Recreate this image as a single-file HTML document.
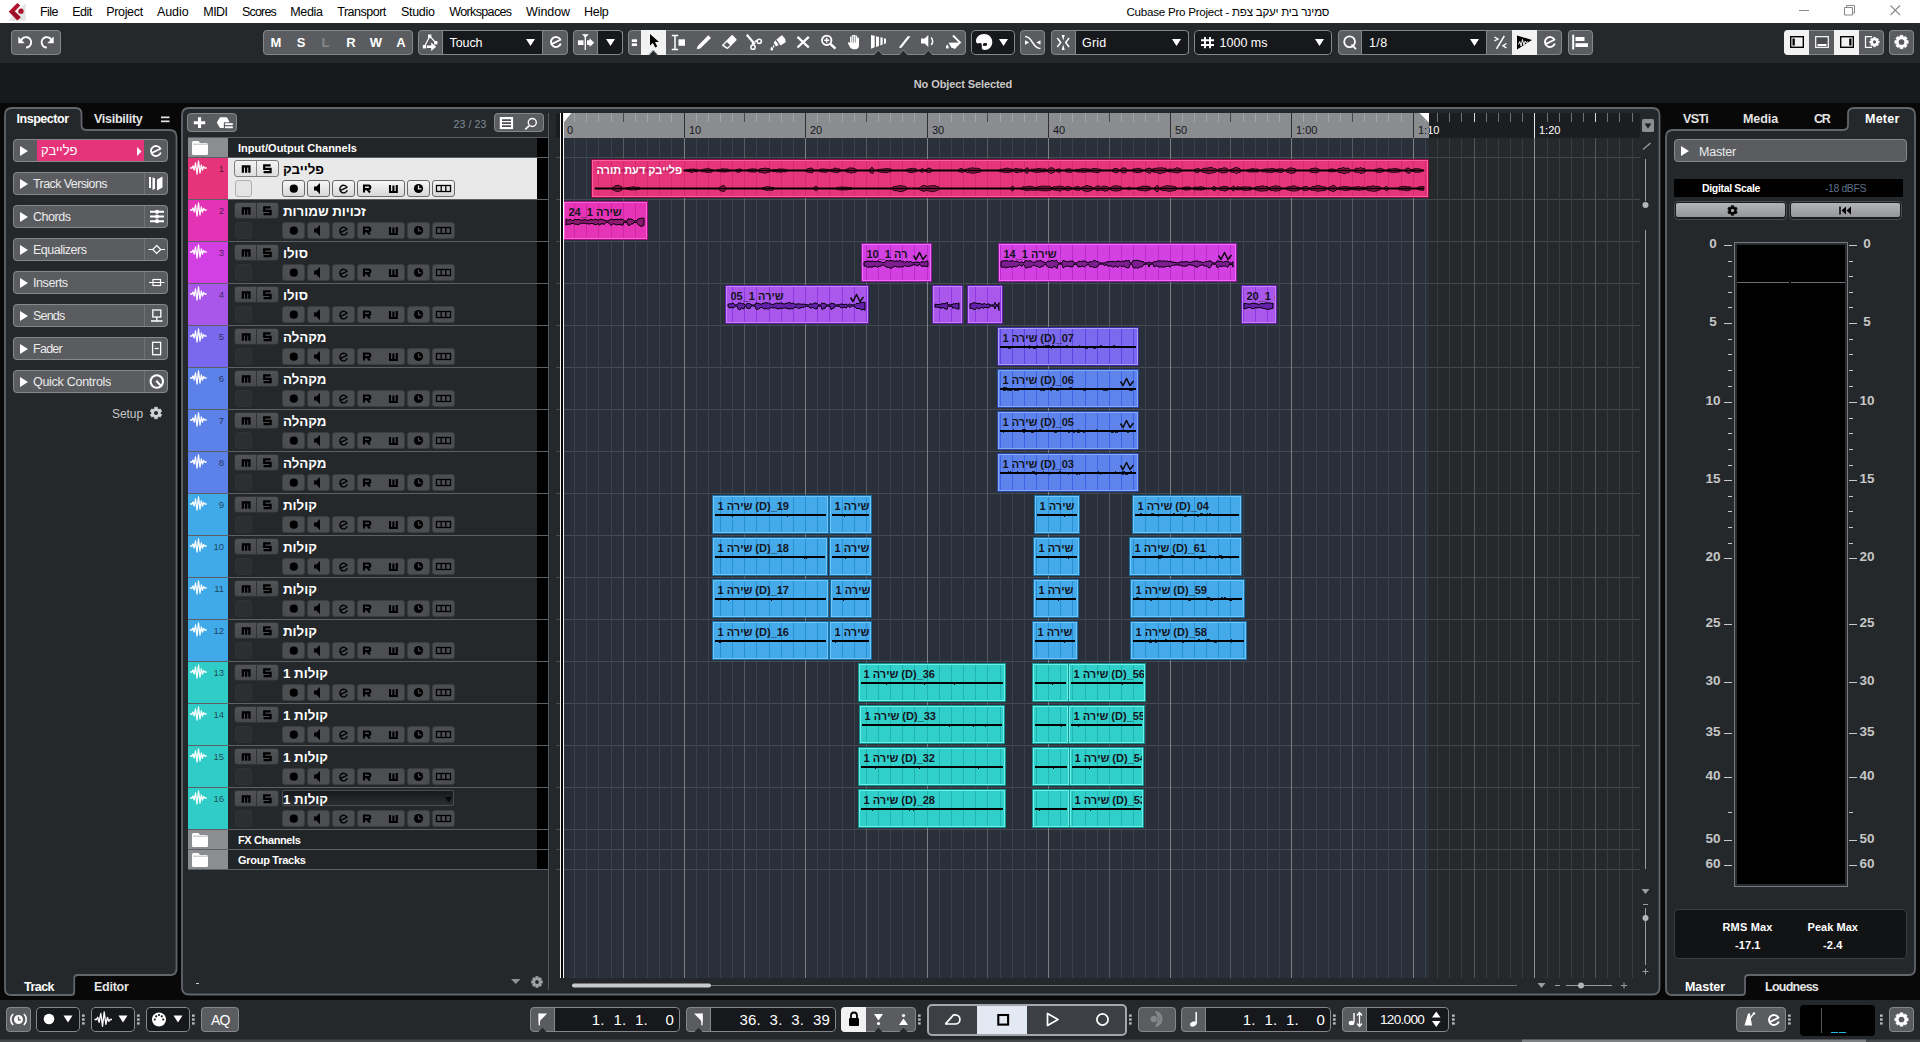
<!DOCTYPE html><html><head><meta charset="utf-8"><title>Cubase Pro Project</title><style>
*{box-sizing:border-box;margin:0;padding:0}
html,body{width:1920px;height:1042px;overflow:hidden;background:#080808}
body{position:relative;font-family:"Liberation Sans",sans-serif;font-size:12px;color:#e6e6e6;-webkit-font-smoothing:antialiased}
.a{position:absolute}
.t{position:absolute;white-space:nowrap;line-height:1}
.b{font-weight:bold}
svg{position:absolute;overflow:visible}
.btn{position:absolute;background:#5a5c60;border:1px solid #6e7074;border-radius:3px}
.dk{position:absolute;background:#17181c}
.grp{position:absolute;z-index:0;border-radius:4px;background:#5a5c60;overflow:hidden}
.grp:after{content:'';position:absolute;left:0;top:0;right:0;bottom:0;border:1px solid #85878b;border-radius:4px}
.grp .w{z-index:2}
.cell{position:absolute;top:0;bottom:0}
.panel{position:absolute;background:#24282b;border:2px solid #3d4145;border-radius:8px}
.ev{font-size:11px;font-weight:bold;overflow:hidden;height:16px;line-height:14px}</style></head><body><div class="a" style="left:0px;top:0px;width:1920px;height:23px;background:#fff"></div><svg style="left:0px;top:0px" width="30" height="23" viewBox="0 0 30 23" ><path d="M25.600 3.200V20.700H8z" fill="#e4e4e4"/><path d="M17.300 2.900l3 2.600-5.600 6 6 5.800-3.400 2.900L8.800 11.500z" fill="#b3122c"/><path d="M8.800 11.500l5.900 0 6 5.800-3.400 2.900z" fill="#9c0f26"/><circle cx="21" cy="11.200" r="2.600" fill="#a80f28"/></svg><div class="t" style="left:40px;top:5.5px;font-size:12.5px;color:#000;letter-spacing:-0.54px;">File</div><div class="t" style="left:72.25px;top:5.5px;font-size:12.5px;color:#000;letter-spacing:-0.51px;">Edit</div><div class="t" style="left:106.25px;top:5.5px;font-size:12.5px;color:#000;letter-spacing:-0.34px;">Project</div><div class="t" style="left:157px;top:5.5px;font-size:12.5px;color:#000;letter-spacing:-0.09px;">Audio</div><div class="t" style="left:203.25px;top:5.5px;font-size:12.5px;color:#000;letter-spacing:-0.53px;">MIDI</div><div class="t" style="left:242px;top:5.5px;font-size:12.5px;color:#000;letter-spacing:-0.82px;">Scores</div><div class="t" style="left:290.25px;top:5.5px;font-size:12.5px;color:#000;letter-spacing:-0.36px;">Media</div><div class="t" style="left:337.25px;top:5.5px;font-size:12.5px;color:#000;letter-spacing:-0.50px;">Transport</div><div class="t" style="left:401px;top:5.5px;font-size:12.5px;color:#000;letter-spacing:-0.32px;">Studio</div><div class="t" style="left:449.25px;top:5.5px;font-size:12.5px;color:#000;letter-spacing:-0.63px;">Workspaces</div><div class="t" style="left:526px;top:5.5px;font-size:12.5px;color:#000;letter-spacing:-0.08px;">Window</div><div class="t" style="left:584px;top:5.5px;font-size:12.5px;color:#000;letter-spacing:-0.30px;">Help</div><div class="t" style="left:1126.5px;top:6px;font-size:11.6px;color:#000;letter-spacing:-0.25px">Cubase Pro Project - סמינר בית יעקב צפת</div><svg style="left:1780px;top:0px" width="140" height="23" viewBox="0 0 140 23" ><path d="M19 10.5h10" stroke="#8a8a8a" stroke-width="1"/><path d="M64.5 7.5h8v7.5h-8z M66.5 7.5v-2h8v7.5h-2" fill="none" stroke="#8a8a8a" stroke-width="1"/><path d="M110.5 5.5l9.5 9.5M120 5.5l-9.5 9.5" stroke="#8a8a8a" stroke-width="1.1"/></svg><div class="a" style="left:0px;top:23px;width:1920px;height:40px;background:#24282b"></div><div class="grp" style="left:11px;top:30px;width:50px;height:25px;background:#5a5c60"></div><svg style="left:11px;top:30px" width="50" height="25" viewBox="0 0 50 25" ><g fill="none" stroke="#fff" stroke-width="1.9" stroke-linecap="butt"><path d="M10.2 10.300A5.200 5.200 0 1 1 15 17.500"/><path d="M40.600 10.300A5.200 5.200 0 1 0 35.800 17.500"/></g><path d="M7.300 6.500v6.800h6.400z" fill="#fff"/><path d="M42.700 6.500v6.800h-6.400z" fill="#fff"/></svg><div class="grp" style="left:263px;top:30px;width:150px;height:25px;background:#5a5c60"></div><div class="t" style="left:266px;top:36px;font-size:13px;color:#fff;font-weight:bold;width:20px;text-align:center">M</div><div class="t" style="left:291px;top:36px;font-size:13px;color:#fff;font-weight:bold;width:20px;text-align:center">S</div><div class="t" style="left:315.5px;top:36px;font-size:13px;color:#85878b;font-weight:bold;width:20px;text-align:center">L</div><div class="t" style="left:341px;top:36px;font-size:13px;color:#fff;font-weight:bold;width:20px;text-align:center">R</div><div class="t" style="left:366px;top:36px;font-size:13px;color:#fff;font-weight:bold;width:20px;text-align:center">W</div><div class="t" style="left:391px;top:36px;font-size:13px;color:#fff;font-weight:bold;width:20px;text-align:center">A</div><div class="grp" style="left:418px;top:30px;width:150px;height:25px;background:#5a5c60"><div class="cell" style="left:24px;width:101px;background:#17181c;border-left:1px solid #85878b;border-right:1px solid #85878b"></div></div><svg style="left:418px;top:30px" width="25" height="25" viewBox="0 0 25 25" ><path d="M6.500 16.500L11.800 6.200L17.600 12.500" fill="none" stroke="#fff" stroke-width="1.200"/><rect x="10" y="4.500" width="3.400" height="3.400" fill="#fff"/><rect x="16" y="11" width="3.400" height="3.400" fill="#fff"/><rect x="4.800" y="15" width="3.400" height="3.400" fill="#fff"/><path d="M9 15.400h4.200v-3l5 4.300-5 4.300v-3H9z" fill="#fff"/></svg><div class="t" style="left:449.5px;top:36.5px;font-size:12.5px;color:#fff;letter-spacing:-0.07px;">Touch</div><svg style="left:526px;top:39px" width="9" height="7" viewBox="0 0 9 7" ><path d="M0 0h9l-4.5 7z" fill="#fff"/></svg><svg style="left:548px;top:34px" width="16" height="16" viewBox="0 0 16 16" ><path d="M4.10 9.80L12.46 5.73A5.00 5.00 0 1 0 12.78 9.46" fill="none" stroke="#fff" stroke-width="1.9" stroke-linejoin="round"/></svg><div class="grp" style="left:573px;top:30px;width:50px;height:25px;background:#5a5c60"><div class="cell" style="left:24px;width:26px;background:#17181c;border-left:1px solid #85878b;border-right:1px solid #85878b"></div></div><svg style="left:573px;top:30px" width="25" height="25" viewBox="0 0 25 25" ><path d="M12.300 4.500v15.500" stroke="#fff" stroke-width="1.300"/><path d="M9 4.300h6.800l-3.400 3.400z" fill="#fff"/><rect x="5" y="10.300" width="5.500" height="4.700" fill="#fff"/><path d="M14 10.300h2.600v-2.100l4.600 4.450-4.600 4.450v-2.100H14z" fill="#fff"/></svg><svg style="left:606px;top:39px" width="9" height="7" viewBox="0 0 9 7" ><path d="M0 0h9l-4.5 7z" fill="#fff"/></svg><div class="grp" style="left:628px;top:30px;width:338px;height:25px;background:#5a5c60"><div class="cell w" style="left:13px;width:25px;background:#f2f2f2"></div></div><svg style="left:628px;top:30px" width="13" height="25" viewBox="0 0 13 25" ><rect x="3.800" y="9.300" width="5.200" height="2.700" fill="#fff"/><rect x="3.800" y="13.300" width="5.200" height="2.700" fill="#fff"/></svg><svg style="left:641px;top:30px" width="25" height="25" viewBox="0 0 25 25" ><path d="M9 4v11.500l2.900-2.600 2.300 4.700 2.100-1-2.300-4.600h4z" fill="#000"/><path d="M8.300 25l4-4.300 4 4.300z" fill="#24282b"/><path d="M8.100 24.500l4.200-4.400 4.200 4.400" fill="none" stroke="#7c7e82" stroke-width=".9"/></svg><svg style="left:666px;top:30px" width="25" height="25" viewBox="0 0 25 25" ><path d="M9 5.500v14M5.800 5.500h6.400M5.800 19.500h6.400" stroke="#fff" stroke-width="1.500" fill="none"/><rect x="12.500" y="9.300" width="6.500" height="6.500" fill="#fff"/></svg><svg style="left:691px;top:30px" width="25" height="25" viewBox="0 0 25 25" ><path d="M5.700 19.300l1-3.300 10.500-10.700 2.800 2.700-10.700 10.500z" fill="#fff"/></svg><svg style="left:716px;top:30px" width="25" height="25" viewBox="0 0 25 25" ><path d="M6.300 14.800l9.200-9.500a1 1 0 0 1 1.300 0l3.500 3.800a1 1 0 0 1 0 1.300l-8.300 8.300a1 1 0 0 1-1.300 0l-4.400-2.700a1 1 0 0 1 0-1.200z" fill="#fff"/><path d="M7.900 15l3-3.100 3.200 3.200-2.700 2.500z" fill="#5a5c60"/></svg><svg style="left:741px;top:30px" width="25" height="25" viewBox="0 0 25 25" ><path d="M5.800 4.800l8 9.500" stroke="#fff" stroke-width="2.200" fill="none"/><path d="M13.800 11.800l2.400-1.200M12.200 12.700l-.8 2.200" stroke="#fff" stroke-width="1.800" fill="none"/><circle cx="18.300" cy="11.300" r="2.100" fill="none" stroke="#fff" stroke-width="1.500"/><circle cx="12" cy="17.200" r="2.100" fill="none" stroke="#fff" stroke-width="1.500"/></svg><svg style="left:766px;top:30px" width="25" height="25" viewBox="0 0 25 25" ><path d="M10.400 9.500l5-4 .9-.1 3 3.700.3 3.100-5 3.300z" fill="#fff"/><path d="M9.300 10.300l3.400 4.800-2.700 1.400-2.300-3.600z" fill="#fff"/><path d="M6.900 14.200l1.800 2.700-1.600.9z" fill="#fff"/><path d="M5.800 16.500c.9 1.200 1.300 2 1.300 2.700a1.300 1.300 0 0 1-2.600 0c0-.7.400-1.500 1.300-2.700z" fill="#fff"/></svg><svg style="left:791px;top:30px" width="25" height="25" viewBox="0 0 25 25" ><path d="M6.500 6.800l11.300 10.700M17.800 6.800L6.500 17.500" stroke="#fff" stroke-width="2.300" fill="none"/></svg><svg style="left:816px;top:30px" width="25" height="25" viewBox="0 0 25 25" ><circle cx="10.700" cy="10.300" r="4.700" fill="none" stroke="#fff" stroke-width="1.900"/><path d="M14.200 13.800l5.300 4.800" stroke="#fff" stroke-width="2.500"/><path d="M8.200 10.300h5M10.700 7.800v5" stroke="#fff" stroke-width="1.500"/></svg><svg style="left:841px;top:30px" width="25" height="25" viewBox="0 0 25 25" ><path d="M9 13V7.300a.9.900 0 0 1 1.800 0V6a.9.900 0 0 1 1.800 0V5.700a.9.900 0 0 1 1.800 0V6.500a.9.900 0 0 1 1.800 0V8.300a.9.900 0 0 1 1.800 0v7.200c0 2.300-1.500 3.700-3.700 3.700h-1.800c-1.800 0-2.700-.8-3.600-2.200L7 13.500c-.5-.9.300-1.700 1.200-1.200z" fill="#fff"/><path d="M10.800 7v5.500M12.600 6v6.500M14.400 6.500v6" stroke="#5a5c60" stroke-width=".6"/></svg><svg style="left:866px;top:30px" width="25" height="25" viewBox="0 0 25 25" ><path d="M5 5l3.700.8v11.400L5 18.800z" fill="#fff"/><path d="M10 6.200l3 .7v9.200l-3 1z" fill="#fff"/><path d="M14.400 7.200l2.300.6v6.800l-2.300.8z" fill="#fff"/><path d="M18 8.200l2 .6v4.400l-2 .8z" fill="#fff"/><path d="M8.300 25l4-4.300 4 4.300z" fill="#24282b"/><path d="M8.100 24.500l4.200-4.400 4.200 4.400" fill="none" stroke="#7c7e82" stroke-width=".9"/></svg><svg style="left:891px;top:30px" width="25" height="25" viewBox="0 0 25 25" ><path d="M7.700 17.800h2.800L19.500 6.200h-2.800z" fill="#fff"/><path d="M8.300 25l4-4.300 4 4.300z" fill="#24282b"/><path d="M8.100 24.500l4.200-4.400 4.200 4.400" fill="none" stroke="#7c7e82" stroke-width=".9"/></svg><svg style="left:916px;top:30px" width="25" height="25" viewBox="0 0 25 25" ><path d="M5 8.500h3.600l3.700-3.500v12l-3.700-3.500H5z" fill="#fff"/><path d="M15 7.500a4.800 4.800 0 0 1 0 7.300" fill="none" stroke="#fff" stroke-width="1.500"/><path d="M8.300 25l4-4.300 4 4.300z" fill="#24282b"/><path d="M8.100 24.500l4.200-4.400 4.200 4.400" fill="none" stroke="#7c7e82" stroke-width=".9"/></svg><svg style="left:941px;top:30px" width="25" height="25" viewBox="0 0 25 25" ><path d="M12 5.500l7 7-6 6" fill="none" stroke="#fff" stroke-width="1.800"/><path d="M7.500 12.800l10.500-.3-5 5.800-2.300-.2z" fill="#fff"/><path d="M6.300 14.500c.9 1.200 1.400 2 1.400 2.800a1.400 1.400 0 0 1-2.800 0c0-.8.500-1.600 1.400-2.800z" fill="#fff"/></svg><div class="grp" style="left:971px;top:30px;width:44px;height:25px;background:#17181c"></div><svg style="left:971px;top:30px" width="44" height="25" viewBox="0 0 44 25" ><path d="M13 4c-4.600 0-8 3.300-8 7 0 1.600.7 2.400 1.800 2.400.9 0 1.300-.4 2.300-.4 1.200 0 1.700.9 1.700 2.200v2.500c0 1.400.9 2.200 2.600 2.200 4.600 0 7.900-3.500 7.900-8 0-4.600-3.500-7.900-8.300-7.900z" fill="#fff"/><ellipse cx="14" cy="14.500" rx="2.300" ry="1.500" fill="#17181c" transform="rotate(-15 14 14.500)"/></svg><svg style="left:998.5px;top:39px" width="9" height="7" viewBox="0 0 9 7" ><path d="M0 0h9l-4.5 7z" fill="#fff"/></svg><div class="grp" style="left:1020px;top:30px;width:25px;height:25px;background:#5a5c60"></div><svg style="left:1020px;top:30px" width="25" height="25" viewBox="0 0 25 25" ><path d="M5 6.500c8 0 7 12 15.500 12" fill="none" stroke="#fff" stroke-width="1.600"/><path d="M5 10.300l4.200 2.200L5 14.700z M20.500 10.300l-4.200 2.200 4.200 2.200z" fill="#fff"/></svg><div class="grp" style="left:1051px;top:30px;width:138px;height:25px;background:#5a5c60"><div class="cell" style="left:24px;width:114px;background:#17181c;border-left:1px solid #85878b;border-right:1px solid #85878b"></div></div><svg style="left:1051px;top:30px" width="25" height="25" viewBox="0 0 25 25" ><path d="M10.700 5h3l-1.500 5.500z M10.700 20h3l-1.500-5.500z" fill="#fff"/><path d="M6.300 8l3.400 4.500-3.400 4.500M18.100 8l-3.400 4.500 3.400 4.500" stroke="#fff" stroke-width="1.500" fill="none"/></svg><div class="t" style="left:1082px;top:36.5px;font-size:12.5px;color:#fff;letter-spacing:0.22px;">Grid</div><svg style="left:1172px;top:38.5px" width="9" height="7" viewBox="0 0 9 7" ><path d="M0 0h9l-4.5 7z" fill="#fff"/></svg><div class="grp" style="left:1194px;top:30px;width:138px;height:25px;background:#17181c"></div><svg style="left:1194px;top:30px" width="25" height="25" viewBox="0 0 25 25" ><path d="M11 7v11.200M16 7v11.200M7 10.300h13M7 15h13" stroke="#fff" stroke-width="1.900" fill="none"/></svg><div class="t" style="left:1219.5px;top:36.5px;font-size:12.5px;color:#fff;letter-spacing:0.01px;">1000 ms</div><svg style="left:1315px;top:38.5px" width="9" height="7" viewBox="0 0 9 7" ><path d="M0 0h9l-4.5 7z" fill="#fff"/></svg><div class="grp" style="left:1338px;top:30px;width:224px;height:25px;background:#5a5c60"><div class="cell" style="left:23px;width:126px;background:#17181c;border-left:1px solid #85878b;border-right:1px solid #85878b"></div><div class="cell w" style="left:174px;width:25px;background:#f2f2f2"></div></div><svg style="left:1338px;top:30px" width="25" height="25" viewBox="0 0 25 25" ><circle cx="11.600" cy="11.800" r="5.400" fill="none" stroke="#fff" stroke-width="1.800"/><path d="M13.500 14.500l4.500 4.700" stroke="#fff" stroke-width="1.800"/></svg><div class="t" style="left:1369px;top:36.5px;font-size:12.5px;color:#fff;letter-spacing:0.38px;">1/8</div><svg style="left:1470px;top:38.5px" width="9" height="7" viewBox="0 0 9 7" ><path d="M0 0h9l-4.5 7z" fill="#fff"/></svg><svg style="left:1487px;top:30px" width="25" height="25" viewBox="0 0 25 25" ><path d="M17.300 6L9.500 18.800" stroke="#fff" stroke-width="1.500" fill="none"/><path d="M7.400 7l3.600 2-3.600 2M19.500 13.500l-3.500 2.200 3.500 2.300" stroke="#fff" stroke-width="1.400" fill="none"/></svg><svg style="left:1512px;top:30px" width="25" height="25" viewBox="0 0 25 25" ><path d="M5 5.400l15 4.600L5 19.500z" fill="#000"/><path d="M6.500 14.500l1.300-3 1.300 4.500 1.400-6.500 1.400 5.500 1.300-4 1.300 2.300 1-1.600 1 .8" fill="none" stroke="#f2f2f2" stroke-width="1"/></svg><svg style="left:1541.7px;top:34px" width="16" height="16" viewBox="0 0 16 16" ><path d="M4.10 9.80L12.46 5.73A5.00 5.00 0 1 0 12.78 9.46" fill="none" stroke="#fff" stroke-width="1.9" stroke-linejoin="round"/></svg><div class="grp" style="left:1568px;top:30px;width:25px;height:25px;background:#5a5c60"></div><svg style="left:1568px;top:30px" width="25" height="25" viewBox="0 0 25 25" ><rect x="4.200" y="4.700" width="2" height="14.800" fill="#fff"/><rect x="7.500" y="7" width="9" height="4" fill="#fff"/><rect x="7.500" y="13.200" width="12.500" height="3.800" fill="#fff"/></svg><div class="grp" style="left:1784px;top:30px;width:100px;height:25px;background:#5a5c60"><div class="cell w" style="left:0px;width:25px;background:#f2f2f2"></div><div class="cell w" style="left:50px;width:25px;background:#f2f2f2"></div></div><svg style="left:1784px;top:30px" width="100" height="25" viewBox="0 0 100 25" ><rect x="6.700" y="6.700" width="12.600" height="10.600" fill="#f2f2f2" stroke="#000" stroke-width="1.400"/><rect x="8.500" y="8.500" width="2.300" height="7" fill="#000"/><rect x="31.700" y="6.700" width="12.600" height="10.600" fill="#4a4c50" stroke="#fff" stroke-width="1.200"/><rect x="33.500" y="14" width="9" height="2" fill="#fff"/><rect x="56.700" y="6.700" width="12.600" height="10.600" fill="#f2f2f2" stroke="#000" stroke-width="1.400"/><rect x="65.200" y="8.500" width="2.300" height="7" fill="#000"/><path d="M88 6.700h-6.500v10.600h6.500" fill="none" stroke="#fff" stroke-width="1.200"/><path d="M89.48 8.50L89.49 7.31L91.51 7.31L91.52 8.50L92.26 8.80L93.10 7.97L94.53 9.40L93.70 10.24L94.00 10.98L95.19 10.99L95.19 13.01L94.00 13.02L93.70 13.76L94.53 14.60L93.10 16.03L92.26 15.20L91.52 15.50L91.51 16.69L89.49 16.69L89.48 15.50L88.74 15.20L87.90 16.03L86.47 14.60L87.30 13.76L87.00 13.02L85.81 13.01L85.81 10.99L87.00 10.98L87.30 10.24L86.47 9.40L87.90 7.97L88.74 8.80Z" fill="#fff" stroke="#fff" stroke-width=".6" stroke-linejoin="round"/><circle cx="90.5" cy="12" r="1.63" fill="#5a5c60"/></svg><div class="grp" style="left:1889px;top:30px;width:25px;height:25px;background:#5a5c60"></div><svg style="left:1889px;top:30px" width="25" height="25" viewBox="0 0 25 25" ><path d="M10.98 6.78L11.07 5.35L13.93 5.35L14.02 6.78L15.12 7.23L16.19 6.29L18.21 8.31L17.27 9.38L17.72 10.48L19.15 10.57L19.15 13.43L17.72 13.52L17.27 14.62L18.21 15.69L16.19 17.71L15.12 16.77L14.02 17.22L13.93 18.65L11.07 18.65L10.98 17.22L9.88 16.77L8.81 17.71L6.79 15.69L7.73 14.62L7.28 13.52L5.85 13.43L5.85 10.57L7.28 10.48L7.73 9.38L6.79 8.31L8.81 6.29L9.88 7.23Z" fill="#fff" stroke="#fff" stroke-width=".6" stroke-linejoin="round"/><circle cx="12.5" cy="12" r="2.86" fill="#5a5c60"/></svg><div class="a" style="left:0px;top:63px;width:1920px;height:40px;background:#18191b"></div><div class="t" style="left:913px;top:78.5px;font-size:11px;color:#c9c9c9;font-weight:bold;width:100px;text-align:center;letter-spacing:-0.1px">No Object Selected</div><svg style="left:0px;top:0px" width="1920" height="1042" viewBox="0 0 1920 1042" ><path d="M5.0 115.0Q5.0 108.0 12.0 108.0L75.5 108.0Q81.5 108.0 81.5 114.0L81.5 125.0Q81.5 130.0 86.5 130.0L169.5 130.0Q176.5 130.0 176.5 137.0L176.5 969.0Q176.5 975.0 170.5 975.0L77.7 975.0Q74.2 975.0 74.2 978.5L74.2 992.0Q74.2 995.0 71.2 995.0L11.0 995.0Q5.0 995.0 5.0 989.0Z" fill="#24282b" stroke="#62656a" stroke-width="1.800"/><path d="M182.0 115.0Q182.0 108.0 189.0 108.0L1652.5 108.0Q1659.5 108.0 1659.5 115.0L1659.5 987.5Q1659.5 994.5 1652.5 994.5L189.0 994.5Q182.0 994.5 182.0 987.5Z" fill="#24282b" stroke="#62656a" stroke-width="1.800"/><path d="M1666.0 137.0Q1666.0 130.0 1673.0 130.0L1843.0 130.0Q1848.0 130.0 1848.0 125.0L1848.0 114.0Q1848.0 108.0 1854.0 108.0L1908.0 108.0Q1915.0 108.0 1915.0 115.0L1915.0 969.0Q1915.0 975.0 1909.0 975.0L1748.5 975.0Q1745.0 975.0 1745.0 978.5L1745.0 992.0Q1745.0 995.0 1742.0 995.0L1672.0 995.0Q1666.0 995.0 1666.0 989.0Z" fill="#24282b" stroke="#62656a" stroke-width="1.800"/></svg><div class="t" style="left:16.5px;top:113px;font-size:12.5px;color:#fff;font-weight:bold;letter-spacing:-0.47px;">Inspector</div><div class="t" style="left:94px;top:113px;font-size:12.5px;color:#e4e4e4;font-weight:bold;letter-spacing:-0.27px;">Visibility</div><svg style="left:160.8px;top:115.5px" width="9" height="8" viewBox="0 0 9 8" ><rect x="0" y="0.5" width="8.5" height="1.7" fill="#e6e6e6"/><rect x="0" y="4.500" width="8.500" height="1.700" fill="#e6e6e6"/></svg><div class="grp" style="left:13px;top:139px;width:155px;height:23px"><div class="cell" style="left:24px;width:107px;background:#e6347a"></div></div><svg style="left:20px;top:145.5px" width="8" height="10" viewBox="0 0 8 10" ><path d="M0 0l8 5-8 5z" fill="#fff"/></svg><div class="grp" style="left:13px;top:172px;width:155px;height:23px"><div class="cell" style="left:130.500px;width:1px;background:#707276"></div></div><svg style="left:20px;top:178.5px" width="8" height="10" viewBox="0 0 8 10" ><path d="M0 0l8 5-8 5z" fill="#fff"/></svg><div class="t" style="left:33px;top:177.5px;font-size:12.5px;color:#ececec;letter-spacing:-0.59px;">Track Versions</div><div class="grp" style="left:13px;top:205px;width:155px;height:23px"><div class="cell" style="left:130.500px;width:1px;background:#707276"></div></div><svg style="left:20px;top:211.5px" width="8" height="10" viewBox="0 0 8 10" ><path d="M0 0l8 5-8 5z" fill="#fff"/></svg><div class="t" style="left:33px;top:210.5px;font-size:12.5px;color:#ececec;letter-spacing:-0.47px;">Chords</div><div class="grp" style="left:13px;top:238px;width:155px;height:23px"><div class="cell" style="left:130.500px;width:1px;background:#707276"></div></div><svg style="left:20px;top:244.5px" width="8" height="10" viewBox="0 0 8 10" ><path d="M0 0l8 5-8 5z" fill="#fff"/></svg><div class="t" style="left:33px;top:243.5px;font-size:12.5px;color:#ececec;letter-spacing:-0.49px;">Equalizers</div><div class="grp" style="left:13px;top:271px;width:155px;height:23px"><div class="cell" style="left:130.500px;width:1px;background:#707276"></div></div><svg style="left:20px;top:277.5px" width="8" height="10" viewBox="0 0 8 10" ><path d="M0 0l8 5-8 5z" fill="#fff"/></svg><div class="t" style="left:33px;top:276.5px;font-size:12.5px;color:#ececec;letter-spacing:-0.43px;">Inserts</div><div class="grp" style="left:13px;top:304px;width:155px;height:23px"><div class="cell" style="left:130.500px;width:1px;background:#707276"></div></div><svg style="left:20px;top:310.5px" width="8" height="10" viewBox="0 0 8 10" ><path d="M0 0l8 5-8 5z" fill="#fff"/></svg><div class="t" style="left:33px;top:309.5px;font-size:12.5px;color:#ececec;letter-spacing:-0.79px;">Sends</div><div class="grp" style="left:13px;top:337px;width:155px;height:23px"><div class="cell" style="left:130.500px;width:1px;background:#707276"></div></div><svg style="left:20px;top:343.5px" width="8" height="10" viewBox="0 0 8 10" ><path d="M0 0l8 5-8 5z" fill="#fff"/></svg><div class="t" style="left:33px;top:342.5px;font-size:12.5px;color:#ececec;letter-spacing:-0.73px;">Fader</div><div class="grp" style="left:13px;top:370px;width:155px;height:23px"><div class="cell" style="left:130.500px;width:1px;background:#707276"></div></div><svg style="left:20px;top:376.5px" width="8" height="10" viewBox="0 0 8 10" ><path d="M0 0l8 5-8 5z" fill="#fff"/></svg><div class="t" style="left:33px;top:375.5px;font-size:12.5px;color:#ececec;letter-spacing:-0.28px;">Quick Controls</div><div class="t" style="left:41px;top:143.5px;font-size:13px;color:#fff;">פלייבק</div><svg style="left:136.5px;top:146.5px" width="5" height="9" viewBox="0 0 5 9" ><path d="M0 0l4.500 4.500L0 9z" fill="#fff"/></svg><svg style="left:148.3px;top:142.5px" width="16" height="16" viewBox="0 0 16 16" ><path d="M4.10 9.80L12.46 5.73A5.00 5.00 0 1 0 12.78 9.46" fill="none" stroke="#fff" stroke-width="1.8" stroke-linejoin="round"/></svg><svg style="left:146px;top:172px" width="22" height="23" viewBox="0 0 22 23" ><path d="M3 5h2v11h-2z" fill="#fff"/><path d="M6.500 5.500l2.500.800v10.400l-2.500 1.300z" fill="#fff"/><path d="M11 7.500l5.500-3v11l-5.500 3z" fill="#fff"/></svg><svg style="left:146px;top:205px" width="22" height="23" viewBox="0 0 22 23" ><path d="M4 6.800h14M4 11.500h14M4 16.200h14" stroke="#fff" stroke-width="1.900"/><circle cx="11" cy="6.800" r="2.100" fill="#fff"/><circle cx="11" cy="11.500" r="2.100" fill="#fff"/><circle cx="11" cy="16.200" r="2.100" fill="#fff"/></svg><svg style="left:146px;top:238px" width="22" height="23" viewBox="0 0 22 23" ><path d="M2.500 11.500h5M14 11.500h5" stroke="#fff" stroke-width="1.200"/><path d="M10.700 7.500l4 4-4 4-4-4z" fill="none" stroke="#fff" stroke-width="1.200"/></svg><svg style="left:146px;top:271px" width="22" height="23" viewBox="0 0 22 23" ><path d="M3 11.500h4M14.500 11.500h4" stroke="#fff" stroke-width="1.200"/><rect x="7" y="8.500" width="7.500" height="6" fill="none" stroke="#fff" stroke-width="1.200"/><path d="M7 11.500h7.500" stroke="#fff" stroke-width="1"/></svg><svg style="left:146px;top:304px" width="22" height="23" viewBox="0 0 22 23" ><rect x="6.800" y="6" width="8" height="7" fill="none" stroke="#fff" stroke-width="1.300"/><path d="M10.800 13v3.500M5 17h11.500" stroke="#fff" stroke-width="1.300"/></svg><svg style="left:146px;top:337px" width="22" height="23" viewBox="0 0 22 23" ><rect x="6.600" y="5.300" width="8" height="12.400" fill="none" stroke="#fff" stroke-width="1.300"/><path d="M8.600 11.500h4" stroke="#fff" stroke-width="1.300"/></svg><svg style="left:146px;top:370px" width="22" height="23" viewBox="0 0 22 23" ><circle cx="10.800" cy="11.500" r="6.200" fill="none" stroke="#fff" stroke-width="2.100"/><path d="M10.300 10.800L15 16" stroke="#fff" stroke-width="2.100"/></svg><div class="t" style="left:112px;top:407.5px;font-size:12px;color:#c4c6c8;letter-spacing:-0.07px;">Setup</div><svg style="left:148px;top:405px" width="16" height="16" viewBox="0 0 16 16" ><path d="M6.46 3.71L6.51 2.19L9.49 2.19L9.54 3.71L10.94 4.52L12.29 3.80L13.78 6.39L12.49 7.19L12.49 8.81L13.78 9.61L12.29 12.20L10.94 11.48L9.54 12.29L9.49 13.81L6.51 13.81L6.46 12.29L5.06 11.48L3.71 12.20L2.22 9.61L3.51 8.81L3.51 7.19L2.22 6.39L3.71 3.80L5.06 4.52Z" fill="#d2d4d6" stroke="#d2d4d6" stroke-width=".6" stroke-linejoin="round"/><circle cx="8" cy="8" r="2.04" fill="#24282b"/></svg><div class="t" style="left:24px;top:980.5px;font-size:12.5px;color:#fff;font-weight:bold;letter-spacing:-0.53px;">Track</div><div class="t" style="left:94px;top:980.5px;font-size:12.5px;color:#e4e4e4;font-weight:bold;letter-spacing:-0.27px;">Editor</div><div class="grp" style="left:187px;top:113px;width:50px;height:19px"></div><svg style="left:187px;top:113px" width="50" height="19" viewBox="0 0 50 19" ><path d="M12.550 4.200v10.800M6.800 9.800h11.450" stroke="#fff" stroke-width="3.100"/><path d="M29.800 9.500l3.200-5.300h6.800l2.800 4.800-3.600 6h-6z" fill="#fff"/><rect x="36.800" y="9.300" width="10" height="6.500" fill="#5a5c60"/><rect x="38" y="10.200" width="7.800" height="1.900" fill="#fff"/><rect x="38" y="13.300" width="7.800" height="1.900" fill="#fff"/></svg><div class="t" style="left:453.5px;top:118.5px;font-size:10.5px;color:#7f8a9a;letter-spacing:0.13px;">23 / 23</div><div class="grp" style="left:494px;top:113px;width:50px;height:19px"></div><svg style="left:494px;top:113px" width="50" height="19" viewBox="0 0 50 19" ><rect x="5.800" y="4" width="13.300" height="12.100" fill="#fff"/><path d="M8 7.100h9M8 10.100h9M8 13.100h9" stroke="#4a4c50" stroke-width="1.600"/><circle cx="38.300" cy="9.500" r="4" fill="none" stroke="#fff" stroke-width="1.400"/><path d="M35 12.900l-3.700 3.400" stroke="#fff" stroke-width="1.800"/></svg><div class="a" style="left:537px;top:138px;width:11px;height:731px;background:#000"></div><div class="a" style="left:548px;top:113px;width:1px;height:877px;background:#55585c"></div><div class="a" style="left:188px;top:137px;width:360px;height:1px;background:#5c5f63"></div><div class="a" style="left:188px;top:157px;width:360px;height:1px;background:#5c5f63"></div><div class="a" style="left:188px;top:199px;width:360px;height:1px;background:#5c5f63"></div><div class="a" style="left:188px;top:241px;width:360px;height:1px;background:#5c5f63"></div><div class="a" style="left:188px;top:283px;width:360px;height:1px;background:#5c5f63"></div><div class="a" style="left:188px;top:325px;width:360px;height:1px;background:#5c5f63"></div><div class="a" style="left:188px;top:367px;width:360px;height:1px;background:#5c5f63"></div><div class="a" style="left:188px;top:409px;width:360px;height:1px;background:#5c5f63"></div><div class="a" style="left:188px;top:451px;width:360px;height:1px;background:#5c5f63"></div><div class="a" style="left:188px;top:493px;width:360px;height:1px;background:#5c5f63"></div><div class="a" style="left:188px;top:535px;width:360px;height:1px;background:#5c5f63"></div><div class="a" style="left:188px;top:577px;width:360px;height:1px;background:#5c5f63"></div><div class="a" style="left:188px;top:619px;width:360px;height:1px;background:#5c5f63"></div><div class="a" style="left:188px;top:661px;width:360px;height:1px;background:#5c5f63"></div><div class="a" style="left:188px;top:703px;width:360px;height:1px;background:#5c5f63"></div><div class="a" style="left:188px;top:745px;width:360px;height:1px;background:#5c5f63"></div><div class="a" style="left:188px;top:787px;width:360px;height:1px;background:#5c5f63"></div><div class="a" style="left:188px;top:829px;width:360px;height:1px;background:#5c5f63"></div><div class="a" style="left:188px;top:849px;width:360px;height:1px;background:#5c5f63"></div><div class="a" style="left:188px;top:869px;width:360px;height:1px;background:#5c5f63"></div><div class="a" style="left:188px;top:138px;width:40px;height:19px;background:#8c8d90"></div><div class="a" style="left:228px;top:138px;width:309px;height:19px;background:#222528"></div><svg style="left:192px;top:140px" width="16" height="15" viewBox="0 0 16 15" ><path d="M0 2.500a1.500 1.500 0 0 1 1.500-1.500h5l1.500 2h6.500a1.500 1.500 0 0 1 1.500 1.500v9a1.500 1.500 0 0 1-1.500 1.500h-13a1.500 1.500 0 0 1-1.500-1.500z" fill="#fff"/><path d="M1 4.200h14.500" stroke="#8a8b8e" stroke-width=".6"/></svg><div class="t" style="left:238px;top:142.5px;font-size:11px;color:#fff;font-weight:bold;letter-spacing:0.02px;">Input/Output Channels</div><div class="a" style="left:188px;top:830px;width:40px;height:19px;background:#8c8d90"></div><div class="a" style="left:228px;top:830px;width:309px;height:19px;background:#222528"></div><svg style="left:192px;top:832px" width="16" height="15" viewBox="0 0 16 15" ><path d="M0 2.500a1.500 1.500 0 0 1 1.500-1.500h5l1.500 2h6.500a1.500 1.500 0 0 1 1.500 1.500v9a1.500 1.500 0 0 1-1.500 1.500h-13a1.500 1.500 0 0 1-1.500-1.500z" fill="#fff"/><path d="M1 4.200h14.500" stroke="#8a8b8e" stroke-width=".6"/></svg><div class="t" style="left:238px;top:834.5px;font-size:11px;color:#fff;font-weight:bold;letter-spacing:-0.37px;">FX Channels</div><div class="a" style="left:188px;top:850px;width:40px;height:19px;background:#8c8d90"></div><div class="a" style="left:228px;top:850px;width:309px;height:19px;background:#222528"></div><svg style="left:192px;top:852px" width="16" height="15" viewBox="0 0 16 15" ><path d="M0 2.500a1.500 1.500 0 0 1 1.500-1.500h5l1.500 2h6.500a1.500 1.500 0 0 1 1.500 1.500v9a1.500 1.500 0 0 1-1.500 1.500h-13a1.500 1.500 0 0 1-1.500-1.500z" fill="#fff"/><path d="M1 4.200h14.500" stroke="#8a8b8e" stroke-width=".6"/></svg><div class="t" style="left:238px;top:854.5px;font-size:11px;color:#fff;font-weight:bold;letter-spacing:-0.28px;">Group Tracks</div><div class="a" style="left:188px;top:158px;width:40px;height:41px;background:#e6347a"></div><div class="a" style="left:228px;top:158px;width:309px;height:41px;background:#e9e9e9"></div><svg style="left:189.5px;top:161px" width="17" height="14" viewBox="0 0 17 14" ><path d="M0 7h2l1-2 1.200 4 1.300-7 1.500 11 1.500-13 1.500 12 1.300-8 1.200 5 1.200-3.500 1 1.500h2" fill="none" stroke="#fff" stroke-width="1.300" stroke-linejoin="round"/></svg><div class="t" style="left:204px;top:164px;font-size:9.5px;color:rgba(20,20,40,.72);width:20px;text-align:right">1</div><div class="a" style="left:234px;top:160px;width:45px;height:17px;background:linear-gradient(#f4f4f4,#dedede);border:1px solid #7d7d7d;border-radius:3px"></div><div class="a" style="left:256px;top:161px;width:1px;height:15px;background:#8a8a8a"></div><svg style="left:234px;top:160px" width="45" height="17" viewBox="0 0 45 17" ><path d="M8.900 12.800v-6.400h6.500v6.400M12.150 6.400v6.400" fill="none" stroke="#000" stroke-width="2.300"/><path d="M36.600 5.400h-6.400v3.400h6.400v3.400h-7" fill="none" stroke="#000" stroke-width="2.200"/></svg><div class="t" style="left:283px;top:163px;font-size:13.3px;color:#000;font-weight:bold;">פלייבק</div><div class="a" style="left:235px;top:180px;width:17px;height:17px;background:#e4e4e4;border:1px solid #b0b0b0;border-radius:3px"></div><div class="a" style="left:282px;top:180px;width:23px;height:17px;background:linear-gradient(#f6f6f6,#d8d8d8);border:1px solid #6a6a6a;border-radius:3px"></div><div class="a" style="left:307px;top:180px;width:23px;height:17px;background:linear-gradient(#f6f6f6,#d8d8d8);border:1px solid #6a6a6a;border-radius:3px"></div><div class="a" style="left:332px;top:180px;width:23px;height:17px;background:linear-gradient(#f6f6f6,#d8d8d8);border:1px solid #6a6a6a;border-radius:3px"></div><div class="a" style="left:357px;top:180px;width:48px;height:17px;background:linear-gradient(#f6f6f6,#d8d8d8);border:1px solid #6a6a6a;border-radius:3px"></div><div class="a" style="left:407px;top:180px;width:23px;height:17px;background:linear-gradient(#f6f6f6,#d8d8d8);border:1px solid #6a6a6a;border-radius:3px"></div><div class="a" style="left:432px;top:180px;width:23px;height:17px;background:linear-gradient(#f6f6f6,#d8d8d8);border:1px solid #6a6a6a;border-radius:3px"></div><svg style="left:282px;top:180px" width="175" height="17" viewBox="0 0 175 17" ><circle cx="11.800" cy="8.700" r="4.100" fill="#000"/><path d="M32 6.600h2.400l3.600-3.600v11.200l-3.600-3.600H32z" fill="#000"/><path d="M58.500 10.400L65 7.300A3.800 3.800 0 1 0 65.300 10.100" fill="none" stroke="#000" stroke-width="1.400" stroke-linejoin="round"/><path d="M82 12.500v-7h4.500a1.800 1.800 0 0 1 0 3.600h-4.500m3 0l3 3.400" fill="none" stroke="#000" stroke-width="2.100"/><path d="M108 5v7h6.800v-7M111.400 5.500v6.500" fill="none" stroke="#000" stroke-width="2.100"/><circle cx="136.500" cy="8.500" r="4.600" fill="#000"/></svg><svg style="left:282px;top:180px" width="175" height="17" viewBox="0 0 175 17" ><path d="M136.500 5.500v3.300h3" fill="none" stroke="#ececec" stroke-width="1.300"/><rect x="154.500" y="5.500" width="14" height="6" fill="none" stroke="#000" stroke-width="1.300"/><path d="M159.200 5.500v6M163.800 5.500v6" stroke="#000" stroke-width="1.300"/></svg><div class="a" style="left:188px;top:200px;width:40px;height:41px;background:#e433b4"></div><svg style="left:189.5px;top:203px" width="17" height="14" viewBox="0 0 17 14" ><path d="M0 7h2l1-2 1.200 4 1.300-7 1.500 11 1.500-13 1.500 12 1.300-8 1.200 5 1.200-3.500 1 1.500h2" fill="none" stroke="#fff" stroke-width="1.300" stroke-linejoin="round"/></svg><div class="t" style="left:204px;top:206px;font-size:9.5px;color:rgba(20,20,40,.72);width:20px;text-align:right">2</div><div class="a" style="left:234px;top:202px;width:45px;height:17px;background:linear-gradient(#505256,#48494d);border:1px solid #2f3134;border-radius:3px"></div><div class="a" style="left:256px;top:203px;width:1px;height:15px;background:#2f3134"></div><svg style="left:234px;top:202px" width="45" height="17" viewBox="0 0 45 17" ><path d="M8.900 12.800v-6.400h6.500v6.400M12.150 6.400v6.400" fill="none" stroke="#000" stroke-width="2.300"/><path d="M36.600 5.400h-6.400v3.400h6.400v3.400h-7" fill="none" stroke="#000" stroke-width="2.200"/></svg><div class="t" style="left:283px;top:205px;font-size:13.3px;color:#fff;font-weight:bold;">זכויות שמורות</div><div class="a" style="left:235px;top:222px;width:17px;height:17px;background:#2c2f32;border:1px solid #303336;border-radius:3px"></div><div class="a" style="left:282px;top:222px;width:23px;height:17px;background:#4c4e52;border:1px solid #3a3c40;border-radius:3px"></div><div class="a" style="left:307px;top:222px;width:23px;height:17px;background:#4c4e52;border:1px solid #3a3c40;border-radius:3px"></div><div class="a" style="left:332px;top:222px;width:23px;height:17px;background:#4c4e52;border:1px solid #3a3c40;border-radius:3px"></div><div class="a" style="left:357px;top:222px;width:48px;height:17px;background:#4c4e52;border:1px solid #3a3c40;border-radius:3px"></div><div class="a" style="left:407px;top:222px;width:23px;height:17px;background:#4c4e52;border:1px solid #3a3c40;border-radius:3px"></div><div class="a" style="left:432px;top:222px;width:23px;height:17px;background:#4c4e52;border:1px solid #3a3c40;border-radius:3px"></div><svg style="left:282px;top:222px" width="175" height="17" viewBox="0 0 175 17" ><circle cx="11.800" cy="8.700" r="4.100" fill="#000"/><path d="M32 6.600h2.400l3.600-3.600v11.200l-3.600-3.600H32z" fill="#000"/><path d="M58.500 10.400L65 7.300A3.800 3.800 0 1 0 65.300 10.100" fill="none" stroke="#000" stroke-width="1.400" stroke-linejoin="round"/><path d="M82 12.500v-7h4.500a1.800 1.800 0 0 1 0 3.600h-4.500m3 0l3 3.400" fill="none" stroke="#000" stroke-width="2.100"/><path d="M108 5v7h6.800v-7M111.400 5.500v6.500" fill="none" stroke="#000" stroke-width="2.100"/><circle cx="136.500" cy="8.500" r="4.600" fill="#000"/></svg><svg style="left:282px;top:222px" width="175" height="17" viewBox="0 0 175 17" ><path d="M136.500 5.500v3.300h3" fill="none" stroke="#4c4e52" stroke-width="1.300"/><rect x="154.500" y="5.500" width="14" height="6" fill="none" stroke="#000" stroke-width="1.300"/><path d="M159.200 5.500v6M163.800 5.500v6" stroke="#000" stroke-width="1.300"/></svg><div class="a" style="left:188px;top:242px;width:40px;height:41px;background:#d23fe2"></div><svg style="left:189.5px;top:245px" width="17" height="14" viewBox="0 0 17 14" ><path d="M0 7h2l1-2 1.200 4 1.300-7 1.500 11 1.500-13 1.500 12 1.300-8 1.200 5 1.200-3.500 1 1.500h2" fill="none" stroke="#fff" stroke-width="1.300" stroke-linejoin="round"/></svg><div class="t" style="left:204px;top:248px;font-size:9.5px;color:rgba(20,20,40,.72);width:20px;text-align:right">3</div><div class="a" style="left:234px;top:244px;width:45px;height:17px;background:linear-gradient(#505256,#48494d);border:1px solid #2f3134;border-radius:3px"></div><div class="a" style="left:256px;top:245px;width:1px;height:15px;background:#2f3134"></div><svg style="left:234px;top:244px" width="45" height="17" viewBox="0 0 45 17" ><path d="M8.900 12.800v-6.400h6.500v6.400M12.150 6.400v6.400" fill="none" stroke="#000" stroke-width="2.300"/><path d="M36.600 5.400h-6.400v3.400h6.400v3.400h-7" fill="none" stroke="#000" stroke-width="2.200"/></svg><div class="t" style="left:283px;top:247px;font-size:13.3px;color:#fff;font-weight:bold;">סולו</div><div class="a" style="left:235px;top:264px;width:17px;height:17px;background:#2c2f32;border:1px solid #303336;border-radius:3px"></div><div class="a" style="left:282px;top:264px;width:23px;height:17px;background:#4c4e52;border:1px solid #3a3c40;border-radius:3px"></div><div class="a" style="left:307px;top:264px;width:23px;height:17px;background:#4c4e52;border:1px solid #3a3c40;border-radius:3px"></div><div class="a" style="left:332px;top:264px;width:23px;height:17px;background:#4c4e52;border:1px solid #3a3c40;border-radius:3px"></div><div class="a" style="left:357px;top:264px;width:48px;height:17px;background:#4c4e52;border:1px solid #3a3c40;border-radius:3px"></div><div class="a" style="left:407px;top:264px;width:23px;height:17px;background:#4c4e52;border:1px solid #3a3c40;border-radius:3px"></div><div class="a" style="left:432px;top:264px;width:23px;height:17px;background:#4c4e52;border:1px solid #3a3c40;border-radius:3px"></div><svg style="left:282px;top:264px" width="175" height="17" viewBox="0 0 175 17" ><circle cx="11.800" cy="8.700" r="4.100" fill="#000"/><path d="M32 6.600h2.400l3.600-3.600v11.200l-3.600-3.600H32z" fill="#000"/><path d="M58.500 10.400L65 7.300A3.800 3.800 0 1 0 65.300 10.100" fill="none" stroke="#000" stroke-width="1.400" stroke-linejoin="round"/><path d="M82 12.500v-7h4.500a1.800 1.800 0 0 1 0 3.600h-4.500m3 0l3 3.400" fill="none" stroke="#000" stroke-width="2.100"/><path d="M108 5v7h6.800v-7M111.400 5.500v6.500" fill="none" stroke="#000" stroke-width="2.100"/><circle cx="136.500" cy="8.500" r="4.600" fill="#000"/></svg><svg style="left:282px;top:264px" width="175" height="17" viewBox="0 0 175 17" ><path d="M136.500 5.500v3.300h3" fill="none" stroke="#4c4e52" stroke-width="1.300"/><rect x="154.500" y="5.500" width="14" height="6" fill="none" stroke="#000" stroke-width="1.300"/><path d="M159.200 5.500v6M163.800 5.500v6" stroke="#000" stroke-width="1.300"/></svg><div class="a" style="left:188px;top:284px;width:40px;height:41px;background:#a957ea"></div><svg style="left:189.5px;top:287px" width="17" height="14" viewBox="0 0 17 14" ><path d="M0 7h2l1-2 1.200 4 1.300-7 1.500 11 1.500-13 1.500 12 1.300-8 1.200 5 1.200-3.500 1 1.500h2" fill="none" stroke="#fff" stroke-width="1.300" stroke-linejoin="round"/></svg><div class="t" style="left:204px;top:290px;font-size:9.5px;color:rgba(20,20,40,.72);width:20px;text-align:right">4</div><div class="a" style="left:234px;top:286px;width:45px;height:17px;background:linear-gradient(#505256,#48494d);border:1px solid #2f3134;border-radius:3px"></div><div class="a" style="left:256px;top:287px;width:1px;height:15px;background:#2f3134"></div><svg style="left:234px;top:286px" width="45" height="17" viewBox="0 0 45 17" ><path d="M8.900 12.800v-6.400h6.500v6.400M12.150 6.400v6.400" fill="none" stroke="#000" stroke-width="2.300"/><path d="M36.600 5.400h-6.400v3.400h6.400v3.400h-7" fill="none" stroke="#000" stroke-width="2.200"/></svg><div class="t" style="left:283px;top:289px;font-size:13.3px;color:#fff;font-weight:bold;">סולו</div><div class="a" style="left:235px;top:306px;width:17px;height:17px;background:#2c2f32;border:1px solid #303336;border-radius:3px"></div><div class="a" style="left:282px;top:306px;width:23px;height:17px;background:#4c4e52;border:1px solid #3a3c40;border-radius:3px"></div><div class="a" style="left:307px;top:306px;width:23px;height:17px;background:#4c4e52;border:1px solid #3a3c40;border-radius:3px"></div><div class="a" style="left:332px;top:306px;width:23px;height:17px;background:#4c4e52;border:1px solid #3a3c40;border-radius:3px"></div><div class="a" style="left:357px;top:306px;width:48px;height:17px;background:#4c4e52;border:1px solid #3a3c40;border-radius:3px"></div><div class="a" style="left:407px;top:306px;width:23px;height:17px;background:#4c4e52;border:1px solid #3a3c40;border-radius:3px"></div><div class="a" style="left:432px;top:306px;width:23px;height:17px;background:#4c4e52;border:1px solid #3a3c40;border-radius:3px"></div><svg style="left:282px;top:306px" width="175" height="17" viewBox="0 0 175 17" ><circle cx="11.800" cy="8.700" r="4.100" fill="#000"/><path d="M32 6.600h2.400l3.600-3.600v11.200l-3.600-3.600H32z" fill="#000"/><path d="M58.500 10.400L65 7.300A3.800 3.800 0 1 0 65.300 10.100" fill="none" stroke="#000" stroke-width="1.400" stroke-linejoin="round"/><path d="M82 12.500v-7h4.500a1.800 1.800 0 0 1 0 3.600h-4.500m3 0l3 3.400" fill="none" stroke="#000" stroke-width="2.100"/><path d="M108 5v7h6.800v-7M111.400 5.500v6.500" fill="none" stroke="#000" stroke-width="2.100"/><circle cx="136.500" cy="8.500" r="4.600" fill="#000"/></svg><svg style="left:282px;top:306px" width="175" height="17" viewBox="0 0 175 17" ><path d="M136.500 5.500v3.300h3" fill="none" stroke="#4c4e52" stroke-width="1.300"/><rect x="154.500" y="5.500" width="14" height="6" fill="none" stroke="#000" stroke-width="1.300"/><path d="M159.200 5.500v6M163.800 5.500v6" stroke="#000" stroke-width="1.300"/></svg><div class="a" style="left:188px;top:326px;width:40px;height:41px;background:#7a68ee"></div><svg style="left:189.5px;top:329px" width="17" height="14" viewBox="0 0 17 14" ><path d="M0 7h2l1-2 1.200 4 1.300-7 1.500 11 1.500-13 1.500 12 1.300-8 1.200 5 1.200-3.500 1 1.500h2" fill="none" stroke="#fff" stroke-width="1.300" stroke-linejoin="round"/></svg><div class="t" style="left:204px;top:332px;font-size:9.5px;color:rgba(20,20,40,.72);width:20px;text-align:right">5</div><div class="a" style="left:234px;top:328px;width:45px;height:17px;background:linear-gradient(#505256,#48494d);border:1px solid #2f3134;border-radius:3px"></div><div class="a" style="left:256px;top:329px;width:1px;height:15px;background:#2f3134"></div><svg style="left:234px;top:328px" width="45" height="17" viewBox="0 0 45 17" ><path d="M8.900 12.800v-6.400h6.500v6.400M12.150 6.400v6.400" fill="none" stroke="#000" stroke-width="2.300"/><path d="M36.600 5.400h-6.400v3.400h6.400v3.400h-7" fill="none" stroke="#000" stroke-width="2.200"/></svg><div class="t" style="left:283px;top:331px;font-size:13.3px;color:#fff;font-weight:bold;">מקהלה</div><div class="a" style="left:235px;top:348px;width:17px;height:17px;background:#2c2f32;border:1px solid #303336;border-radius:3px"></div><div class="a" style="left:282px;top:348px;width:23px;height:17px;background:#4c4e52;border:1px solid #3a3c40;border-radius:3px"></div><div class="a" style="left:307px;top:348px;width:23px;height:17px;background:#4c4e52;border:1px solid #3a3c40;border-radius:3px"></div><div class="a" style="left:332px;top:348px;width:23px;height:17px;background:#4c4e52;border:1px solid #3a3c40;border-radius:3px"></div><div class="a" style="left:357px;top:348px;width:48px;height:17px;background:#4c4e52;border:1px solid #3a3c40;border-radius:3px"></div><div class="a" style="left:407px;top:348px;width:23px;height:17px;background:#4c4e52;border:1px solid #3a3c40;border-radius:3px"></div><div class="a" style="left:432px;top:348px;width:23px;height:17px;background:#4c4e52;border:1px solid #3a3c40;border-radius:3px"></div><svg style="left:282px;top:348px" width="175" height="17" viewBox="0 0 175 17" ><circle cx="11.800" cy="8.700" r="4.100" fill="#000"/><path d="M32 6.600h2.400l3.600-3.600v11.200l-3.600-3.600H32z" fill="#000"/><path d="M58.500 10.400L65 7.300A3.800 3.800 0 1 0 65.300 10.100" fill="none" stroke="#000" stroke-width="1.400" stroke-linejoin="round"/><path d="M82 12.500v-7h4.500a1.800 1.800 0 0 1 0 3.600h-4.500m3 0l3 3.400" fill="none" stroke="#000" stroke-width="2.100"/><path d="M108 5v7h6.800v-7M111.400 5.500v6.500" fill="none" stroke="#000" stroke-width="2.100"/><circle cx="136.500" cy="8.500" r="4.600" fill="#000"/></svg><svg style="left:282px;top:348px" width="175" height="17" viewBox="0 0 175 17" ><path d="M136.500 5.500v3.300h3" fill="none" stroke="#4c4e52" stroke-width="1.300"/><rect x="154.500" y="5.500" width="14" height="6" fill="none" stroke="#000" stroke-width="1.300"/><path d="M159.200 5.500v6M163.800 5.500v6" stroke="#000" stroke-width="1.300"/></svg><div class="a" style="left:188px;top:368px;width:40px;height:41px;background:#5c82ea"></div><svg style="left:189.5px;top:371px" width="17" height="14" viewBox="0 0 17 14" ><path d="M0 7h2l1-2 1.200 4 1.300-7 1.500 11 1.500-13 1.500 12 1.300-8 1.200 5 1.200-3.500 1 1.500h2" fill="none" stroke="#fff" stroke-width="1.300" stroke-linejoin="round"/></svg><div class="t" style="left:204px;top:374px;font-size:9.5px;color:rgba(20,20,40,.72);width:20px;text-align:right">6</div><div class="a" style="left:234px;top:370px;width:45px;height:17px;background:linear-gradient(#505256,#48494d);border:1px solid #2f3134;border-radius:3px"></div><div class="a" style="left:256px;top:371px;width:1px;height:15px;background:#2f3134"></div><svg style="left:234px;top:370px" width="45" height="17" viewBox="0 0 45 17" ><path d="M8.900 12.800v-6.400h6.500v6.400M12.150 6.400v6.400" fill="none" stroke="#000" stroke-width="2.300"/><path d="M36.600 5.400h-6.400v3.400h6.400v3.400h-7" fill="none" stroke="#000" stroke-width="2.200"/></svg><div class="t" style="left:283px;top:373px;font-size:13.3px;color:#fff;font-weight:bold;">מקהלה</div><div class="a" style="left:235px;top:390px;width:17px;height:17px;background:#2c2f32;border:1px solid #303336;border-radius:3px"></div><div class="a" style="left:282px;top:390px;width:23px;height:17px;background:#4c4e52;border:1px solid #3a3c40;border-radius:3px"></div><div class="a" style="left:307px;top:390px;width:23px;height:17px;background:#4c4e52;border:1px solid #3a3c40;border-radius:3px"></div><div class="a" style="left:332px;top:390px;width:23px;height:17px;background:#4c4e52;border:1px solid #3a3c40;border-radius:3px"></div><div class="a" style="left:357px;top:390px;width:48px;height:17px;background:#4c4e52;border:1px solid #3a3c40;border-radius:3px"></div><div class="a" style="left:407px;top:390px;width:23px;height:17px;background:#4c4e52;border:1px solid #3a3c40;border-radius:3px"></div><div class="a" style="left:432px;top:390px;width:23px;height:17px;background:#4c4e52;border:1px solid #3a3c40;border-radius:3px"></div><svg style="left:282px;top:390px" width="175" height="17" viewBox="0 0 175 17" ><circle cx="11.800" cy="8.700" r="4.100" fill="#000"/><path d="M32 6.600h2.400l3.600-3.600v11.200l-3.600-3.600H32z" fill="#000"/><path d="M58.500 10.400L65 7.300A3.800 3.800 0 1 0 65.300 10.100" fill="none" stroke="#000" stroke-width="1.400" stroke-linejoin="round"/><path d="M82 12.500v-7h4.500a1.800 1.800 0 0 1 0 3.600h-4.500m3 0l3 3.400" fill="none" stroke="#000" stroke-width="2.100"/><path d="M108 5v7h6.800v-7M111.400 5.500v6.500" fill="none" stroke="#000" stroke-width="2.100"/><circle cx="136.500" cy="8.500" r="4.600" fill="#000"/></svg><svg style="left:282px;top:390px" width="175" height="17" viewBox="0 0 175 17" ><path d="M136.500 5.500v3.300h3" fill="none" stroke="#4c4e52" stroke-width="1.300"/><rect x="154.500" y="5.500" width="14" height="6" fill="none" stroke="#000" stroke-width="1.300"/><path d="M159.200 5.500v6M163.800 5.500v6" stroke="#000" stroke-width="1.300"/></svg><div class="a" style="left:188px;top:410px;width:40px;height:41px;background:#5c82ea"></div><svg style="left:189.5px;top:413px" width="17" height="14" viewBox="0 0 17 14" ><path d="M0 7h2l1-2 1.200 4 1.300-7 1.500 11 1.500-13 1.500 12 1.300-8 1.200 5 1.200-3.500 1 1.500h2" fill="none" stroke="#fff" stroke-width="1.300" stroke-linejoin="round"/></svg><div class="t" style="left:204px;top:416px;font-size:9.5px;color:rgba(20,20,40,.72);width:20px;text-align:right">7</div><div class="a" style="left:234px;top:412px;width:45px;height:17px;background:linear-gradient(#505256,#48494d);border:1px solid #2f3134;border-radius:3px"></div><div class="a" style="left:256px;top:413px;width:1px;height:15px;background:#2f3134"></div><svg style="left:234px;top:412px" width="45" height="17" viewBox="0 0 45 17" ><path d="M8.900 12.800v-6.400h6.500v6.400M12.150 6.400v6.400" fill="none" stroke="#000" stroke-width="2.300"/><path d="M36.600 5.400h-6.400v3.400h6.400v3.400h-7" fill="none" stroke="#000" stroke-width="2.200"/></svg><div class="t" style="left:283px;top:415px;font-size:13.3px;color:#fff;font-weight:bold;">מקהלה</div><div class="a" style="left:235px;top:432px;width:17px;height:17px;background:#2c2f32;border:1px solid #303336;border-radius:3px"></div><div class="a" style="left:282px;top:432px;width:23px;height:17px;background:#4c4e52;border:1px solid #3a3c40;border-radius:3px"></div><div class="a" style="left:307px;top:432px;width:23px;height:17px;background:#4c4e52;border:1px solid #3a3c40;border-radius:3px"></div><div class="a" style="left:332px;top:432px;width:23px;height:17px;background:#4c4e52;border:1px solid #3a3c40;border-radius:3px"></div><div class="a" style="left:357px;top:432px;width:48px;height:17px;background:#4c4e52;border:1px solid #3a3c40;border-radius:3px"></div><div class="a" style="left:407px;top:432px;width:23px;height:17px;background:#4c4e52;border:1px solid #3a3c40;border-radius:3px"></div><div class="a" style="left:432px;top:432px;width:23px;height:17px;background:#4c4e52;border:1px solid #3a3c40;border-radius:3px"></div><svg style="left:282px;top:432px" width="175" height="17" viewBox="0 0 175 17" ><circle cx="11.800" cy="8.700" r="4.100" fill="#000"/><path d="M32 6.600h2.400l3.600-3.600v11.200l-3.600-3.600H32z" fill="#000"/><path d="M58.500 10.400L65 7.300A3.800 3.800 0 1 0 65.300 10.100" fill="none" stroke="#000" stroke-width="1.400" stroke-linejoin="round"/><path d="M82 12.500v-7h4.500a1.800 1.800 0 0 1 0 3.600h-4.500m3 0l3 3.400" fill="none" stroke="#000" stroke-width="2.100"/><path d="M108 5v7h6.800v-7M111.400 5.500v6.500" fill="none" stroke="#000" stroke-width="2.100"/><circle cx="136.500" cy="8.500" r="4.600" fill="#000"/></svg><svg style="left:282px;top:432px" width="175" height="17" viewBox="0 0 175 17" ><path d="M136.500 5.500v3.300h3" fill="none" stroke="#4c4e52" stroke-width="1.300"/><rect x="154.500" y="5.500" width="14" height="6" fill="none" stroke="#000" stroke-width="1.300"/><path d="M159.200 5.500v6M163.800 5.500v6" stroke="#000" stroke-width="1.300"/></svg><div class="a" style="left:188px;top:452px;width:40px;height:41px;background:#5c82ea"></div><svg style="left:189.5px;top:455px" width="17" height="14" viewBox="0 0 17 14" ><path d="M0 7h2l1-2 1.200 4 1.300-7 1.500 11 1.500-13 1.500 12 1.300-8 1.200 5 1.200-3.500 1 1.500h2" fill="none" stroke="#fff" stroke-width="1.300" stroke-linejoin="round"/></svg><div class="t" style="left:204px;top:458px;font-size:9.5px;color:rgba(20,20,40,.72);width:20px;text-align:right">8</div><div class="a" style="left:234px;top:454px;width:45px;height:17px;background:linear-gradient(#505256,#48494d);border:1px solid #2f3134;border-radius:3px"></div><div class="a" style="left:256px;top:455px;width:1px;height:15px;background:#2f3134"></div><svg style="left:234px;top:454px" width="45" height="17" viewBox="0 0 45 17" ><path d="M8.900 12.800v-6.400h6.500v6.400M12.150 6.400v6.400" fill="none" stroke="#000" stroke-width="2.300"/><path d="M36.600 5.400h-6.400v3.400h6.400v3.400h-7" fill="none" stroke="#000" stroke-width="2.200"/></svg><div class="t" style="left:283px;top:457px;font-size:13.3px;color:#fff;font-weight:bold;">מקהלה</div><div class="a" style="left:235px;top:474px;width:17px;height:17px;background:#2c2f32;border:1px solid #303336;border-radius:3px"></div><div class="a" style="left:282px;top:474px;width:23px;height:17px;background:#4c4e52;border:1px solid #3a3c40;border-radius:3px"></div><div class="a" style="left:307px;top:474px;width:23px;height:17px;background:#4c4e52;border:1px solid #3a3c40;border-radius:3px"></div><div class="a" style="left:332px;top:474px;width:23px;height:17px;background:#4c4e52;border:1px solid #3a3c40;border-radius:3px"></div><div class="a" style="left:357px;top:474px;width:48px;height:17px;background:#4c4e52;border:1px solid #3a3c40;border-radius:3px"></div><div class="a" style="left:407px;top:474px;width:23px;height:17px;background:#4c4e52;border:1px solid #3a3c40;border-radius:3px"></div><div class="a" style="left:432px;top:474px;width:23px;height:17px;background:#4c4e52;border:1px solid #3a3c40;border-radius:3px"></div><svg style="left:282px;top:474px" width="175" height="17" viewBox="0 0 175 17" ><circle cx="11.800" cy="8.700" r="4.100" fill="#000"/><path d="M32 6.600h2.400l3.600-3.600v11.200l-3.600-3.600H32z" fill="#000"/><path d="M58.500 10.400L65 7.300A3.800 3.800 0 1 0 65.300 10.100" fill="none" stroke="#000" stroke-width="1.400" stroke-linejoin="round"/><path d="M82 12.500v-7h4.500a1.800 1.800 0 0 1 0 3.600h-4.500m3 0l3 3.400" fill="none" stroke="#000" stroke-width="2.100"/><path d="M108 5v7h6.800v-7M111.400 5.500v6.500" fill="none" stroke="#000" stroke-width="2.100"/><circle cx="136.500" cy="8.500" r="4.600" fill="#000"/></svg><svg style="left:282px;top:474px" width="175" height="17" viewBox="0 0 175 17" ><path d="M136.500 5.500v3.300h3" fill="none" stroke="#4c4e52" stroke-width="1.300"/><rect x="154.500" y="5.500" width="14" height="6" fill="none" stroke="#000" stroke-width="1.300"/><path d="M159.200 5.500v6M163.800 5.500v6" stroke="#000" stroke-width="1.300"/></svg><div class="a" style="left:188px;top:494px;width:40px;height:41px;background:#40a9e8"></div><svg style="left:189.5px;top:497px" width="17" height="14" viewBox="0 0 17 14" ><path d="M0 7h2l1-2 1.200 4 1.300-7 1.500 11 1.500-13 1.500 12 1.300-8 1.200 5 1.200-3.500 1 1.500h2" fill="none" stroke="#fff" stroke-width="1.300" stroke-linejoin="round"/></svg><div class="t" style="left:204px;top:500px;font-size:9.5px;color:rgba(20,20,40,.72);width:20px;text-align:right">9</div><div class="a" style="left:234px;top:496px;width:45px;height:17px;background:linear-gradient(#505256,#48494d);border:1px solid #2f3134;border-radius:3px"></div><div class="a" style="left:256px;top:497px;width:1px;height:15px;background:#2f3134"></div><svg style="left:234px;top:496px" width="45" height="17" viewBox="0 0 45 17" ><path d="M8.900 12.800v-6.400h6.500v6.400M12.150 6.400v6.400" fill="none" stroke="#000" stroke-width="2.300"/><path d="M36.600 5.400h-6.400v3.400h6.400v3.400h-7" fill="none" stroke="#000" stroke-width="2.200"/></svg><div class="t" style="left:283px;top:499px;font-size:13.3px;color:#fff;font-weight:bold;">קולות</div><div class="a" style="left:235px;top:516px;width:17px;height:17px;background:#2c2f32;border:1px solid #303336;border-radius:3px"></div><div class="a" style="left:282px;top:516px;width:23px;height:17px;background:#4c4e52;border:1px solid #3a3c40;border-radius:3px"></div><div class="a" style="left:307px;top:516px;width:23px;height:17px;background:#4c4e52;border:1px solid #3a3c40;border-radius:3px"></div><div class="a" style="left:332px;top:516px;width:23px;height:17px;background:#4c4e52;border:1px solid #3a3c40;border-radius:3px"></div><div class="a" style="left:357px;top:516px;width:48px;height:17px;background:#4c4e52;border:1px solid #3a3c40;border-radius:3px"></div><div class="a" style="left:407px;top:516px;width:23px;height:17px;background:#4c4e52;border:1px solid #3a3c40;border-radius:3px"></div><div class="a" style="left:432px;top:516px;width:23px;height:17px;background:#4c4e52;border:1px solid #3a3c40;border-radius:3px"></div><svg style="left:282px;top:516px" width="175" height="17" viewBox="0 0 175 17" ><circle cx="11.800" cy="8.700" r="4.100" fill="#000"/><path d="M32 6.600h2.400l3.600-3.600v11.200l-3.600-3.600H32z" fill="#000"/><path d="M58.500 10.400L65 7.300A3.800 3.800 0 1 0 65.300 10.100" fill="none" stroke="#000" stroke-width="1.400" stroke-linejoin="round"/><path d="M82 12.500v-7h4.500a1.800 1.800 0 0 1 0 3.600h-4.500m3 0l3 3.400" fill="none" stroke="#000" stroke-width="2.100"/><path d="M108 5v7h6.800v-7M111.400 5.500v6.500" fill="none" stroke="#000" stroke-width="2.100"/><circle cx="136.500" cy="8.500" r="4.600" fill="#000"/></svg><svg style="left:282px;top:516px" width="175" height="17" viewBox="0 0 175 17" ><path d="M136.500 5.500v3.300h3" fill="none" stroke="#4c4e52" stroke-width="1.300"/><rect x="154.500" y="5.500" width="14" height="6" fill="none" stroke="#000" stroke-width="1.300"/><path d="M159.200 5.500v6M163.800 5.500v6" stroke="#000" stroke-width="1.300"/></svg><div class="a" style="left:188px;top:536px;width:40px;height:41px;background:#40a9e8"></div><svg style="left:189.5px;top:539px" width="17" height="14" viewBox="0 0 17 14" ><path d="M0 7h2l1-2 1.200 4 1.300-7 1.500 11 1.500-13 1.500 12 1.300-8 1.200 5 1.200-3.500 1 1.500h2" fill="none" stroke="#fff" stroke-width="1.300" stroke-linejoin="round"/></svg><div class="t" style="left:204px;top:542px;font-size:9.5px;color:rgba(20,20,40,.72);width:20px;text-align:right">10</div><div class="a" style="left:234px;top:538px;width:45px;height:17px;background:linear-gradient(#505256,#48494d);border:1px solid #2f3134;border-radius:3px"></div><div class="a" style="left:256px;top:539px;width:1px;height:15px;background:#2f3134"></div><svg style="left:234px;top:538px" width="45" height="17" viewBox="0 0 45 17" ><path d="M8.900 12.800v-6.400h6.500v6.400M12.150 6.400v6.400" fill="none" stroke="#000" stroke-width="2.300"/><path d="M36.600 5.400h-6.400v3.400h6.400v3.400h-7" fill="none" stroke="#000" stroke-width="2.200"/></svg><div class="t" style="left:283px;top:541px;font-size:13.3px;color:#fff;font-weight:bold;">קולות</div><div class="a" style="left:235px;top:558px;width:17px;height:17px;background:#2c2f32;border:1px solid #303336;border-radius:3px"></div><div class="a" style="left:282px;top:558px;width:23px;height:17px;background:#4c4e52;border:1px solid #3a3c40;border-radius:3px"></div><div class="a" style="left:307px;top:558px;width:23px;height:17px;background:#4c4e52;border:1px solid #3a3c40;border-radius:3px"></div><div class="a" style="left:332px;top:558px;width:23px;height:17px;background:#4c4e52;border:1px solid #3a3c40;border-radius:3px"></div><div class="a" style="left:357px;top:558px;width:48px;height:17px;background:#4c4e52;border:1px solid #3a3c40;border-radius:3px"></div><div class="a" style="left:407px;top:558px;width:23px;height:17px;background:#4c4e52;border:1px solid #3a3c40;border-radius:3px"></div><div class="a" style="left:432px;top:558px;width:23px;height:17px;background:#4c4e52;border:1px solid #3a3c40;border-radius:3px"></div><svg style="left:282px;top:558px" width="175" height="17" viewBox="0 0 175 17" ><circle cx="11.800" cy="8.700" r="4.100" fill="#000"/><path d="M32 6.600h2.400l3.600-3.600v11.200l-3.600-3.600H32z" fill="#000"/><path d="M58.500 10.400L65 7.300A3.800 3.800 0 1 0 65.300 10.100" fill="none" stroke="#000" stroke-width="1.400" stroke-linejoin="round"/><path d="M82 12.500v-7h4.500a1.800 1.800 0 0 1 0 3.600h-4.500m3 0l3 3.400" fill="none" stroke="#000" stroke-width="2.100"/><path d="M108 5v7h6.800v-7M111.400 5.500v6.500" fill="none" stroke="#000" stroke-width="2.100"/><circle cx="136.500" cy="8.500" r="4.600" fill="#000"/></svg><svg style="left:282px;top:558px" width="175" height="17" viewBox="0 0 175 17" ><path d="M136.500 5.500v3.300h3" fill="none" stroke="#4c4e52" stroke-width="1.300"/><rect x="154.500" y="5.500" width="14" height="6" fill="none" stroke="#000" stroke-width="1.300"/><path d="M159.200 5.500v6M163.800 5.500v6" stroke="#000" stroke-width="1.300"/></svg><div class="a" style="left:188px;top:578px;width:40px;height:41px;background:#40a9e8"></div><svg style="left:189.5px;top:581px" width="17" height="14" viewBox="0 0 17 14" ><path d="M0 7h2l1-2 1.200 4 1.300-7 1.500 11 1.500-13 1.500 12 1.300-8 1.200 5 1.200-3.500 1 1.500h2" fill="none" stroke="#fff" stroke-width="1.300" stroke-linejoin="round"/></svg><div class="t" style="left:204px;top:584px;font-size:9.5px;color:rgba(20,20,40,.72);width:20px;text-align:right">11</div><div class="a" style="left:234px;top:580px;width:45px;height:17px;background:linear-gradient(#505256,#48494d);border:1px solid #2f3134;border-radius:3px"></div><div class="a" style="left:256px;top:581px;width:1px;height:15px;background:#2f3134"></div><svg style="left:234px;top:580px" width="45" height="17" viewBox="0 0 45 17" ><path d="M8.900 12.800v-6.400h6.500v6.400M12.150 6.400v6.400" fill="none" stroke="#000" stroke-width="2.300"/><path d="M36.600 5.400h-6.400v3.400h6.400v3.400h-7" fill="none" stroke="#000" stroke-width="2.200"/></svg><div class="t" style="left:283px;top:583px;font-size:13.3px;color:#fff;font-weight:bold;">קולות</div><div class="a" style="left:235px;top:600px;width:17px;height:17px;background:#2c2f32;border:1px solid #303336;border-radius:3px"></div><div class="a" style="left:282px;top:600px;width:23px;height:17px;background:#4c4e52;border:1px solid #3a3c40;border-radius:3px"></div><div class="a" style="left:307px;top:600px;width:23px;height:17px;background:#4c4e52;border:1px solid #3a3c40;border-radius:3px"></div><div class="a" style="left:332px;top:600px;width:23px;height:17px;background:#4c4e52;border:1px solid #3a3c40;border-radius:3px"></div><div class="a" style="left:357px;top:600px;width:48px;height:17px;background:#4c4e52;border:1px solid #3a3c40;border-radius:3px"></div><div class="a" style="left:407px;top:600px;width:23px;height:17px;background:#4c4e52;border:1px solid #3a3c40;border-radius:3px"></div><div class="a" style="left:432px;top:600px;width:23px;height:17px;background:#4c4e52;border:1px solid #3a3c40;border-radius:3px"></div><svg style="left:282px;top:600px" width="175" height="17" viewBox="0 0 175 17" ><circle cx="11.800" cy="8.700" r="4.100" fill="#000"/><path d="M32 6.600h2.400l3.600-3.600v11.200l-3.600-3.600H32z" fill="#000"/><path d="M58.500 10.400L65 7.300A3.800 3.800 0 1 0 65.300 10.100" fill="none" stroke="#000" stroke-width="1.400" stroke-linejoin="round"/><path d="M82 12.500v-7h4.500a1.800 1.800 0 0 1 0 3.600h-4.500m3 0l3 3.400" fill="none" stroke="#000" stroke-width="2.100"/><path d="M108 5v7h6.800v-7M111.400 5.500v6.500" fill="none" stroke="#000" stroke-width="2.100"/><circle cx="136.500" cy="8.500" r="4.600" fill="#000"/></svg><svg style="left:282px;top:600px" width="175" height="17" viewBox="0 0 175 17" ><path d="M136.500 5.500v3.300h3" fill="none" stroke="#4c4e52" stroke-width="1.300"/><rect x="154.500" y="5.500" width="14" height="6" fill="none" stroke="#000" stroke-width="1.300"/><path d="M159.200 5.500v6M163.800 5.500v6" stroke="#000" stroke-width="1.300"/></svg><div class="a" style="left:188px;top:620px;width:40px;height:41px;background:#40a9e8"></div><svg style="left:189.5px;top:623px" width="17" height="14" viewBox="0 0 17 14" ><path d="M0 7h2l1-2 1.200 4 1.300-7 1.500 11 1.500-13 1.500 12 1.300-8 1.200 5 1.200-3.500 1 1.500h2" fill="none" stroke="#fff" stroke-width="1.300" stroke-linejoin="round"/></svg><div class="t" style="left:204px;top:626px;font-size:9.5px;color:rgba(20,20,40,.72);width:20px;text-align:right">12</div><div class="a" style="left:234px;top:622px;width:45px;height:17px;background:linear-gradient(#505256,#48494d);border:1px solid #2f3134;border-radius:3px"></div><div class="a" style="left:256px;top:623px;width:1px;height:15px;background:#2f3134"></div><svg style="left:234px;top:622px" width="45" height="17" viewBox="0 0 45 17" ><path d="M8.900 12.800v-6.400h6.500v6.400M12.150 6.400v6.400" fill="none" stroke="#000" stroke-width="2.300"/><path d="M36.600 5.400h-6.400v3.400h6.400v3.400h-7" fill="none" stroke="#000" stroke-width="2.200"/></svg><div class="t" style="left:283px;top:625px;font-size:13.3px;color:#fff;font-weight:bold;">קולות</div><div class="a" style="left:235px;top:642px;width:17px;height:17px;background:#2c2f32;border:1px solid #303336;border-radius:3px"></div><div class="a" style="left:282px;top:642px;width:23px;height:17px;background:#4c4e52;border:1px solid #3a3c40;border-radius:3px"></div><div class="a" style="left:307px;top:642px;width:23px;height:17px;background:#4c4e52;border:1px solid #3a3c40;border-radius:3px"></div><div class="a" style="left:332px;top:642px;width:23px;height:17px;background:#4c4e52;border:1px solid #3a3c40;border-radius:3px"></div><div class="a" style="left:357px;top:642px;width:48px;height:17px;background:#4c4e52;border:1px solid #3a3c40;border-radius:3px"></div><div class="a" style="left:407px;top:642px;width:23px;height:17px;background:#4c4e52;border:1px solid #3a3c40;border-radius:3px"></div><div class="a" style="left:432px;top:642px;width:23px;height:17px;background:#4c4e52;border:1px solid #3a3c40;border-radius:3px"></div><svg style="left:282px;top:642px" width="175" height="17" viewBox="0 0 175 17" ><circle cx="11.800" cy="8.700" r="4.100" fill="#000"/><path d="M32 6.600h2.400l3.600-3.600v11.200l-3.600-3.600H32z" fill="#000"/><path d="M58.500 10.400L65 7.300A3.800 3.800 0 1 0 65.300 10.100" fill="none" stroke="#000" stroke-width="1.400" stroke-linejoin="round"/><path d="M82 12.500v-7h4.500a1.800 1.800 0 0 1 0 3.600h-4.500m3 0l3 3.400" fill="none" stroke="#000" stroke-width="2.100"/><path d="M108 5v7h6.800v-7M111.400 5.500v6.500" fill="none" stroke="#000" stroke-width="2.100"/><circle cx="136.500" cy="8.500" r="4.600" fill="#000"/></svg><svg style="left:282px;top:642px" width="175" height="17" viewBox="0 0 175 17" ><path d="M136.500 5.500v3.300h3" fill="none" stroke="#4c4e52" stroke-width="1.300"/><rect x="154.500" y="5.500" width="14" height="6" fill="none" stroke="#000" stroke-width="1.300"/><path d="M159.200 5.500v6M163.800 5.500v6" stroke="#000" stroke-width="1.300"/></svg><div class="a" style="left:188px;top:662px;width:40px;height:41px;background:#30cdc8"></div><svg style="left:189.5px;top:665px" width="17" height="14" viewBox="0 0 17 14" ><path d="M0 7h2l1-2 1.200 4 1.300-7 1.500 11 1.500-13 1.500 12 1.300-8 1.200 5 1.200-3.500 1 1.500h2" fill="none" stroke="#fff" stroke-width="1.300" stroke-linejoin="round"/></svg><div class="t" style="left:204px;top:668px;font-size:9.5px;color:rgba(20,20,40,.72);width:20px;text-align:right">13</div><div class="a" style="left:234px;top:664px;width:45px;height:17px;background:linear-gradient(#505256,#48494d);border:1px solid #2f3134;border-radius:3px"></div><div class="a" style="left:256px;top:665px;width:1px;height:15px;background:#2f3134"></div><svg style="left:234px;top:664px" width="45" height="17" viewBox="0 0 45 17" ><path d="M8.900 12.800v-6.400h6.500v6.400M12.150 6.400v6.400" fill="none" stroke="#000" stroke-width="2.300"/><path d="M36.600 5.400h-6.400v3.400h6.400v3.400h-7" fill="none" stroke="#000" stroke-width="2.200"/></svg><div class="t" style="left:283px;top:667px;font-size:13.3px;color:#fff;font-weight:bold;">קולות 1</div><div class="a" style="left:235px;top:684px;width:17px;height:17px;background:#2c2f32;border:1px solid #303336;border-radius:3px"></div><div class="a" style="left:282px;top:684px;width:23px;height:17px;background:#4c4e52;border:1px solid #3a3c40;border-radius:3px"></div><div class="a" style="left:307px;top:684px;width:23px;height:17px;background:#4c4e52;border:1px solid #3a3c40;border-radius:3px"></div><div class="a" style="left:332px;top:684px;width:23px;height:17px;background:#4c4e52;border:1px solid #3a3c40;border-radius:3px"></div><div class="a" style="left:357px;top:684px;width:48px;height:17px;background:#4c4e52;border:1px solid #3a3c40;border-radius:3px"></div><div class="a" style="left:407px;top:684px;width:23px;height:17px;background:#4c4e52;border:1px solid #3a3c40;border-radius:3px"></div><div class="a" style="left:432px;top:684px;width:23px;height:17px;background:#4c4e52;border:1px solid #3a3c40;border-radius:3px"></div><svg style="left:282px;top:684px" width="175" height="17" viewBox="0 0 175 17" ><circle cx="11.800" cy="8.700" r="4.100" fill="#000"/><path d="M32 6.600h2.400l3.600-3.600v11.200l-3.600-3.600H32z" fill="#000"/><path d="M58.500 10.400L65 7.300A3.800 3.800 0 1 0 65.300 10.100" fill="none" stroke="#000" stroke-width="1.400" stroke-linejoin="round"/><path d="M82 12.500v-7h4.500a1.800 1.800 0 0 1 0 3.600h-4.500m3 0l3 3.400" fill="none" stroke="#000" stroke-width="2.100"/><path d="M108 5v7h6.800v-7M111.400 5.500v6.500" fill="none" stroke="#000" stroke-width="2.100"/><circle cx="136.500" cy="8.500" r="4.600" fill="#000"/></svg><svg style="left:282px;top:684px" width="175" height="17" viewBox="0 0 175 17" ><path d="M136.500 5.500v3.300h3" fill="none" stroke="#4c4e52" stroke-width="1.300"/><rect x="154.500" y="5.500" width="14" height="6" fill="none" stroke="#000" stroke-width="1.300"/><path d="M159.200 5.500v6M163.800 5.500v6" stroke="#000" stroke-width="1.300"/></svg><div class="a" style="left:188px;top:704px;width:40px;height:41px;background:#30cdc8"></div><svg style="left:189.5px;top:707px" width="17" height="14" viewBox="0 0 17 14" ><path d="M0 7h2l1-2 1.200 4 1.300-7 1.500 11 1.500-13 1.500 12 1.300-8 1.200 5 1.200-3.500 1 1.500h2" fill="none" stroke="#fff" stroke-width="1.300" stroke-linejoin="round"/></svg><div class="t" style="left:204px;top:710px;font-size:9.5px;color:rgba(20,20,40,.72);width:20px;text-align:right">14</div><div class="a" style="left:234px;top:706px;width:45px;height:17px;background:linear-gradient(#505256,#48494d);border:1px solid #2f3134;border-radius:3px"></div><div class="a" style="left:256px;top:707px;width:1px;height:15px;background:#2f3134"></div><svg style="left:234px;top:706px" width="45" height="17" viewBox="0 0 45 17" ><path d="M8.900 12.800v-6.400h6.500v6.400M12.150 6.400v6.400" fill="none" stroke="#000" stroke-width="2.300"/><path d="M36.600 5.400h-6.400v3.400h6.400v3.400h-7" fill="none" stroke="#000" stroke-width="2.200"/></svg><div class="t" style="left:283px;top:709px;font-size:13.3px;color:#fff;font-weight:bold;">קולות 1</div><div class="a" style="left:235px;top:726px;width:17px;height:17px;background:#2c2f32;border:1px solid #303336;border-radius:3px"></div><div class="a" style="left:282px;top:726px;width:23px;height:17px;background:#4c4e52;border:1px solid #3a3c40;border-radius:3px"></div><div class="a" style="left:307px;top:726px;width:23px;height:17px;background:#4c4e52;border:1px solid #3a3c40;border-radius:3px"></div><div class="a" style="left:332px;top:726px;width:23px;height:17px;background:#4c4e52;border:1px solid #3a3c40;border-radius:3px"></div><div class="a" style="left:357px;top:726px;width:48px;height:17px;background:#4c4e52;border:1px solid #3a3c40;border-radius:3px"></div><div class="a" style="left:407px;top:726px;width:23px;height:17px;background:#4c4e52;border:1px solid #3a3c40;border-radius:3px"></div><div class="a" style="left:432px;top:726px;width:23px;height:17px;background:#4c4e52;border:1px solid #3a3c40;border-radius:3px"></div><svg style="left:282px;top:726px" width="175" height="17" viewBox="0 0 175 17" ><circle cx="11.800" cy="8.700" r="4.100" fill="#000"/><path d="M32 6.600h2.400l3.600-3.600v11.200l-3.600-3.600H32z" fill="#000"/><path d="M58.500 10.400L65 7.300A3.800 3.800 0 1 0 65.300 10.100" fill="none" stroke="#000" stroke-width="1.400" stroke-linejoin="round"/><path d="M82 12.500v-7h4.500a1.800 1.800 0 0 1 0 3.600h-4.500m3 0l3 3.400" fill="none" stroke="#000" stroke-width="2.100"/><path d="M108 5v7h6.800v-7M111.400 5.500v6.500" fill="none" stroke="#000" stroke-width="2.100"/><circle cx="136.500" cy="8.500" r="4.600" fill="#000"/></svg><svg style="left:282px;top:726px" width="175" height="17" viewBox="0 0 175 17" ><path d="M136.500 5.500v3.300h3" fill="none" stroke="#4c4e52" stroke-width="1.300"/><rect x="154.500" y="5.500" width="14" height="6" fill="none" stroke="#000" stroke-width="1.300"/><path d="M159.200 5.500v6M163.800 5.500v6" stroke="#000" stroke-width="1.300"/></svg><div class="a" style="left:188px;top:746px;width:40px;height:41px;background:#30cdc8"></div><svg style="left:189.5px;top:749px" width="17" height="14" viewBox="0 0 17 14" ><path d="M0 7h2l1-2 1.200 4 1.300-7 1.500 11 1.500-13 1.500 12 1.300-8 1.200 5 1.200-3.500 1 1.500h2" fill="none" stroke="#fff" stroke-width="1.300" stroke-linejoin="round"/></svg><div class="t" style="left:204px;top:752px;font-size:9.5px;color:rgba(20,20,40,.72);width:20px;text-align:right">15</div><div class="a" style="left:234px;top:748px;width:45px;height:17px;background:linear-gradient(#505256,#48494d);border:1px solid #2f3134;border-radius:3px"></div><div class="a" style="left:256px;top:749px;width:1px;height:15px;background:#2f3134"></div><svg style="left:234px;top:748px" width="45" height="17" viewBox="0 0 45 17" ><path d="M8.900 12.800v-6.400h6.500v6.400M12.150 6.400v6.400" fill="none" stroke="#000" stroke-width="2.300"/><path d="M36.600 5.400h-6.400v3.400h6.400v3.400h-7" fill="none" stroke="#000" stroke-width="2.200"/></svg><div class="t" style="left:283px;top:751px;font-size:13.3px;color:#fff;font-weight:bold;">קולות 1</div><div class="a" style="left:235px;top:768px;width:17px;height:17px;background:#2c2f32;border:1px solid #303336;border-radius:3px"></div><div class="a" style="left:282px;top:768px;width:23px;height:17px;background:#4c4e52;border:1px solid #3a3c40;border-radius:3px"></div><div class="a" style="left:307px;top:768px;width:23px;height:17px;background:#4c4e52;border:1px solid #3a3c40;border-radius:3px"></div><div class="a" style="left:332px;top:768px;width:23px;height:17px;background:#4c4e52;border:1px solid #3a3c40;border-radius:3px"></div><div class="a" style="left:357px;top:768px;width:48px;height:17px;background:#4c4e52;border:1px solid #3a3c40;border-radius:3px"></div><div class="a" style="left:407px;top:768px;width:23px;height:17px;background:#4c4e52;border:1px solid #3a3c40;border-radius:3px"></div><div class="a" style="left:432px;top:768px;width:23px;height:17px;background:#4c4e52;border:1px solid #3a3c40;border-radius:3px"></div><svg style="left:282px;top:768px" width="175" height="17" viewBox="0 0 175 17" ><circle cx="11.800" cy="8.700" r="4.100" fill="#000"/><path d="M32 6.600h2.400l3.600-3.600v11.200l-3.600-3.600H32z" fill="#000"/><path d="M58.500 10.400L65 7.300A3.800 3.800 0 1 0 65.300 10.100" fill="none" stroke="#000" stroke-width="1.400" stroke-linejoin="round"/><path d="M82 12.500v-7h4.500a1.800 1.800 0 0 1 0 3.600h-4.500m3 0l3 3.400" fill="none" stroke="#000" stroke-width="2.100"/><path d="M108 5v7h6.800v-7M111.400 5.500v6.500" fill="none" stroke="#000" stroke-width="2.100"/><circle cx="136.500" cy="8.500" r="4.600" fill="#000"/></svg><svg style="left:282px;top:768px" width="175" height="17" viewBox="0 0 175 17" ><path d="M136.500 5.500v3.300h3" fill="none" stroke="#4c4e52" stroke-width="1.300"/><rect x="154.500" y="5.500" width="14" height="6" fill="none" stroke="#000" stroke-width="1.300"/><path d="M159.200 5.500v6M163.800 5.500v6" stroke="#000" stroke-width="1.300"/></svg><div class="a" style="left:188px;top:788px;width:40px;height:41px;background:#30cdc8"></div><svg style="left:189.5px;top:791px" width="17" height="14" viewBox="0 0 17 14" ><path d="M0 7h2l1-2 1.200 4 1.300-7 1.500 11 1.500-13 1.500 12 1.300-8 1.200 5 1.200-3.500 1 1.500h2" fill="none" stroke="#fff" stroke-width="1.300" stroke-linejoin="round"/></svg><div class="t" style="left:204px;top:794px;font-size:9.5px;color:rgba(20,20,40,.72);width:20px;text-align:right">16</div><div class="a" style="left:234px;top:790px;width:45px;height:17px;background:linear-gradient(#505256,#48494d);border:1px solid #2f3134;border-radius:3px"></div><div class="a" style="left:256px;top:791px;width:1px;height:15px;background:#2f3134"></div><svg style="left:234px;top:790px" width="45" height="17" viewBox="0 0 45 17" ><path d="M8.900 12.800v-6.400h6.500v6.400M12.150 6.400v6.400" fill="none" stroke="#000" stroke-width="2.300"/><path d="M36.600 5.400h-6.400v3.400h6.400v3.400h-7" fill="none" stroke="#000" stroke-width="2.200"/></svg><div class="a" style="left:282px;top:790px;width:172px;height:16px;background:linear-gradient(#17181b,#2b2e31);border:1px solid #4a4d51;border-radius:2px"></div><svg style="left:445px;top:797px" width="8" height="6" viewBox="0 0 8 6" ><path d="M0 0h7l-3.500 5.500z" fill="#0a0a0a"/></svg><div class="t" style="left:283px;top:793px;font-size:13.3px;color:#fff;font-weight:bold;">קולות 1</div><div class="a" style="left:235px;top:810px;width:17px;height:17px;background:#2c2f32;border:1px solid #303336;border-radius:3px"></div><div class="a" style="left:282px;top:810px;width:23px;height:17px;background:#4c4e52;border:1px solid #3a3c40;border-radius:3px"></div><div class="a" style="left:307px;top:810px;width:23px;height:17px;background:#4c4e52;border:1px solid #3a3c40;border-radius:3px"></div><div class="a" style="left:332px;top:810px;width:23px;height:17px;background:#4c4e52;border:1px solid #3a3c40;border-radius:3px"></div><div class="a" style="left:357px;top:810px;width:48px;height:17px;background:#4c4e52;border:1px solid #3a3c40;border-radius:3px"></div><div class="a" style="left:407px;top:810px;width:23px;height:17px;background:#4c4e52;border:1px solid #3a3c40;border-radius:3px"></div><div class="a" style="left:432px;top:810px;width:23px;height:17px;background:#4c4e52;border:1px solid #3a3c40;border-radius:3px"></div><svg style="left:282px;top:810px" width="175" height="17" viewBox="0 0 175 17" ><circle cx="11.800" cy="8.700" r="4.100" fill="#000"/><path d="M32 6.600h2.400l3.600-3.600v11.200l-3.600-3.600H32z" fill="#000"/><path d="M58.500 10.400L65 7.300A3.800 3.800 0 1 0 65.300 10.100" fill="none" stroke="#000" stroke-width="1.400" stroke-linejoin="round"/><path d="M82 12.500v-7h4.500a1.800 1.800 0 0 1 0 3.600h-4.500m3 0l3 3.400" fill="none" stroke="#000" stroke-width="2.100"/><path d="M108 5v7h6.800v-7M111.400 5.500v6.500" fill="none" stroke="#000" stroke-width="2.100"/><circle cx="136.500" cy="8.500" r="4.600" fill="#000"/></svg><svg style="left:282px;top:810px" width="175" height="17" viewBox="0 0 175 17" ><path d="M136.500 5.500v3.300h3" fill="none" stroke="#4c4e52" stroke-width="1.300"/><rect x="154.500" y="5.500" width="14" height="6" fill="none" stroke="#000" stroke-width="1.300"/><path d="M159.200 5.500v6M163.800 5.500v6" stroke="#000" stroke-width="1.300"/></svg><div class="a" style="left:196px;top:983px;width:3px;height:1px;background:#d0d0d0"></div><svg style="left:511px;top:978.5px" width="10" height="6" viewBox="0 0 10 6" ><path d="M0 0h9.500l-4.750 5z" fill="#8f9296"/></svg><svg style="left:529.5px;top:974.5px" width="14" height="14" viewBox="0 0 14 14" ><path d="M5.81 2.91L5.82 1.53L8.18 1.53L8.19 2.91L9.05 3.27L10.04 2.30L11.70 3.96L10.73 4.95L11.09 5.81L12.47 5.82L12.47 8.18L11.09 8.19L10.73 9.05L11.70 10.04L10.04 11.70L9.05 10.73L8.19 11.09L8.18 12.47L5.82 12.47L5.81 11.09L4.95 10.73L3.96 11.70L2.30 10.04L3.27 9.05L2.91 8.19L1.53 8.18L1.53 5.82L2.91 5.81L3.27 4.95L2.30 3.96L3.96 2.30L4.95 3.27Z" fill="#a0a3a6" stroke="#a0a3a6" stroke-width=".6" stroke-linejoin="round"/><circle cx="7" cy="7" r="1.90" fill="#24282b"/></svg><svg style="left:0;top:0" width="1920" height="1042" viewBox="0 0 1920 1042" shape-rendering="crispEdges"><rect x="556" y="113" width="4" height="25" fill="#1b1c20"/><rect x="564" y="113" width="865" height="25" fill="#8b8c90"/><rect x="1429" y="113" width="211" height="25" fill="#1c1d21"/><rect x="564" y="138" width="865" height="840" fill="#29303a"/><rect x="1429" y="138" width="211" height="840" fill="#25292c"/><path d="M556 157.5H1640M556 199.5H1640M556 241.5H1640M556 283.5H1640M556 325.5H1640M556 367.5H1640M556 409.5H1640M556 451.5H1640M556 493.5H1640M556 535.5H1640M556 577.5H1640M556 619.5H1640M556 661.5H1640M556 703.5H1640M556 745.5H1640M556 787.5H1640M556 829.5H1640M556 849.5H1640M556 869.5H1640" stroke="#434a53" stroke-width="1" fill="none"/><path d="M1429 157.5H1640M1429 199.5H1640M1429 241.5H1640M1429 283.5H1640M1429 325.5H1640M1429 367.5H1640M1429 409.5H1640M1429 451.5H1640M1429 493.5H1640M1429 535.5H1640M1429 577.5H1640M1429 619.5H1640M1429 661.5H1640M1429 703.5H1640M1429 745.5H1640M1429 787.5H1640M1429 829.5H1640M1429 849.5H1640M1429 869.5H1640" stroke="#44484c" stroke-width="1" fill="none"/><path d="M556 157.5H564M556 199.5H564M556 241.5H564M556 283.5H564M556 325.5H564M556 367.5H564M556 409.5H564M556 451.5H564M556 493.5H564M556 535.5H564M556 577.5H564M556 619.5H564M556 661.5H564M556 703.5H564M556 745.5H564M556 787.5H564M556 829.5H564M556 849.5H564M556 869.5H564" stroke="#4a4e52" stroke-width="1" fill="none"/><path d="M574.5 138V978M586.5 138V978M598.5 138V978M611.5 138V978M635.5 138V978M647.5 138V978M659.5 138V978M671.5 138V978M696.5 138V978M708.5 138V978M720.5 138V978M732.5 138V978M756.5 138V978M769.5 138V978M781.5 138V978M793.5 138V978M817.5 138V978M829.5 138V978M842.5 138V978M854.5 138V978M878.5 138V978M890.5 138V978M902.5 138V978M914.5 138V978M939.5 138V978M951.5 138V978M963.5 138V978M975.5 138V978M1000.5 138V978M1012.5 138V978M1024.5 138V978M1036.5 138V978M1060.5 138V978M1072.5 138V978M1085.5 138V978M1097.5 138V978M1121.5 138V978M1133.5 138V978M1145.5 138V978M1158.5 138V978M1182.5 138V978M1194.5 138V978M1206.5 138V978M1218.5 138V978M1243.5 138V978M1255.5 138V978M1267.5 138V978M1279.5 138V978M1303.5 138V978M1316.5 138V978M1328.5 138V978M1340.5 138V978M1364.5 138V978M1376.5 138V978M1388.5 138V978M1401.5 138V978M1425.5 138V978" stroke="#3a414b" stroke-width="1" fill="none"/><path d="M623.5 138V978M744.5 138V978M866.5 138V978M987.5 138V978M1109.5 138V978M1230.5 138V978M1352.5 138V978" stroke="#555b63" stroke-width="1" fill="none"/><path d="M684.5 138V978M805.5 138V978M927.5 138V978M1048.5 138V978M1170.5 138V978M1291.5 138V978M1413.5 138V978" stroke="#7c8085" stroke-width="1" fill="none"/><path d="M1437.5 138V978M1449.5 138V978M1461.5 138V978M1486.5 138V978M1498.5 138V978M1510.5 138V978M1522.5 138V978M1547.5 138V978M1559.5 138V978M1571.5 138V978M1583.5 138V978M1607.5 138V978M1619.5 138V978M1632.5 138V978" stroke="#383c40" stroke-width="1" fill="none"/><path d="M1474.5 138V978M1595.5 138V978" stroke="#54585c" stroke-width="1" fill="none"/><path d="M1534.5 138V978" stroke="#8e9194" stroke-width="1" fill="none"/><path d="M574.5 113V122M586.5 113V122M598.5 113V122M611.5 113V122M635.5 113V122M647.5 113V122M659.5 113V122M671.5 113V122M696.5 113V122M708.5 113V122M720.5 113V122M732.5 113V122M756.5 113V122M769.5 113V122M781.5 113V122M793.5 113V122M817.5 113V122M829.5 113V122M842.5 113V122M854.5 113V122M878.5 113V122M890.5 113V122M902.5 113V122M914.5 113V122M939.5 113V122M951.5 113V122M963.5 113V122M975.5 113V122M1000.5 113V122M1012.5 113V122M1024.5 113V122M1036.5 113V122M1060.5 113V122M1072.5 113V122M1085.5 113V122M1097.5 113V122M1121.5 113V122M1133.5 113V122M1145.5 113V122M1158.5 113V122M1182.5 113V122M1194.5 113V122M1206.5 113V122M1218.5 113V122M1243.5 113V122M1255.5 113V122M1267.5 113V122M1279.5 113V122M1303.5 113V122M1316.5 113V122M1328.5 113V122M1340.5 113V122M1364.5 113V122M1376.5 113V122M1388.5 113V122M1401.5 113V122M1425.5 113V122" stroke="#a3a4a7" stroke-width="1" fill="none"/><path d="M623.5 113V122M744.5 113V122M866.5 113V122M987.5 113V122M1109.5 113V122M1230.5 113V122M1352.5 113V122" stroke="#46474a" stroke-width="1" fill="none"/><path d="M684.5 113V138M805.5 113V138M927.5 113V138M1048.5 113V138M1170.5 113V138M1291.5 113V138M1413.5 113V138" stroke="#2e2f32" stroke-width="1" fill="none"/><path d="M1437.5 113V122M1449.5 113V122M1461.5 113V122M1486.5 113V122M1498.5 113V122M1510.5 113V122M1522.5 113V122M1547.5 113V122M1559.5 113V122M1571.5 113V122M1583.5 113V122M1607.5 113V122M1619.5 113V122M1632.5 113V122" stroke="#6f7174" stroke-width="1" fill="none"/><path d="M1474.5 113V122M1595.5 113V122" stroke="#d8d8d8" stroke-width="1" fill="none"/><path d="M1534.5 113V138" stroke="#e8e8e8" stroke-width="1" fill="none"/><rect x="591" y="159" width="838" height="39" fill="#8f0a3e"/><rect x="592" y="160" width="836" height="37" fill="#ff5f9d"/><rect x="593" y="161" width="834" height="35" fill="#e6357a"/><path d="M598.5 161V196M611.5 161V196M623.5 161V196M635.5 161V196M647.5 161V196M659.5 161V196M671.5 161V196M684.5 161V196M696.5 161V196M708.5 161V196M720.5 161V196M732.5 161V196M744.5 161V196M756.5 161V196M769.5 161V196M781.5 161V196M793.5 161V196M805.5 161V196M817.5 161V196M829.5 161V196M842.5 161V196M854.5 161V196M866.5 161V196M878.5 161V196M890.5 161V196M902.5 161V196M914.5 161V196M927.5 161V196M939.5 161V196M951.5 161V196M963.5 161V196M975.5 161V196M987.5 161V196M1000.5 161V196M1012.5 161V196M1024.5 161V196M1036.5 161V196M1048.5 161V196M1060.5 161V196M1072.5 161V196M1085.5 161V196M1097.5 161V196M1109.5 161V196M1121.5 161V196M1133.5 161V196M1145.5 161V196M1158.5 161V196M1170.5 161V196M1182.5 161V196M1194.5 161V196M1206.5 161V196M1218.5 161V196M1230.5 161V196M1243.5 161V196M1255.5 161V196M1267.5 161V196M1279.5 161V196M1291.5 161V196M1303.5 161V196M1316.5 161V196M1328.5 161V196M1340.5 161V196M1352.5 161V196M1364.5 161V196M1376.5 161V196M1388.5 161V196M1401.5 161V196M1413.5 161V196M1425.5 161V196" stroke="#d32c6c" stroke-width="1" fill="none"/><rect x="563" y="201" width="85" height="39" fill="#a0107c"/><rect x="564" y="202" width="83" height="37" fill="#ff62d4"/><rect x="565" y="203" width="81" height="35" fill="#e535b6"/><path d="M574.5 203V238M586.5 203V238M598.5 203V238M611.5 203V238M623.5 203V238M635.5 203V238" stroke="#cf27a2" stroke-width="1" fill="none"/><rect x="861" y="243" width="71" height="39" fill="#8f1a9e"/><rect x="862" y="244" width="69" height="37" fill="#ee6cf8"/><rect x="863" y="245" width="67" height="35" fill="#d441e3"/><path d="M866.5 245V280M878.5 245V280M890.5 245V280M902.5 245V280M914.5 245V280M927.5 245V280" stroke="#bb2ccc" stroke-width="1" fill="none"/><rect x="998" y="243" width="239" height="39" fill="#8f1a9e"/><rect x="999" y="244" width="237" height="37" fill="#ee6cf8"/><rect x="1000" y="245" width="235" height="35" fill="#d441e3"/><path d="M1000.5 245V280M1012.5 245V280M1024.5 245V280M1036.5 245V280M1048.5 245V280M1060.5 245V280M1072.5 245V280M1085.5 245V280M1097.5 245V280M1109.5 245V280M1121.5 245V280M1133.5 245V280M1145.5 245V280M1158.5 245V280M1170.5 245V280M1182.5 245V280M1194.5 245V280M1206.5 245V280M1218.5 245V280M1230.5 245V280" stroke="#bb2ccc" stroke-width="1" fill="none"/><rect x="725" y="285" width="144" height="39" fill="#6220ac"/><rect x="726" y="286" width="142" height="37" fill="#c583f8"/><rect x="727" y="287" width="140" height="35" fill="#a958eb"/><path d="M732.5 287V322M744.5 287V322M756.5 287V322M769.5 287V322M781.5 287V322M793.5 287V322M805.5 287V322M817.5 287V322M829.5 287V322M842.5 287V322M854.5 287V322M866.5 287V322" stroke="#8f3ade" stroke-width="1" fill="none"/><rect x="932" y="285" width="31" height="39" fill="#6220ac"/><rect x="933" y="286" width="29" height="37" fill="#c583f8"/><rect x="934" y="287" width="27" height="35" fill="#a958eb"/><path d="M939.5 287V322M951.5 287V322" stroke="#8f3ade" stroke-width="1" fill="none"/><rect x="967" y="285" width="36" height="39" fill="#6220ac"/><rect x="968" y="286" width="34" height="37" fill="#c583f8"/><rect x="969" y="287" width="32" height="35" fill="#a958eb"/><path d="M975.5 287V322M987.5 287V322M1000.5 287V322" stroke="#8f3ade" stroke-width="1" fill="none"/><rect x="1241" y="285" width="36" height="39" fill="#6220ac"/><rect x="1242" y="286" width="34" height="37" fill="#c583f8"/><rect x="1243" y="287" width="32" height="35" fill="#a958eb"/><path d="M1243.5 287V322M1255.5 287V322M1267.5 287V322" stroke="#8f3ade" stroke-width="1" fill="none"/><rect x="997" y="327" width="142" height="39" fill="#3a2a9c"/><rect x="998" y="328" width="140" height="37" fill="#a99cf6"/><rect x="999" y="329" width="138" height="35" fill="#7b69ee"/><path d="M1000.5 329V364M1012.5 329V364M1024.5 329V364M1036.5 329V364M1048.5 329V364M1060.5 329V364M1072.5 329V364M1085.5 329V364M1097.5 329V364M1109.5 329V364M1121.5 329V364M1133.5 329V364" stroke="#5b46e2" stroke-width="1" fill="none"/><rect x="1000" y="346" width="136" height="2" fill="#000"/><rect x="1037" y="345" width="1" height="1" fill="rgba(0,0,0,.75)"/><rect x="1058" y="345" width="1" height="1" fill="rgba(0,0,0,.75)"/><rect x="1033" y="348" width="3" height="1" fill="rgba(0,0,0,.75)"/><rect x="1029" y="348" width="1" height="1" fill="rgba(0,0,0,.75)"/><rect x="1024" y="345" width="1" height="1" fill="rgba(0,0,0,.75)"/><rect x="1051" y="348" width="1" height="1" fill="rgba(0,0,0,.75)"/><rect x="1100" y="345" width="2" height="1" fill="rgba(0,0,0,.75)"/><rect x="1047" y="345" width="3" height="1" fill="rgba(0,0,0,.75)"/><rect x="1079" y="345" width="1" height="1" fill="rgba(0,0,0,.75)"/><rect x="1043" y="345" width="1" height="1" fill="rgba(0,0,0,.75)"/><rect x="1085" y="348" width="3" height="1" fill="rgba(0,0,0,.75)"/><rect x="1045" y="345" width="1" height="1" fill="rgba(0,0,0,.75)"/><rect x="1029" y="345" width="1" height="1" fill="rgba(0,0,0,.75)"/><rect x="1093" y="348" width="3" height="1" fill="rgba(0,0,0,.75)"/><rect x="1052" y="345" width="2" height="1" fill="rgba(0,0,0,.75)"/><rect x="1113" y="345" width="2" height="1" fill="rgba(0,0,0,.75)"/><rect x="1066" y="345" width="2" height="1" fill="rgba(0,0,0,.75)"/><rect x="1008" y="348" width="3" height="1" fill="rgba(0,0,0,.75)"/><rect x="1046" y="345" width="1" height="1" fill="rgba(0,0,0,.75)"/><rect x="997" y="369" width="142" height="39" fill="#2448a8"/><rect x="998" y="370" width="140" height="37" fill="#8aa8f8"/><rect x="999" y="371" width="138" height="35" fill="#5e84ec"/><path d="M1000.5 371V406M1012.5 371V406M1024.5 371V406M1036.5 371V406M1048.5 371V406M1060.5 371V406M1072.5 371V406M1085.5 371V406M1097.5 371V406M1109.5 371V406M1121.5 371V406M1133.5 371V406" stroke="#3c64e6" stroke-width="1" fill="none"/><rect x="1000" y="388" width="136" height="2" fill="#000"/><rect x="1040" y="390" width="2" height="1" fill="rgba(0,0,0,.75)"/><rect x="1017" y="390" width="2" height="1" fill="rgba(0,0,0,.75)"/><rect x="1010" y="390" width="2" height="1" fill="rgba(0,0,0,.75)"/><rect x="1005" y="387" width="2" height="1" fill="rgba(0,0,0,.75)"/><rect x="1007" y="390" width="3" height="1" fill="rgba(0,0,0,.75)"/><rect x="1103" y="390" width="3" height="1" fill="rgba(0,0,0,.75)"/><rect x="1014" y="390" width="3" height="1" fill="rgba(0,0,0,.75)"/><rect x="1129" y="390" width="1" height="1" fill="rgba(0,0,0,.75)"/><rect x="1042" y="390" width="3" height="1" fill="rgba(0,0,0,.75)"/><rect x="1130" y="390" width="3" height="1" fill="rgba(0,0,0,.75)"/><rect x="1003" y="387" width="2" height="1" fill="rgba(0,0,0,.75)"/><rect x="1050" y="387" width="3" height="1" fill="rgba(0,0,0,.75)"/><rect x="1106" y="390" width="2" height="1" fill="rgba(0,0,0,.75)"/><rect x="1043" y="390" width="2" height="1" fill="rgba(0,0,0,.75)"/><rect x="1050" y="390" width="2" height="1" fill="rgba(0,0,0,.75)"/><rect x="1056" y="390" width="3" height="1" fill="rgba(0,0,0,.75)"/><rect x="1003" y="390" width="3" height="1" fill="rgba(0,0,0,.75)"/><rect x="1083" y="390" width="3" height="1" fill="rgba(0,0,0,.75)"/><rect x="1069" y="387" width="3" height="1" fill="rgba(0,0,0,.75)"/><rect x="997" y="411" width="142" height="39" fill="#2448a8"/><rect x="998" y="412" width="140" height="37" fill="#8aa8f8"/><rect x="999" y="413" width="138" height="35" fill="#5e84ec"/><path d="M1000.5 413V448M1012.5 413V448M1024.5 413V448M1036.5 413V448M1048.5 413V448M1060.5 413V448M1072.5 413V448M1085.5 413V448M1097.5 413V448M1109.5 413V448M1121.5 413V448M1133.5 413V448" stroke="#3c64e6" stroke-width="1" fill="none"/><rect x="1000" y="430" width="136" height="2" fill="#000"/><rect x="1127" y="432" width="2" height="1" fill="rgba(0,0,0,.75)"/><rect x="1023" y="432" width="2" height="1" fill="rgba(0,0,0,.75)"/><rect x="1013" y="429" width="1" height="1" fill="rgba(0,0,0,.75)"/><rect x="1023" y="429" width="3" height="1" fill="rgba(0,0,0,.75)"/><rect x="1077" y="432" width="3" height="1" fill="rgba(0,0,0,.75)"/><rect x="1003" y="432" width="1" height="1" fill="rgba(0,0,0,.75)"/><rect x="1036" y="429" width="1" height="1" fill="rgba(0,0,0,.75)"/><rect x="1031" y="432" width="3" height="1" fill="rgba(0,0,0,.75)"/><rect x="1115" y="432" width="3" height="1" fill="rgba(0,0,0,.75)"/><rect x="1022" y="429" width="3" height="1" fill="rgba(0,0,0,.75)"/><rect x="1096" y="429" width="1" height="1" fill="rgba(0,0,0,.75)"/><rect x="1078" y="429" width="1" height="1" fill="rgba(0,0,0,.75)"/><rect x="1068" y="432" width="2" height="1" fill="rgba(0,0,0,.75)"/><rect x="1054" y="432" width="3" height="1" fill="rgba(0,0,0,.75)"/><rect x="1111" y="432" width="3" height="1" fill="rgba(0,0,0,.75)"/><rect x="1073" y="432" width="2" height="1" fill="rgba(0,0,0,.75)"/><rect x="1083" y="432" width="2" height="1" fill="rgba(0,0,0,.75)"/><rect x="1123" y="429" width="1" height="1" fill="rgba(0,0,0,.75)"/><rect x="1039" y="429" width="3" height="1" fill="rgba(0,0,0,.75)"/><rect x="997" y="453" width="142" height="39" fill="#2448a8"/><rect x="998" y="454" width="140" height="37" fill="#8aa8f8"/><rect x="999" y="455" width="138" height="35" fill="#5e84ec"/><path d="M1000.5 455V490M1012.5 455V490M1024.5 455V490M1036.5 455V490M1048.5 455V490M1060.5 455V490M1072.5 455V490M1085.5 455V490M1097.5 455V490M1109.5 455V490M1121.5 455V490M1133.5 455V490" stroke="#3c64e6" stroke-width="1" fill="none"/><rect x="1000" y="472" width="136" height="2" fill="#000"/><rect x="1035" y="474" width="2" height="1" fill="rgba(0,0,0,.75)"/><rect x="1098" y="471" width="1" height="1" fill="rgba(0,0,0,.75)"/><rect x="1131" y="471" width="1" height="1" fill="rgba(0,0,0,.75)"/><rect x="1008" y="471" width="1" height="1" fill="rgba(0,0,0,.75)"/><rect x="1010" y="471" width="1" height="1" fill="rgba(0,0,0,.75)"/><rect x="1122" y="471" width="3" height="1" fill="rgba(0,0,0,.75)"/><rect x="1076" y="474" width="2" height="1" fill="rgba(0,0,0,.75)"/><rect x="1049" y="474" width="1" height="1" fill="rgba(0,0,0,.75)"/><rect x="1032" y="471" width="3" height="1" fill="rgba(0,0,0,.75)"/><rect x="1130" y="471" width="2" height="1" fill="rgba(0,0,0,.75)"/><rect x="1043" y="471" width="1" height="1" fill="rgba(0,0,0,.75)"/><rect x="1059" y="471" width="2" height="1" fill="rgba(0,0,0,.75)"/><rect x="1017" y="471" width="1" height="1" fill="rgba(0,0,0,.75)"/><rect x="1079" y="474" width="1" height="1" fill="rgba(0,0,0,.75)"/><rect x="1115" y="471" width="1" height="1" fill="rgba(0,0,0,.75)"/><rect x="1122" y="474" width="2" height="1" fill="rgba(0,0,0,.75)"/><rect x="1100" y="474" width="1" height="1" fill="rgba(0,0,0,.75)"/><rect x="1125" y="474" width="3" height="1" fill="rgba(0,0,0,.75)"/><rect x="1068" y="474" width="1" height="1" fill="rgba(0,0,0,.75)"/><rect x="712" y="495" width="117" height="39" fill="#176ea6"/><rect x="713" y="496" width="115" height="37" fill="#72c6f6"/><rect x="714" y="497" width="113" height="35" fill="#44aaea"/><path d="M720.5 497V532M732.5 497V532M744.5 497V532M756.5 497V532M769.5 497V532M781.5 497V532M793.5 497V532M805.5 497V532M817.5 497V532" stroke="#2a90d6" stroke-width="1" fill="none"/><rect x="715" y="514" width="111" height="2" fill="#000"/><rect x="732" y="516" width="1" height="1" fill="#000"/><rect x="787" y="516" width="1" height="1" fill="#000"/><rect x="829" y="495" width="43" height="39" fill="#176ea6"/><rect x="830" y="496" width="41" height="37" fill="#72c6f6"/><rect x="831" y="497" width="39" height="35" fill="#44aaea"/><path d="M842.5 497V532M854.5 497V532M866.5 497V532" stroke="#2a90d6" stroke-width="1" fill="none"/><rect x="832" y="514" width="37" height="2" fill="#000"/><rect x="844" y="516" width="1" height="1" fill="#000"/><rect x="1034" y="495" width="46" height="39" fill="#176ea6"/><rect x="1035" y="496" width="44" height="37" fill="#72c6f6"/><rect x="1036" y="497" width="42" height="35" fill="#44aaea"/><path d="M1036.5 497V532M1048.5 497V532M1060.5 497V532M1072.5 497V532" stroke="#2a90d6" stroke-width="1" fill="none"/><rect x="1037" y="514" width="40" height="2" fill="#000"/><rect x="1064" y="516" width="1" height="1" fill="#000"/><rect x="1132" y="495" width="110" height="39" fill="#176ea6"/><rect x="1133" y="496" width="108" height="37" fill="#72c6f6"/><rect x="1134" y="497" width="106" height="35" fill="#44aaea"/><path d="M1145.5 497V532M1158.5 497V532M1170.5 497V532M1182.5 497V532M1194.5 497V532M1206.5 497V532M1218.5 497V532M1230.5 497V532" stroke="#2a90d6" stroke-width="1" fill="none"/><rect x="1135" y="514" width="104" height="2" fill="#000"/><rect x="1158" y="516" width="1" height="1" fill="rgba(0,0,0,.75)"/><rect x="1197" y="516" width="2" height="1" fill="rgba(0,0,0,.75)"/><rect x="1209" y="513" width="2" height="1" fill="rgba(0,0,0,.75)"/><rect x="1200" y="513" width="3" height="1" fill="rgba(0,0,0,.75)"/><rect x="1180" y="513" width="1" height="1" fill="rgba(0,0,0,.75)"/><rect x="1151" y="513" width="1" height="1" fill="rgba(0,0,0,.75)"/><rect x="1173" y="513" width="2" height="1" fill="rgba(0,0,0,.75)"/><rect x="1207" y="513" width="1" height="1" fill="rgba(0,0,0,.75)"/><rect x="1140" y="513" width="2" height="1" fill="rgba(0,0,0,.75)"/><rect x="1152" y="513" width="2" height="1" fill="rgba(0,0,0,.75)"/><rect x="1184" y="516" width="3" height="1" fill="rgba(0,0,0,.75)"/><rect x="712" y="537" width="116" height="39" fill="#176ea6"/><rect x="713" y="538" width="114" height="37" fill="#72c6f6"/><rect x="714" y="539" width="112" height="35" fill="#44aaea"/><path d="M720.5 539V574M732.5 539V574M744.5 539V574M756.5 539V574M769.5 539V574M781.5 539V574M793.5 539V574M805.5 539V574M817.5 539V574" stroke="#2a90d6" stroke-width="1" fill="none"/><rect x="715" y="556" width="110" height="2" fill="#000"/><rect x="804" y="558" width="1" height="1" fill="#000"/><rect x="806" y="558" width="1" height="1" fill="#000"/><rect x="829" y="537" width="43" height="39" fill="#176ea6"/><rect x="830" y="538" width="41" height="37" fill="#72c6f6"/><rect x="831" y="539" width="39" height="35" fill="#44aaea"/><path d="M842.5 539V574M854.5 539V574M866.5 539V574" stroke="#2a90d6" stroke-width="1" fill="none"/><rect x="832" y="556" width="37" height="2" fill="#000"/><rect x="845" y="558" width="1" height="1" fill="#000"/><rect x="1033" y="537" width="47" height="39" fill="#176ea6"/><rect x="1034" y="538" width="45" height="37" fill="#72c6f6"/><rect x="1035" y="539" width="43" height="35" fill="#44aaea"/><path d="M1036.5 539V574M1048.5 539V574M1060.5 539V574M1072.5 539V574" stroke="#2a90d6" stroke-width="1" fill="none"/><rect x="1036" y="556" width="41" height="2" fill="#000"/><rect x="1068" y="558" width="1" height="1" fill="#000"/><rect x="1129" y="537" width="113" height="39" fill="#176ea6"/><rect x="1130" y="538" width="111" height="37" fill="#72c6f6"/><rect x="1131" y="539" width="109" height="35" fill="#44aaea"/><path d="M1133.5 539V574M1145.5 539V574M1158.5 539V574M1170.5 539V574M1182.5 539V574M1194.5 539V574M1206.5 539V574M1218.5 539V574M1230.5 539V574" stroke="#2a90d6" stroke-width="1" fill="none"/><rect x="1132" y="556" width="107" height="2" fill="#000"/><rect x="1215" y="558" width="1" height="1" fill="rgba(0,0,0,.75)"/><rect x="1219" y="555" width="3" height="1" fill="rgba(0,0,0,.75)"/><rect x="1158" y="555" width="3" height="1" fill="rgba(0,0,0,.75)"/><rect x="1171" y="555" width="3" height="1" fill="rgba(0,0,0,.75)"/><rect x="1209" y="555" width="1" height="1" fill="rgba(0,0,0,.75)"/><rect x="1160" y="555" width="3" height="1" fill="rgba(0,0,0,.75)"/><rect x="1199" y="558" width="3" height="1" fill="rgba(0,0,0,.75)"/><rect x="1230" y="558" width="1" height="1" fill="rgba(0,0,0,.75)"/><rect x="1221" y="558" width="2" height="1" fill="rgba(0,0,0,.75)"/><rect x="1158" y="558" width="3" height="1" fill="rgba(0,0,0,.75)"/><rect x="1219" y="555" width="1" height="1" fill="rgba(0,0,0,.75)"/><rect x="712" y="579" width="117" height="39" fill="#176ea6"/><rect x="713" y="580" width="115" height="37" fill="#72c6f6"/><rect x="714" y="581" width="113" height="35" fill="#44aaea"/><path d="M720.5 581V616M732.5 581V616M744.5 581V616M756.5 581V616M769.5 581V616M781.5 581V616M793.5 581V616M805.5 581V616M817.5 581V616" stroke="#2a90d6" stroke-width="1" fill="none"/><rect x="715" y="598" width="111" height="2" fill="#000"/><rect x="771" y="600" width="1" height="1" fill="#000"/><rect x="728" y="600" width="1" height="1" fill="#000"/><rect x="830" y="579" width="42" height="39" fill="#176ea6"/><rect x="831" y="580" width="40" height="37" fill="#72c6f6"/><rect x="832" y="581" width="38" height="35" fill="#44aaea"/><path d="M842.5 581V616M854.5 581V616M866.5 581V616" stroke="#2a90d6" stroke-width="1" fill="none"/><rect x="833" y="598" width="36" height="2" fill="#000"/><rect x="843" y="600" width="1" height="1" fill="#000"/><rect x="1033" y="579" width="46" height="39" fill="#176ea6"/><rect x="1034" y="580" width="44" height="37" fill="#72c6f6"/><rect x="1035" y="581" width="42" height="35" fill="#44aaea"/><path d="M1036.5 581V616M1048.5 581V616M1060.5 581V616M1072.5 581V616" stroke="#2a90d6" stroke-width="1" fill="none"/><rect x="1036" y="598" width="40" height="2" fill="#000"/><rect x="1058" y="600" width="1" height="1" fill="#000"/><rect x="1130" y="579" width="115" height="39" fill="#176ea6"/><rect x="1131" y="580" width="113" height="37" fill="#72c6f6"/><rect x="1132" y="581" width="111" height="35" fill="#44aaea"/><path d="M1133.5 581V616M1145.5 581V616M1158.5 581V616M1170.5 581V616M1182.5 581V616M1194.5 581V616M1206.5 581V616M1218.5 581V616M1230.5 581V616" stroke="#2a90d6" stroke-width="1" fill="none"/><rect x="1133" y="598" width="109" height="2" fill="#000"/><rect x="1207" y="597" width="3" height="1" fill="rgba(0,0,0,.75)"/><rect x="1188" y="600" width="2" height="1" fill="rgba(0,0,0,.75)"/><rect x="1210" y="600" width="3" height="1" fill="rgba(0,0,0,.75)"/><rect x="1136" y="597" width="3" height="1" fill="rgba(0,0,0,.75)"/><rect x="1157" y="597" width="1" height="1" fill="rgba(0,0,0,.75)"/><rect x="1150" y="600" width="2" height="1" fill="rgba(0,0,0,.75)"/><rect x="1229" y="600" width="3" height="1" fill="rgba(0,0,0,.75)"/><rect x="1221" y="597" width="2" height="1" fill="rgba(0,0,0,.75)"/><rect x="1224" y="597" width="1" height="1" fill="rgba(0,0,0,.75)"/><rect x="1224" y="597" width="2" height="1" fill="rgba(0,0,0,.75)"/><rect x="1230" y="600" width="2" height="1" fill="rgba(0,0,0,.75)"/><rect x="1189" y="600" width="2" height="1" fill="rgba(0,0,0,.75)"/><rect x="712" y="621" width="117" height="39" fill="#176ea6"/><rect x="713" y="622" width="115" height="37" fill="#72c6f6"/><rect x="714" y="623" width="113" height="35" fill="#44aaea"/><path d="M720.5 623V658M732.5 623V658M744.5 623V658M756.5 623V658M769.5 623V658M781.5 623V658M793.5 623V658M805.5 623V658M817.5 623V658" stroke="#2a90d6" stroke-width="1" fill="none"/><rect x="715" y="640" width="111" height="2" fill="#000"/><rect x="719" y="642" width="1" height="1" fill="#000"/><rect x="720" y="642" width="1" height="1" fill="#000"/><rect x="829" y="621" width="43" height="39" fill="#176ea6"/><rect x="830" y="622" width="41" height="37" fill="#72c6f6"/><rect x="831" y="623" width="39" height="35" fill="#44aaea"/><path d="M842.5 623V658M854.5 623V658M866.5 623V658" stroke="#2a90d6" stroke-width="1" fill="none"/><rect x="832" y="640" width="37" height="2" fill="#000"/><rect x="835" y="642" width="1" height="1" fill="#000"/><rect x="1032" y="621" width="46" height="39" fill="#176ea6"/><rect x="1033" y="622" width="44" height="37" fill="#72c6f6"/><rect x="1034" y="623" width="42" height="35" fill="#44aaea"/><path d="M1036.5 623V658M1048.5 623V658M1060.5 623V658M1072.5 623V658" stroke="#2a90d6" stroke-width="1" fill="none"/><rect x="1035" y="640" width="40" height="2" fill="#000"/><rect x="1064" y="642" width="1" height="1" fill="#000"/><rect x="1130" y="621" width="117" height="39" fill="#176ea6"/><rect x="1131" y="622" width="115" height="37" fill="#72c6f6"/><rect x="1132" y="623" width="113" height="35" fill="#44aaea"/><path d="M1133.5 623V658M1145.5 623V658M1158.5 623V658M1170.5 623V658M1182.5 623V658M1194.5 623V658M1206.5 623V658M1218.5 623V658M1230.5 623V658M1243.5 623V658" stroke="#2a90d6" stroke-width="1" fill="none"/><rect x="1133" y="640" width="111" height="2" fill="#000"/><rect x="1214" y="642" width="3" height="1" fill="rgba(0,0,0,.75)"/><rect x="1155" y="642" width="2" height="1" fill="rgba(0,0,0,.75)"/><rect x="1205" y="639" width="1" height="1" fill="rgba(0,0,0,.75)"/><rect x="1182" y="642" width="2" height="1" fill="rgba(0,0,0,.75)"/><rect x="1155" y="639" width="1" height="1" fill="rgba(0,0,0,.75)"/><rect x="1149" y="642" width="3" height="1" fill="rgba(0,0,0,.75)"/><rect x="1150" y="639" width="1" height="1" fill="rgba(0,0,0,.75)"/><rect x="1207" y="639" width="3" height="1" fill="rgba(0,0,0,.75)"/><rect x="1198" y="639" width="2" height="1" fill="rgba(0,0,0,.75)"/><rect x="1231" y="642" width="1" height="1" fill="rgba(0,0,0,.75)"/><rect x="1165" y="639" width="2" height="1" fill="rgba(0,0,0,.75)"/><rect x="1231" y="639" width="1" height="1" fill="rgba(0,0,0,.75)"/><rect x="858" y="663" width="148" height="39" fill="#11928e"/><rect x="859" y="664" width="146" height="37" fill="#6cf0ea"/><rect x="860" y="665" width="144" height="35" fill="#31cfca"/><path d="M866.5 665V700M878.5 665V700M890.5 665V700M902.5 665V700M914.5 665V700M927.5 665V700M939.5 665V700M951.5 665V700M963.5 665V700M975.5 665V700M987.5 665V700M1000.5 665V700" stroke="#1fb4b0" stroke-width="1" fill="none"/><rect x="861" y="682" width="142" height="2" fill="#000"/><rect x="954" y="684" width="1" height="1" fill="#000"/><rect x="924" y="684" width="1" height="1" fill="#000"/><rect x="886" y="684" width="1" height="1" fill="#000"/><rect x="1032" y="663" width="37" height="39" fill="#11928e"/><rect x="1033" y="664" width="35" height="37" fill="#6cf0ea"/><rect x="1034" y="665" width="33" height="35" fill="#31cfca"/><path d="M1036.5 665V700M1048.5 665V700M1060.5 665V700" stroke="#1fb4b0" stroke-width="1" fill="none"/><rect x="1035" y="682" width="31" height="2" fill="#000"/><rect x="1052" y="684" width="1" height="1" fill="#000"/><rect x="1068" y="663" width="78" height="39" fill="#11928e"/><rect x="1069" y="664" width="76" height="37" fill="#6cf0ea"/><rect x="1070" y="665" width="74" height="35" fill="#31cfca"/><path d="M1072.5 665V700M1085.5 665V700M1097.5 665V700M1109.5 665V700M1121.5 665V700M1133.5 665V700" stroke="#1fb4b0" stroke-width="1" fill="none"/><rect x="1071" y="682" width="72" height="2" fill="#000"/><rect x="1122" y="684" width="1" height="1" fill="#000"/><rect x="859" y="705" width="146" height="39" fill="#11928e"/><rect x="860" y="706" width="144" height="37" fill="#6cf0ea"/><rect x="861" y="707" width="142" height="35" fill="#31cfca"/><path d="M866.5 707V742M878.5 707V742M890.5 707V742M902.5 707V742M914.5 707V742M927.5 707V742M939.5 707V742M951.5 707V742M963.5 707V742M975.5 707V742M987.5 707V742M1000.5 707V742" stroke="#1fb4b0" stroke-width="1" fill="none"/><rect x="862" y="724" width="140" height="2" fill="#000"/><rect x="973" y="726" width="1" height="1" fill="#000"/><rect x="949" y="726" width="1" height="1" fill="#000"/><rect x="985" y="726" width="1" height="1" fill="#000"/><rect x="1032" y="705" width="37" height="39" fill="#11928e"/><rect x="1033" y="706" width="35" height="37" fill="#6cf0ea"/><rect x="1034" y="707" width="33" height="35" fill="#31cfca"/><path d="M1036.5 707V742M1048.5 707V742M1060.5 707V742" stroke="#1fb4b0" stroke-width="1" fill="none"/><rect x="1035" y="724" width="31" height="2" fill="#000"/><rect x="1061" y="726" width="1" height="1" fill="#000"/><rect x="1068" y="705" width="77" height="39" fill="#11928e"/><rect x="1069" y="706" width="75" height="37" fill="#6cf0ea"/><rect x="1070" y="707" width="73" height="35" fill="#31cfca"/><path d="M1072.5 707V742M1085.5 707V742M1097.5 707V742M1109.5 707V742M1121.5 707V742M1133.5 707V742" stroke="#1fb4b0" stroke-width="1" fill="none"/><rect x="1071" y="724" width="71" height="2" fill="#000"/><rect x="1078" y="726" width="1" height="1" fill="#000"/><rect x="858" y="747" width="148" height="39" fill="#11928e"/><rect x="859" y="748" width="146" height="37" fill="#6cf0ea"/><rect x="860" y="749" width="144" height="35" fill="#31cfca"/><path d="M866.5 749V784M878.5 749V784M890.5 749V784M902.5 749V784M914.5 749V784M927.5 749V784M939.5 749V784M951.5 749V784M963.5 749V784M975.5 749V784M987.5 749V784M1000.5 749V784" stroke="#1fb4b0" stroke-width="1" fill="none"/><rect x="861" y="766" width="142" height="2" fill="#000"/><rect x="919" y="768" width="1" height="1" fill="#000"/><rect x="875" y="768" width="1" height="1" fill="#000"/><rect x="978" y="768" width="1" height="1" fill="#000"/><rect x="1032" y="747" width="38" height="39" fill="#11928e"/><rect x="1033" y="748" width="36" height="37" fill="#6cf0ea"/><rect x="1034" y="749" width="34" height="35" fill="#31cfca"/><path d="M1036.5 749V784M1048.5 749V784M1060.5 749V784" stroke="#1fb4b0" stroke-width="1" fill="none"/><rect x="1035" y="766" width="32" height="2" fill="#000"/><rect x="1053" y="768" width="1" height="1" fill="#000"/><rect x="1069" y="747" width="75" height="39" fill="#11928e"/><rect x="1070" y="748" width="73" height="37" fill="#6cf0ea"/><rect x="1071" y="749" width="71" height="35" fill="#31cfca"/><path d="M1072.5 749V784M1085.5 749V784M1097.5 749V784M1109.5 749V784M1121.5 749V784M1133.5 749V784" stroke="#1fb4b0" stroke-width="1" fill="none"/><rect x="1072" y="766" width="69" height="2" fill="#000"/><rect x="1089" y="768" width="1" height="1" fill="#000"/><rect x="858" y="789" width="148" height="39" fill="#11928e"/><rect x="859" y="790" width="146" height="37" fill="#6cf0ea"/><rect x="860" y="791" width="144" height="35" fill="#31cfca"/><path d="M866.5 791V826M878.5 791V826M890.5 791V826M902.5 791V826M914.5 791V826M927.5 791V826M939.5 791V826M951.5 791V826M963.5 791V826M975.5 791V826M987.5 791V826M1000.5 791V826" stroke="#1fb4b0" stroke-width="1" fill="none"/><rect x="861" y="808" width="142" height="2" fill="#000"/><rect x="872" y="810" width="1" height="1" fill="#000"/><rect x="909" y="810" width="1" height="1" fill="#000"/><rect x="913" y="810" width="1" height="1" fill="#000"/><rect x="1032" y="789" width="38" height="39" fill="#11928e"/><rect x="1033" y="790" width="36" height="37" fill="#6cf0ea"/><rect x="1034" y="791" width="34" height="35" fill="#31cfca"/><path d="M1036.5 791V826M1048.5 791V826M1060.5 791V826" stroke="#1fb4b0" stroke-width="1" fill="none"/><rect x="1035" y="808" width="32" height="2" fill="#000"/><rect x="1039" y="810" width="1" height="1" fill="#000"/><rect x="1069" y="789" width="75" height="39" fill="#11928e"/><rect x="1070" y="790" width="73" height="37" fill="#6cf0ea"/><rect x="1071" y="791" width="71" height="35" fill="#31cfca"/><path d="M1072.5 791V826M1085.5 791V826M1097.5 791V826M1109.5 791V826M1121.5 791V826M1133.5 791V826" stroke="#1fb4b0" stroke-width="1" fill="none"/><rect x="1072" y="808" width="69" height="2" fill="#000"/><rect x="1090" y="810" width="1" height="1" fill="#000"/><g shape-rendering="geometricPrecision"><path d="M596 170.5H684" stroke="rgba(120,10,60,.45)" stroke-width="2.2"/><path d="M684 170.1L685 170.1L686 170.1L687 169.2L688 169.7L689 169.3L690 169.1L691 169.2L692 169.2L693 169.1L694 168.8L695 169.6L696 169.2L697 169.4L698 170.1L699 170.1L700 170.1L701 170.1L702 169.8L703 169.4L704 169.0L705 169.0L706 169.2L707 168.3L708 168.4L709 168.4L710 169.3L711 169.3L712 169.7L713 170.1L714 170.1L715 170.1L716 170.1L717 170.1L718 169.2L719 169.6L720 169.6L721 169.2L722 168.7L723 168.6L724 169.0L725 169.2L726 168.7L727 169.1L728 169.1L729 169.7L730 170.1L731 170.1L732 170.1L733 170.1L734 170.1L735 170.1L736 170.0L737 169.2L738 169.2L739 169.3L740 168.8L741 169.2L742 170.1L743 170.1L744 170.1L745 170.1L746 170.1L747 170.1L748 169.2L749 169.7L750 168.8L751 169.4L752 168.5L753 168.9L754 169.1L755 169.1L756 168.9L757 170.1L758 170.1L759 169.2L760 169.1L761 168.6L762 168.6L763 168.5L764 168.3L765 168.2L766 168.2L767 168.4L768 168.6L769 168.4L770 169.0L771 170.1L772 170.1L773 169.5L774 169.7L775 169.5L776 169.7L777 169.4L778 169.5L779 168.8L780 168.9L781 169.3L782 169.1L783 168.8L784 169.6L785 169.1L786 169.5L787 170.1L788 170.1L789 170.1L790 170.1L791 170.1L792 170.1L793 170.1L794 170.1L795 170.1L796 170.1L797 170.1L798 170.1L799 170.1L800 170.1L801 170.1L802 170.1L803 170.1L804 170.1L805 170.1L806 170.1L807 169.1L808 168.5L809 168.6L810 168.2L811 168.0L812 168.0L813 168.9L814 170.1L815 170.1L816 170.1L817 170.1L818 170.1L819 170.1L820 169.2L821 169.1L822 169.0L823 169.0L824 168.9L825 169.2L826 169.3L827 169.5L828 169.1L829 170.1L830 170.1L831 169.4L832 169.3L833 169.2L834 168.3L835 168.1L836 168.1L837 168.6L838 168.8L839 169.0L840 169.1L841 170.1L842 170.1L843 170.1L844 170.1L845 170.1L846 169.4L847 168.9L848 168.9L849 168.0L850 167.8L851 168.0L852 168.2L853 167.8L854 168.6L855 168.8L856 169.3L857 170.1L858 170.1L859 170.1L860 170.1L861 170.1L862 170.1L863 170.1L864 170.1L865 170.1L866 170.1L867 170.1L868 170.1L869 170.1L870 168.8L871 168.0L872 167.2L873 168.2L874 170.1L875 170.1L876 170.1L877 170.1L878 169.3L879 169.6L880 169.3L881 169.3L882 168.9L883 169.1L884 169.0L885 168.6L886 168.8L887 168.6L888 168.8L889 168.7L890 168.9L891 169.0L892 170.1L893 170.1L894 170.1L895 170.1L896 170.1L897 170.1L898 170.1L899 170.1L900 170.1L901 170.1L902 170.1L903 170.1L904 170.1L905 170.1L906 170.1L907 168.9L908 169.2L909 169.1L910 168.3L911 168.8L912 168.1L913 168.4L914 169.1L915 168.6L916 168.7L917 170.1L918 170.1L919 170.1L920 170.1L921 169.3L922 168.7L923 168.6L924 170.1L925 170.1L926 169.6L927 168.9L928 168.6L929 168.0L930 168.3L931 168.6L932 170.1L933 170.1L934 170.1L935 170.1L936 170.1L937 170.1L938 170.1L939 170.1L940 170.1L941 170.1L942 170.1L943 170.1L944 170.1L945 170.1L946 170.1L947 170.1L948 170.1L949 170.1L950 170.1L951 170.1L952 170.1L953 170.1L954 170.1L955 170.1L956 170.1L957 170.1L958 170.1L959 169.3L960 168.7L961 168.6L962 168.6L963 169.3L964 170.1L965 169.5L966 169.2L967 168.9L968 169.0L969 168.2L970 168.3L971 168.1L972 167.9L973 167.7L974 168.0L975 168.6L976 168.1L977 168.2L978 168.6L979 168.7L980 168.8L981 170.1L982 170.1L983 170.1L984 170.1L985 170.1L986 170.1L987 170.1L988 170.1L989 170.1L990 170.1L991 170.1L992 170.1L993 170.1L994 170.1L995 170.1L996 170.1L997 170.1L998 170.1L999 170.1L1000 169.6L1001 168.9L1002 169.2L1003 169.2L1004 168.8L1005 168.3L1006 168.6L1007 168.1L1008 168.0L1009 168.6L1010 168.9L1011 169.0L1012 168.9L1013 170.1L1014 169.0L1015 168.8L1016 168.4L1017 168.6L1018 168.9L1019 169.1L1020 169.2L1021 169.1L1022 168.9L1023 170.1L1024 170.1L1025 169.3L1026 168.6L1027 167.7L1028 168.1L1029 170.1L1030 170.1L1031 169.2L1032 169.1L1033 169.4L1034 169.1L1035 169.0L1036 168.9L1037 169.1L1038 168.3L1039 168.8L1040 168.2L1041 168.4L1042 169.3L1043 169.0L1044 168.8L1045 168.8L1046 169.3L1047 170.1L1048 169.1L1049 168.8L1050 167.7L1051 168.0L1052 167.6L1053 168.4L1054 168.5L1055 170.1L1056 170.1L1057 169.0L1058 169.4L1059 168.4L1060 169.1L1061 170.1L1062 170.1L1063 170.1L1064 170.1L1065 170.1L1066 169.1L1067 169.1L1068 169.3L1069 168.5L1070 168.8L1071 169.5L1072 169.7L1073 170.1L1074 170.1L1075 170.1L1076 169.4L1077 169.3L1078 169.4L1079 169.4L1080 169.1L1081 169.0L1082 168.4L1083 169.1L1084 168.5L1085 168.5L1086 169.3L1087 168.7L1088 169.0L1089 168.9L1090 169.5L1091 169.2L1092 169.0L1093 168.3L1094 168.5L1095 168.6L1096 168.5L1097 168.8L1098 169.2L1099 169.3L1100 168.8L1101 170.1L1102 170.1L1103 170.1L1104 170.1L1105 170.1L1106 170.1L1107 170.1L1108 170.1L1109 170.1L1110 170.1L1111 170.1L1112 170.1L1113 169.4L1114 168.4L1115 168.7L1116 168.3L1117 168.5L1118 169.1L1119 170.1L1120 170.1L1121 169.2L1122 168.3L1123 168.0L1124 167.7L1125 168.2L1126 168.4L1127 170.1L1128 170.1L1129 170.1L1130 170.1L1131 170.1L1132 170.1L1133 168.9L1134 169.1L1135 168.7L1136 169.1L1137 168.3L1138 168.4L1139 168.3L1140 168.6L1141 169.1L1142 169.5L1143 170.1L1144 170.1L1145 170.1L1146 168.7L1147 169.0L1148 168.3L1149 168.0L1150 168.5L1151 168.5L1152 170.1L1153 168.5L1154 168.9L1155 168.3L1156 168.5L1157 168.0L1158 168.0L1159 168.0L1160 167.8L1161 167.9L1162 167.5L1163 168.1L1164 168.5L1165 168.1L1166 168.2L1167 170.1L1168 169.4L1169 169.3L1170 168.8L1171 169.3L1172 169.3L1173 169.3L1174 168.9L1175 168.6L1176 168.1L1177 167.6L1178 168.0L1179 168.5L1180 168.7L1181 168.9L1182 170.1L1183 170.1L1184 170.1L1185 170.1L1186 170.1L1187 170.1L1188 170.1L1189 170.1L1190 170.1L1191 170.1L1192 170.1L1193 170.1L1194 170.1L1195 169.3L1196 169.0L1197 168.8L1198 168.6L1199 168.4L1200 170.1L1201 170.1L1202 169.2L1203 168.7L1204 168.4L1205 168.0L1206 168.4L1207 168.2L1208 168.0L1209 167.7L1210 167.7L1211 167.4L1212 167.7L1213 167.8L1214 168.8L1215 169.0L1216 168.5L1217 170.1L1218 170.1L1219 168.7L1220 168.8L1221 168.4L1222 168.7L1223 168.0L1224 167.6L1225 167.9L1226 168.2L1227 168.3L1228 170.1L1229 170.1L1230 170.1L1231 169.2L1232 169.1L1233 168.8L1234 168.2L1235 167.8L1236 167.3L1237 167.8L1238 168.1L1239 168.2L1240 168.8L1241 170.1L1242 170.1L1243 170.1L1244 170.1L1245 170.1L1246 170.1L1247 170.1L1248 169.4L1249 169.7L1250 168.9L1251 169.3L1252 168.5L1253 168.6L1254 168.9L1255 169.2L1256 169.2L1257 169.0L1258 169.1L1259 170.1L1260 170.1L1261 170.1L1262 169.7L1263 169.7L1264 169.2L1265 169.0L1266 169.1L1267 169.1L1268 168.7L1269 169.1L1270 168.8L1271 168.7L1272 168.4L1273 168.8L1274 168.6L1275 169.1L1276 169.4L1277 169.5L1278 168.9L1279 168.8L1280 168.9L1281 168.9L1282 168.7L1283 168.9L1284 170.1L1285 170.1L1286 170.1L1287 169.1L1288 168.9L1289 168.3L1290 167.7L1291 168.1L1292 168.2L1293 168.3L1294 168.5L1295 168.5L1296 170.1L1297 170.1L1298 170.1L1299 170.1L1300 170.1L1301 170.1L1302 170.1L1303 170.1L1304 170.1L1305 170.1L1306 170.1L1307 170.1L1308 170.1L1309 170.1L1310 169.4L1311 168.6L1312 168.4L1313 168.4L1314 168.5L1315 167.6L1316 168.4L1317 168.1L1318 168.9L1319 169.1L1320 170.1L1321 170.1L1322 170.1L1323 170.1L1324 170.1L1325 170.1L1326 170.1L1327 170.1L1328 170.1L1329 169.2L1330 169.5L1331 168.7L1332 168.9L1333 169.2L1334 169.3L1335 169.4L1336 170.1L1337 170.1L1338 168.7L1339 168.3L1340 168.7L1341 168.3L1342 168.2L1343 167.3L1344 167.8L1345 168.1L1346 168.4L1347 168.3L1348 168.1L1349 168.3L1350 170.1L1351 170.1L1352 170.1L1353 170.1L1354 170.1L1355 168.8L1356 168.3L1357 168.1L1358 168.5L1359 168.4L1360 167.4L1361 167.6L1362 168.5L1363 168.2L1364 168.6L1365 168.9L1366 170.1L1367 170.1L1368 170.1L1369 170.1L1370 170.1L1371 170.1L1372 170.1L1373 170.1L1374 170.1L1375 169.4L1376 169.3L1377 169.2L1378 168.8L1379 168.5L1380 167.9L1381 168.9L1382 168.4L1383 169.3L1384 170.1L1385 170.1L1386 170.1L1387 170.1L1388 169.4L1389 168.9L1390 168.8L1391 169.0L1392 169.2L1393 168.7L1394 168.6L1395 168.1L1396 168.9L1397 168.9L1398 168.5L1399 169.5L1400 169.3L1401 170.1L1402 170.1L1403 170.1L1404 170.1L1405 170.1L1406 168.6L1407 168.1L1408 168.2L1409 168.2L1410 168.7L1411 170.1L1412 169.0L1413 169.5L1414 168.9L1415 168.6L1416 168.9L1417 168.8L1418 168.4L1419 168.8L1420 169.3L1421 169.1L1422 170.1L1423 170.1L1424 170.1L1424 170.9L1423 170.9L1422 170.9L1421 171.5L1420 172.2L1419 172.1L1418 172.2L1417 171.9L1416 172.7L1415 172.3L1414 171.6L1413 171.3L1412 171.3L1411 170.9L1410 173.0L1409 172.9L1408 173.6L1407 172.4L1406 172.1L1405 170.9L1404 170.9L1403 170.9L1402 170.9L1401 170.9L1400 172.0L1399 171.8L1398 172.3L1397 172.2L1396 172.3L1395 172.1L1394 172.6L1393 172.7L1392 172.2L1391 172.5L1390 171.8L1389 171.7L1388 171.9L1387 170.9L1386 170.9L1385 170.9L1384 170.9L1383 171.8L1382 172.0L1381 172.0L1380 172.6L1379 172.5L1378 172.2L1377 172.4L1376 171.6L1375 171.4L1374 170.9L1373 170.9L1372 170.9L1371 170.9L1370 170.9L1369 170.9L1368 170.9L1367 170.9L1366 170.9L1365 172.0L1364 172.6L1363 173.0L1362 173.1L1361 173.4L1360 173.5L1359 172.5L1358 172.3L1357 172.2L1356 171.9L1355 172.4L1354 170.9L1353 170.9L1352 170.9L1351 170.9L1350 170.9L1349 172.7L1348 172.9L1347 172.4L1346 173.4L1345 173.6L1344 173.8L1343 173.2L1342 173.1L1341 172.4L1340 172.8L1339 172.5L1338 172.2L1337 170.9L1336 170.9L1335 171.9L1334 171.5L1333 171.7L1332 171.8L1331 171.8L1330 172.1L1329 171.2L1328 170.9L1327 170.9L1326 170.9L1325 170.9L1324 170.9L1323 170.9L1322 170.9L1321 170.9L1320 170.9L1319 171.7L1318 172.0L1317 172.9L1316 172.4L1315 173.1L1314 172.5L1313 172.4L1312 172.4L1311 172.3L1310 171.8L1309 170.9L1308 170.9L1307 170.9L1306 170.9L1305 170.9L1304 170.9L1303 170.9L1302 170.9L1301 170.9L1300 170.9L1299 170.9L1298 170.9L1297 170.9L1296 170.9L1295 172.6L1294 172.8L1293 173.2L1292 173.1L1291 173.6L1290 173.0L1289 172.8L1288 172.4L1287 172.4L1286 170.9L1285 170.9L1284 170.9L1283 171.7L1282 172.1L1281 172.9L1280 172.1L1279 172.2L1278 172.1L1277 171.9L1276 171.6L1275 171.7L1274 171.6L1273 172.5L1272 172.0L1271 172.7L1270 172.6L1269 172.1L1268 172.2L1267 172.4L1266 172.0L1265 172.0L1264 171.6L1263 171.9L1262 171.9L1261 170.9L1260 170.9L1259 170.9L1258 171.9L1257 172.1L1256 171.8L1255 171.7L1254 172.0L1253 171.9L1252 171.9L1251 171.9L1250 172.1L1249 171.7L1248 171.8L1247 170.9L1246 170.9L1245 170.9L1244 170.9L1243 170.9L1242 170.9L1241 170.9L1240 172.6L1239 172.1L1238 173.0L1237 173.3L1236 173.6L1235 172.6L1234 172.6L1233 172.3L1232 172.0L1231 172.3L1230 170.9L1229 170.9L1228 170.9L1227 172.4L1226 172.5L1225 172.9L1224 172.8L1223 172.7L1222 173.2L1221 172.6L1220 171.8L1219 172.2L1218 170.9L1217 170.9L1216 171.9L1215 172.2L1214 172.6L1213 172.9L1212 172.6L1211 173.6L1210 173.2L1209 173.6L1208 173.6L1207 173.0L1206 173.0L1205 172.5L1204 172.5L1203 172.4L1202 171.6L1201 170.9L1200 170.9L1199 172.0L1198 172.5L1197 172.8L1196 172.5L1195 171.9L1194 170.9L1193 170.9L1192 170.9L1191 170.9L1190 170.9L1189 170.9L1188 170.9L1187 170.9L1186 170.9L1185 170.9L1184 170.9L1183 170.9L1182 170.9L1181 171.7L1180 172.0L1179 172.3L1178 173.2L1177 172.7L1176 172.8L1175 172.7L1174 172.1L1173 172.2L1172 172.0L1171 171.8L1170 172.3L1169 171.7L1168 171.5L1167 170.9L1166 171.9L1165 172.1L1164 172.9L1163 172.7L1162 172.8L1161 173.7L1160 173.5L1159 173.3L1158 173.2L1157 172.6L1156 172.3L1155 172.1L1154 172.1L1153 172.3L1152 170.9L1151 172.4L1150 173.2L1149 173.2L1148 172.5L1147 172.6L1146 171.5L1145 170.9L1144 170.9L1143 170.9L1142 172.1L1141 171.8L1140 172.2L1139 172.7L1138 172.5L1137 172.5L1136 172.7L1135 171.9L1134 172.2L1133 171.6L1132 170.9L1131 170.9L1130 170.9L1129 170.9L1128 170.9L1127 170.9L1126 172.4L1125 173.1L1124 172.7L1123 173.0L1122 172.3L1121 171.9L1120 170.9L1119 170.9L1118 172.5L1117 172.4L1116 173.0L1115 172.6L1114 171.8L1113 172.1L1112 170.9L1111 170.9L1110 170.9L1109 170.9L1108 170.9L1107 170.9L1106 170.9L1105 170.9L1104 170.9L1103 170.9L1102 170.9L1101 170.9L1100 171.6L1099 172.4L1098 172.4L1097 172.8L1096 172.3L1095 172.3L1094 172.0L1093 172.1L1092 172.1L1091 171.7L1090 171.5L1089 172.1L1088 171.8L1087 171.6L1086 172.3L1085 171.9L1084 172.6L1083 172.1L1082 172.5L1081 172.0L1080 171.6L1079 172.3L1078 172.1L1077 171.4L1076 172.0L1075 170.9L1074 170.9L1073 170.9L1072 172.2L1071 172.0L1070 172.6L1069 171.9L1068 172.2L1067 172.0L1066 172.0L1065 170.9L1064 170.9L1063 170.9L1062 170.9L1061 170.9L1060 172.3L1059 172.0L1058 172.3L1057 171.5L1056 170.9L1055 170.9L1054 172.5L1053 172.5L1052 173.3L1051 173.5L1050 173.1L1049 172.1L1048 172.2L1047 170.9L1046 171.3L1045 171.8L1044 171.9L1043 171.7L1042 172.1L1041 171.9L1040 172.0L1039 172.4L1038 172.1L1037 172.2L1036 172.4L1035 172.3L1034 171.7L1033 171.8L1032 171.8L1031 171.2L1030 170.9L1029 170.9L1028 172.7L1027 173.4L1026 172.9L1025 172.0L1024 170.9L1023 170.9L1022 172.1L1021 172.0L1020 171.4L1019 172.2L1018 172.5L1017 172.9L1016 172.1L1015 172.4L1014 171.4L1013 170.9L1012 172.1L1011 172.1L1010 171.8L1009 172.7L1008 172.7L1007 172.4L1006 172.3L1005 172.4L1004 172.4L1003 172.1L1002 171.8L1001 171.6L1000 172.1L999 170.9L998 170.9L997 170.9L996 170.9L995 170.9L994 170.9L993 170.9L992 170.9L991 170.9L990 170.9L989 170.9L988 170.9L987 170.9L986 170.9L985 170.9L984 170.9L983 170.9L982 170.9L981 170.9L980 172.4L979 172.1L978 172.1L977 172.8L976 172.4L975 173.1L974 173.1L973 173.5L972 172.9L971 173.2L970 172.3L969 172.5L968 172.8L967 172.6L966 171.7L965 171.7L964 170.9L963 172.4L962 172.5L961 172.2L960 171.6L959 172.0L958 170.9L957 170.9L956 170.9L955 170.9L954 170.9L953 170.9L952 170.9L951 170.9L950 170.9L949 170.9L948 170.9L947 170.9L946 170.9L945 170.9L944 170.9L943 170.9L942 170.9L941 170.9L940 170.9L939 170.9L938 170.9L937 170.9L936 170.9L935 170.9L934 170.9L933 170.9L932 170.9L931 172.1L930 172.2L929 172.4L928 172.4L927 172.0L926 171.9L925 170.9L924 170.9L923 171.8L922 172.5L921 171.7L920 170.9L919 170.9L918 170.9L917 170.9L916 172.0L915 171.7L914 172.0L913 172.4L912 173.0L911 172.4L910 172.6L909 172.0L908 172.3L907 171.3L906 170.9L905 170.9L904 170.9L903 170.9L902 170.9L901 170.9L900 170.9L899 170.9L898 170.9L897 170.9L896 170.9L895 170.9L894 170.9L893 170.9L892 170.9L891 171.5L890 172.1L889 171.8L888 172.1L887 172.8L886 172.8L885 172.5L884 172.3L883 172.4L882 172.0L881 172.5L880 171.8L879 171.6L878 171.6L877 170.9L876 170.9L875 170.9L874 170.9L873 173.2L872 173.5L871 172.7L870 172.4L869 170.9L868 170.9L867 170.9L866 170.9L865 170.9L864 170.9L863 170.9L862 170.9L861 170.9L860 170.9L859 170.9L858 170.9L857 170.9L856 172.2L855 172.3L854 172.2L853 172.4L852 173.0L851 173.3L850 172.5L849 172.4L848 172.1L847 172.3L846 171.8L845 170.9L844 170.9L843 170.9L842 170.9L841 170.9L840 171.5L839 171.9L838 172.5L837 172.7L836 172.6L835 172.3L834 172.1L833 172.1L832 171.7L831 171.9L830 170.9L829 170.9L828 171.8L827 171.5L826 172.4L825 172.4L824 172.0L823 172.0L822 172.2L821 171.6L820 171.9L819 170.9L818 170.9L817 170.9L816 170.9L815 170.9L814 170.9L813 172.3L812 172.9L811 172.6L810 172.5L809 172.3L808 171.8L807 172.2L806 170.9L805 170.9L804 170.9L803 170.9L802 170.9L801 170.9L800 170.9L799 170.9L798 170.9L797 170.9L796 170.9L795 170.9L794 170.9L793 170.9L792 170.9L791 170.9L790 170.9L789 170.9L788 170.9L787 170.9L786 171.9L785 171.9L784 171.7L783 171.5L782 172.3L781 172.1L780 172.4L779 171.7L778 171.9L777 172.3L776 171.6L775 171.5L774 171.6L773 171.8L772 170.9L771 170.9L770 171.9L769 172.2L768 172.4L767 172.5L766 173.2L765 173.1L764 173.1L763 172.6L762 172.9L761 172.1L760 172.3L759 172.3L758 170.9L757 170.9L756 171.9L755 172.0L754 172.1L753 172.1L752 171.9L751 172.0L750 172.0L749 171.7L748 171.2L747 170.9L746 170.9L745 170.9L744 170.9L743 170.9L742 170.9L741 171.3L740 171.6L739 172.5L738 172.2L737 172.1L736 171.3L735 170.9L734 170.9L733 170.9L732 170.9L731 170.9L730 170.9L729 171.7L728 171.3L727 171.5L726 171.7L725 172.3L724 171.9L723 171.7L722 172.2L721 171.7L720 171.6L719 171.5L718 171.6L717 170.9L716 170.9L715 170.9L714 170.9L713 170.9L712 172.0L711 172.2L710 172.2L709 172.4L708 172.0L707 172.7L706 172.2L705 172.0L704 171.7L703 171.6L702 172.0L701 170.9L700 170.9L699 170.9L698 170.9L697 172.0L696 171.7L695 171.6L694 171.5L693 172.5L692 172.2L691 172.3L690 172.1L689 171.3L688 171.4L687 171.3L686 170.9L685 170.9L684 170.9Z" fill="#8c1646" stroke="#000" stroke-width=".8"/><path d="M684 170.5H1424" stroke="#000" stroke-width="1.4"/><path d="M595 188.1L596 188.1L597 188.1L598 188.1L599 188.1L600 188.1L601 188.1L602 188.1L603 188.1L604 188.1L605 188.1L606 188.1L607 188.1L608 188.1L609 188.1L610 188.1L611 188.1L612 188.1L613 187.0L614 186.8L615 185.8L616 185.3L617 185.8L618 185.0L619 185.5L620 186.1L621 186.2L622 188.1L623 188.1L624 188.1L625 188.1L626 188.1L627 187.6L628 187.5L629 187.4L630 187.3L631 187.3L632 186.9L633 186.8L634 186.6L635 187.3L636 187.6L637 187.4L638 187.2L639 187.1L640 188.1L641 188.1L642 188.1L643 188.1L644 188.1L645 188.1L646 188.1L647 188.1L648 188.1L649 188.1L650 188.1L651 188.1L652 188.1L653 188.1L654 188.1L655 188.1L656 188.1L657 188.1L658 188.1L659 188.1L660 188.1L661 188.1L662 188.1L663 188.1L664 188.1L665 188.1L666 188.1L667 188.1L668 188.1L669 188.1L670 188.1L671 188.1L672 188.1L673 188.1L674 188.1L675 188.1L676 188.1L677 188.1L678 188.1L679 188.1L680 188.1L681 188.1L682 188.1L683 188.1L684 188.1L685 188.1L686 188.1L687 188.1L688 188.1L689 188.1L690 188.1L691 188.1L692 188.1L693 188.1L694 188.1L695 188.1L696 188.1L697 188.1L698 188.1L699 188.1L700 188.1L701 188.1L702 188.1L703 188.1L704 188.1L705 188.1L706 188.1L707 188.1L708 188.1L709 188.1L710 188.1L711 188.1L712 188.1L713 188.1L714 188.1L715 188.1L716 188.1L717 188.1L718 188.1L719 188.1L720 186.7L721 186.7L722 185.9L723 185.2L724 185.7L725 186.4L726 188.1L727 188.1L728 188.1L729 188.1L730 188.1L731 188.1L732 188.1L733 188.1L734 188.1L735 188.1L736 188.1L737 188.1L738 188.1L739 188.1L740 188.1L741 188.1L742 188.1L743 188.1L744 188.1L745 188.1L746 188.1L747 188.1L748 188.1L749 188.1L750 188.1L751 188.1L752 188.1L753 188.1L754 188.1L755 188.1L756 188.1L757 188.1L758 188.1L759 188.1L760 188.1L761 188.1L762 188.1L763 187.8L764 187.4L765 187.1L766 187.2L767 186.5L768 186.8L769 186.7L770 187.1L771 187.2L772 187.5L773 187.0L774 188.1L775 188.1L776 188.1L777 188.1L778 188.1L779 188.1L780 188.1L781 188.1L782 188.1L783 188.1L784 188.1L785 188.1L786 188.1L787 188.1L788 188.1L789 188.1L790 188.1L791 188.1L792 188.1L793 188.1L794 188.1L795 188.1L796 188.1L797 188.1L798 188.1L799 188.1L800 188.1L801 188.1L802 188.1L803 188.1L804 188.1L805 188.1L806 188.1L807 188.1L808 188.1L809 188.1L810 188.1L811 188.1L812 188.1L813 188.1L814 187.4L815 186.6L816 186.3L817 186.5L818 188.1L819 188.1L820 188.1L821 188.1L822 188.1L823 188.1L824 188.1L825 188.1L826 188.1L827 188.1L828 188.1L829 188.1L830 188.1L831 188.1L832 188.1L833 188.1L834 188.1L835 188.1L836 188.1L837 187.2L838 187.7L839 187.0L840 187.3L841 186.9L842 187.2L843 187.1L844 187.3L845 187.1L846 187.5L847 187.3L848 187.1L849 187.7L850 187.6L851 187.1L852 188.1L853 188.1L854 188.1L855 188.1L856 188.1L857 188.1L858 188.1L859 188.1L860 188.1L861 188.1L862 188.1L863 188.1L864 188.1L865 188.1L866 188.1L867 188.1L868 188.1L869 188.1L870 188.1L871 188.1L872 188.1L873 188.1L874 188.1L875 188.1L876 188.1L877 188.1L878 188.1L879 188.1L880 188.1L881 188.1L882 188.1L883 188.1L884 188.1L885 188.1L886 188.1L887 188.1L888 188.1L889 188.1L890 188.1L891 188.1L892 188.1L893 186.8L894 186.6L895 186.7L896 185.9L897 186.3L898 186.2L899 185.7L900 185.4L901 185.6L902 186.2L903 185.8L904 186.4L905 186.0L906 186.8L907 188.1L908 188.1L909 188.1L910 188.1L911 188.1L912 188.1L913 188.1L914 188.1L915 188.1L916 188.1L917 188.1L918 188.1L919 188.1L920 187.3L921 186.8L922 186.1L923 185.4L924 185.6L925 185.7L926 186.0L927 186.5L928 186.4L929 185.9L930 185.8L931 186.1L932 185.7L933 185.5L934 185.9L935 185.4L936 186.0L937 186.6L938 186.2L939 188.1L940 188.1L941 188.1L942 188.1L943 188.1L944 188.1L945 188.1L946 188.1L947 188.1L948 188.1L949 188.1L950 188.1L951 188.1L952 188.1L953 188.1L954 188.1L955 188.1L956 188.1L957 188.1L958 188.1L959 188.1L960 188.1L961 188.1L962 188.1L963 188.1L964 188.1L965 188.1L966 188.1L967 188.1L968 188.1L969 188.1L970 188.1L971 188.1L972 188.1L973 188.1L974 188.1L975 188.1L976 188.1L977 188.1L978 188.1L979 188.1L980 188.1L981 188.1L982 188.1L983 188.1L984 188.1L985 188.1L986 188.1L987 188.1L988 188.1L989 188.1L990 188.1L991 188.1L992 188.1L993 188.1L994 188.1L995 188.1L996 188.1L997 188.1L998 188.1L999 188.1L1000 188.1L1001 188.1L1002 188.1L1003 188.1L1004 188.1L1005 188.1L1006 188.1L1007 188.1L1008 188.1L1009 188.1L1010 188.1L1011 187.2L1012 186.5L1013 186.1L1014 188.1L1015 188.1L1016 188.1L1017 188.1L1018 188.1L1019 188.1L1020 188.1L1021 188.1L1022 187.5L1023 186.7L1024 186.6L1025 187.2L1026 186.6L1027 187.0L1028 186.0L1029 186.5L1030 186.4L1031 186.3L1032 186.5L1033 186.8L1034 187.3L1035 187.3L1036 187.5L1037 187.2L1038 186.6L1039 186.6L1040 186.6L1041 186.2L1042 186.2L1043 186.2L1044 186.0L1045 186.2L1046 186.3L1047 186.4L1048 186.2L1049 186.3L1050 186.4L1051 187.0L1052 188.1L1053 186.8L1054 186.7L1055 187.1L1056 186.3L1057 186.8L1058 186.1L1059 186.3L1060 186.1L1061 186.3L1062 186.4L1063 186.6L1064 187.3L1065 187.4L1066 187.1L1067 186.1L1068 186.4L1069 186.7L1070 187.1L1071 187.1L1072 188.1L1073 188.1L1074 187.5L1075 186.9L1076 187.1L1077 186.6L1078 186.2L1079 186.9L1080 187.4L1081 188.1L1082 187.0L1083 186.9L1084 186.8L1085 186.1L1086 186.0L1087 185.3L1088 185.8L1089 186.2L1090 186.2L1091 186.4L1092 186.9L1093 188.1L1094 188.1L1095 187.1L1096 186.6L1097 186.1L1098 185.6L1099 186.3L1100 186.4L1101 187.4L1102 186.5L1103 186.0L1104 186.2L1105 186.1L1106 186.4L1107 186.7L1108 186.9L1109 188.1L1110 188.1L1111 187.0L1112 187.0L1113 186.2L1114 185.8L1115 186.3L1116 185.6L1117 185.8L1118 186.0L1119 186.2L1120 186.5L1121 186.4L1122 188.1L1123 188.1L1124 188.1L1125 188.1L1126 188.1L1127 188.1L1128 187.1L1129 187.2L1130 187.1L1131 188.1L1132 188.1L1133 188.1L1134 188.1L1135 188.1L1136 188.1L1137 188.1L1138 187.5L1139 187.0L1140 187.0L1141 186.9L1142 186.1L1143 186.2L1144 186.3L1145 186.3L1146 186.1L1147 186.1L1148 186.2L1149 186.5L1150 186.7L1151 188.1L1152 188.1L1153 188.1L1154 188.1L1155 187.2L1156 186.6L1157 185.4L1158 186.1L1159 188.1L1160 188.1L1161 187.3L1162 187.0L1163 187.1L1164 186.3L1165 186.3L1166 185.9L1167 185.6L1168 185.8L1169 185.8L1170 186.1L1171 185.9L1172 185.8L1173 186.7L1174 186.6L1175 186.4L1176 187.2L1177 188.1L1178 188.1L1179 188.1L1180 188.1L1181 188.1L1182 188.1L1183 187.3L1184 187.6L1185 187.1L1186 186.6L1187 187.2L1188 186.8L1189 187.1L1190 187.0L1191 188.1L1192 188.1L1193 188.1L1194 187.6L1195 187.0L1196 186.8L1197 187.5L1198 187.1L1199 187.1L1200 186.6L1201 186.6L1202 186.9L1203 186.9L1204 187.3L1205 188.1L1206 188.1L1207 188.1L1208 188.1L1209 188.1L1210 188.1L1211 188.1L1212 188.1L1213 186.7L1214 186.5L1215 186.6L1216 188.1L1217 188.1L1218 188.1L1219 188.1L1220 187.0L1221 187.0L1222 187.1L1223 186.2L1224 186.5L1225 186.4L1226 186.8L1227 186.6L1228 187.2L1229 188.1L1230 188.1L1231 188.1L1232 187.2L1233 186.2L1234 185.9L1235 188.1L1236 187.9L1237 186.7L1238 186.5L1239 187.3L1240 187.1L1241 187.1L1242 187.1L1243 187.2L1244 186.8L1245 186.8L1246 186.9L1247 186.9L1248 187.0L1249 187.0L1250 187.0L1251 187.0L1252 188.1L1253 188.1L1254 188.1L1255 187.4L1256 187.2L1257 186.4L1258 186.5L1259 186.6L1260 186.4L1261 185.9L1262 185.9L1263 186.1L1264 185.8L1265 186.8L1266 186.4L1267 186.5L1268 186.8L1269 188.1L1270 187.0L1271 187.3L1272 186.2L1273 186.8L1274 186.3L1275 186.1L1276 185.7L1277 186.0L1278 186.1L1279 186.6L1280 186.4L1281 188.1L1282 188.1L1283 188.1L1284 188.1L1285 188.1L1286 188.1L1287 187.2L1288 187.0L1289 186.7L1290 186.7L1291 186.7L1292 186.0L1293 186.1L1294 185.6L1295 186.0L1296 186.8L1297 186.9L1298 187.0L1299 187.1L1300 188.1L1301 188.1L1302 187.6L1303 186.9L1304 187.0L1305 186.6L1306 186.6L1307 186.3L1308 187.1L1309 188.1L1310 188.1L1311 187.4L1312 186.4L1313 186.2L1314 186.9L1315 186.0L1316 186.1L1317 185.6L1318 185.7L1319 185.6L1320 185.6L1321 186.4L1322 186.5L1323 186.7L1324 186.9L1325 186.9L1326 187.2L1327 188.1L1328 188.1L1329 187.3L1330 186.7L1331 186.5L1332 186.3L1333 185.1L1334 185.5L1335 185.9L1336 186.9L1337 188.1L1338 188.1L1339 187.3L1340 186.9L1341 187.2L1342 187.0L1343 186.6L1344 186.4L1345 186.6L1346 186.9L1347 186.6L1348 186.7L1349 187.2L1350 187.2L1351 187.1L1352 187.7L1353 187.4L1354 187.1L1355 187.2L1356 186.6L1357 187.0L1358 186.7L1359 186.4L1360 187.2L1361 187.1L1362 187.3L1363 187.1L1364 186.9L1365 188.1L1366 187.1L1367 186.5L1368 187.0L1369 186.1L1370 186.5L1371 186.3L1372 186.2L1373 185.5L1374 186.1L1375 186.4L1376 186.6L1377 186.3L1378 186.4L1379 186.8L1380 186.7L1381 188.1L1382 188.1L1383 188.1L1384 188.1L1385 187.1L1386 186.1L1387 186.5L1388 188.1L1389 188.1L1390 188.1L1391 188.1L1392 188.1L1393 188.1L1394 188.1L1395 188.1L1396 188.1L1397 188.1L1398 188.1L1399 187.0L1400 187.1L1401 186.5L1402 186.7L1403 186.3L1404 186.6L1405 186.2L1406 186.7L1407 186.8L1408 186.6L1409 187.0L1410 186.7L1411 187.5L1412 188.1L1413 188.1L1414 188.1L1415 188.1L1416 188.1L1417 188.1L1418 187.1L1419 186.9L1420 186.6L1421 187.1L1422 186.6L1423 186.6L1424 186.7L1424 189.9L1423 190.2L1422 190.4L1421 190.0L1420 190.0L1419 189.6L1418 189.8L1417 188.9L1416 188.9L1415 188.9L1414 188.9L1413 188.9L1412 188.9L1411 189.5L1410 190.2L1409 190.5L1408 190.3L1407 190.9L1406 190.5L1405 190.3L1404 190.4L1403 189.9L1402 190.4L1401 189.6L1400 190.0L1399 189.9L1398 188.9L1397 188.9L1396 188.9L1395 188.9L1394 188.9L1393 188.9L1392 188.9L1391 188.9L1390 188.9L1389 188.9L1388 188.9L1387 190.9L1386 190.7L1385 189.7L1384 188.9L1383 188.9L1382 188.9L1381 188.9L1380 189.8L1379 190.2L1378 190.3L1377 190.9L1376 190.8L1375 191.4L1374 191.3L1373 191.0L1372 191.2L1371 190.7L1370 190.9L1369 190.5L1368 190.8L1367 190.1L1366 189.6L1365 188.9L1364 189.8L1363 189.6L1362 190.0L1361 190.0L1360 189.9L1359 190.7L1358 190.1L1357 189.8L1356 189.9L1355 190.3L1354 189.4L1353 189.7L1352 189.2L1351 189.9L1350 189.6L1349 189.9L1348 190.4L1347 190.6L1346 190.0L1345 190.5L1344 190.6L1343 190.0L1342 189.6L1341 190.0L1340 189.5L1339 189.7L1338 188.9L1337 188.9L1336 190.6L1335 190.5L1334 191.3L1333 191.6L1332 190.8L1331 191.0L1330 190.0L1329 190.3L1328 188.9L1327 188.9L1326 190.2L1325 190.3L1324 190.7L1323 190.3L1322 191.0L1321 190.6L1320 191.0L1319 191.0L1318 191.6L1317 190.8L1316 190.6L1315 190.9L1314 190.2L1313 190.1L1312 190.2L1311 190.3L1310 188.9L1309 188.9L1308 190.4L1307 189.9L1306 190.4L1305 190.7L1304 190.5L1303 190.1L1302 189.4L1301 188.9L1300 188.9L1299 190.3L1298 190.3L1297 190.6L1296 191.0L1295 191.0L1294 191.0L1293 190.9L1292 190.8L1291 191.1L1290 190.3L1289 190.3L1288 189.9L1287 190.0L1286 188.9L1285 188.9L1284 188.9L1283 188.9L1282 188.9L1281 188.9L1280 190.6L1279 190.6L1278 190.5L1277 191.2L1276 190.9L1275 191.3L1274 190.7L1273 190.2L1272 190.5L1271 190.6L1270 190.1L1269 188.9L1268 190.2L1267 190.6L1266 190.8L1265 190.8L1264 191.0L1263 190.6L1262 191.5L1261 191.0L1260 191.0L1259 191.0L1258 190.5L1257 190.3L1256 189.9L1255 190.0L1254 188.9L1253 188.9L1252 188.9L1251 190.2L1250 190.0L1249 190.1L1248 190.4L1247 190.0L1246 190.7L1245 190.3L1244 190.3L1243 190.0L1242 190.1L1241 189.5L1240 189.7L1239 189.7L1238 190.1L1237 189.6L1236 189.9L1235 188.9L1234 190.6L1233 191.2L1232 189.9L1231 188.9L1230 188.9L1229 188.9L1228 190.3L1227 189.9L1226 190.9L1225 191.0L1224 191.1L1223 190.4L1222 190.0L1221 190.5L1220 190.2L1219 188.9L1218 188.9L1217 188.9L1216 188.9L1215 190.8L1214 190.8L1213 189.9L1212 188.9L1211 188.9L1210 188.9L1209 188.9L1208 188.9L1207 188.9L1206 188.9L1205 188.9L1204 190.0L1203 189.6L1202 189.8L1201 190.3L1200 190.0L1199 189.8L1198 190.2L1197 189.6L1196 190.0L1195 189.9L1194 189.9L1193 188.9L1192 188.9L1191 188.9L1190 189.3L1189 190.2L1188 189.7L1187 189.9L1186 190.3L1185 190.0L1184 189.9L1183 189.1L1182 188.9L1181 188.9L1180 188.9L1179 188.9L1178 188.9L1177 188.9L1176 189.9L1175 190.5L1174 190.1L1173 190.9L1172 191.0L1171 191.3L1170 190.8L1169 191.5L1168 191.4L1167 190.6L1166 190.8L1165 190.6L1164 190.5L1163 190.8L1162 190.1L1161 190.1L1160 188.9L1159 188.9L1158 191.2L1157 191.8L1156 190.9L1155 190.4L1154 188.9L1153 188.9L1152 188.9L1151 188.9L1150 189.8L1149 190.2L1148 190.2L1147 190.7L1146 190.9L1145 190.9L1144 190.7L1143 190.7L1142 190.4L1141 190.7L1140 190.2L1139 190.1L1138 190.1L1137 188.9L1136 188.9L1135 188.9L1134 188.9L1133 188.9L1132 188.9L1131 188.9L1130 190.0L1129 189.7L1128 189.2L1127 188.9L1126 188.9L1125 188.9L1124 188.9L1123 188.9L1122 188.9L1121 190.1L1120 190.8L1119 190.4L1118 190.8L1117 191.2L1116 191.1L1115 191.0L1114 190.7L1113 190.6L1112 190.7L1111 190.0L1110 188.9L1109 188.9L1108 190.7L1107 190.7L1106 190.7L1105 191.5L1104 190.7L1103 190.4L1102 190.2L1101 190.3L1100 189.8L1099 190.6L1098 190.8L1097 190.3L1096 190.6L1095 189.5L1094 188.9L1093 188.9L1092 190.6L1091 190.5L1090 190.8L1089 191.2L1088 191.6L1087 191.6L1086 190.8L1085 191.3L1084 191.0L1083 190.1L1082 190.0L1081 188.9L1080 189.9L1079 190.5L1078 190.0L1077 190.1L1076 190.3L1075 189.6L1074 189.4L1073 188.9L1072 188.9L1071 189.8L1070 189.8L1069 190.1L1068 191.0L1067 190.4L1066 190.0L1065 189.6L1064 189.9L1063 189.8L1062 189.8L1061 190.8L1060 191.0L1059 190.9L1058 190.4L1057 190.4L1056 190.2L1055 189.9L1054 190.1L1053 190.0L1052 188.9L1051 190.2L1050 190.5L1049 190.3L1048 190.5L1047 190.6L1046 191.2L1045 190.5L1044 190.6L1043 190.9L1042 190.8L1041 190.3L1040 190.6L1039 190.1L1038 189.9L1037 190.1L1036 190.3L1035 190.2L1034 190.1L1033 190.4L1032 190.0L1031 190.0L1030 190.2L1029 190.4L1028 190.5L1027 190.8L1026 190.4L1025 190.4L1024 189.6L1023 189.5L1022 189.9L1021 188.9L1020 188.9L1019 188.9L1018 188.9L1017 188.9L1016 188.9L1015 188.9L1014 188.9L1013 190.9L1012 190.8L1011 190.0L1010 188.9L1009 188.9L1008 188.9L1007 188.9L1006 188.9L1005 188.9L1004 188.9L1003 188.9L1002 188.9L1001 188.9L1000 188.9L999 188.9L998 188.9L997 188.9L996 188.9L995 188.9L994 188.9L993 188.9L992 188.9L991 188.9L990 188.9L989 188.9L988 188.9L987 188.9L986 188.9L985 188.9L984 188.9L983 188.9L982 188.9L981 188.9L980 188.9L979 188.9L978 188.9L977 188.9L976 188.9L975 188.9L974 188.9L973 188.9L972 188.9L971 188.9L970 188.9L969 188.9L968 188.9L967 188.9L966 188.9L965 188.9L964 188.9L963 188.9L962 188.9L961 188.9L960 188.9L959 188.9L958 188.9L957 188.9L956 188.9L955 188.9L954 188.9L953 188.9L952 188.9L951 188.9L950 188.9L949 188.9L948 188.9L947 188.9L946 188.9L945 188.9L944 188.9L943 188.9L942 188.9L941 188.9L940 188.9L939 188.9L938 190.1L937 190.8L936 190.6L935 191.2L934 191.9L933 191.5L932 191.8L931 191.3L930 191.1L929 191.2L928 190.5L927 190.6L926 190.5L925 190.8L924 191.6L923 191.2L922 190.9L921 190.2L920 190.1L919 188.9L918 188.9L917 188.9L916 188.9L915 188.9L914 188.9L913 188.9L912 188.9L911 188.9L910 188.9L909 188.9L908 188.9L907 188.9L906 190.2L905 190.2L904 191.0L903 191.1L902 191.2L901 191.7L900 191.8L899 191.3L898 191.1L897 190.7L896 190.4L895 190.9L894 190.5L893 190.1L892 188.9L891 188.9L890 188.9L889 188.9L888 188.9L887 188.9L886 188.9L885 188.9L884 188.9L883 188.9L882 188.9L881 188.9L880 188.9L879 188.9L878 188.9L877 188.9L876 188.9L875 188.9L874 188.9L873 188.9L872 188.9L871 188.9L870 188.9L869 188.9L868 188.9L867 188.9L866 188.9L865 188.9L864 188.9L863 188.9L862 188.9L861 188.9L860 188.9L859 188.9L858 188.9L857 188.9L856 188.9L855 188.9L854 188.9L853 188.9L852 188.9L851 189.5L850 189.4L849 189.3L848 189.4L847 189.8L846 190.1L845 189.6L844 190.0L843 189.9L842 190.1L841 190.1L840 189.7L839 189.7L838 189.4L837 189.5L836 188.9L835 188.9L834 188.9L833 188.9L832 188.9L831 188.9L830 188.9L829 188.9L828 188.9L827 188.9L826 188.9L825 188.9L824 188.9L823 188.9L822 188.9L821 188.9L820 188.9L819 188.9L818 188.9L817 190.1L816 191.1L815 190.1L814 189.4L813 188.9L812 188.9L811 188.9L810 188.9L809 188.9L808 188.9L807 188.9L806 188.9L805 188.9L804 188.9L803 188.9L802 188.9L801 188.9L800 188.9L799 188.9L798 188.9L797 188.9L796 188.9L795 188.9L794 188.9L793 188.9L792 188.9L791 188.9L790 188.9L789 188.9L788 188.9L787 188.9L786 188.9L785 188.9L784 188.9L783 188.9L782 188.9L781 188.9L780 188.9L779 188.9L778 188.9L777 188.9L776 188.9L775 188.9L774 188.9L773 190.2L772 190.2L771 190.5L770 190.0L769 190.1L768 190.4L767 190.6L766 189.9L765 190.2L764 189.5L763 189.5L762 188.9L761 188.9L760 188.9L759 188.9L758 188.9L757 188.9L756 188.9L755 188.9L754 188.9L753 188.9L752 188.9L751 188.9L750 188.9L749 188.9L748 188.9L747 188.9L746 188.9L745 188.9L744 188.9L743 188.9L742 188.9L741 188.9L740 188.9L739 188.9L738 188.9L737 188.9L736 188.9L735 188.9L734 188.9L733 188.9L732 188.9L731 188.9L730 188.9L729 188.9L728 188.9L727 188.9L726 188.9L725 190.7L724 191.5L723 191.8L722 191.1L721 190.6L720 190.7L719 188.9L718 188.9L717 188.9L716 188.9L715 188.9L714 188.9L713 188.9L712 188.9L711 188.9L710 188.9L709 188.9L708 188.9L707 188.9L706 188.9L705 188.9L704 188.9L703 188.9L702 188.9L701 188.9L700 188.9L699 188.9L698 188.9L697 188.9L696 188.9L695 188.9L694 188.9L693 188.9L692 188.9L691 188.9L690 188.9L689 188.9L688 188.9L687 188.9L686 188.9L685 188.9L684 188.9L683 188.9L682 188.9L681 188.9L680 188.9L679 188.9L678 188.9L677 188.9L676 188.9L675 188.9L674 188.9L673 188.9L672 188.9L671 188.9L670 188.9L669 188.9L668 188.9L667 188.9L666 188.9L665 188.9L664 188.9L663 188.9L662 188.9L661 188.9L660 188.9L659 188.9L658 188.9L657 188.9L656 188.9L655 188.9L654 188.9L653 188.9L652 188.9L651 188.9L650 188.9L649 188.9L648 188.9L647 188.9L646 188.9L645 188.9L644 188.9L643 188.9L642 188.9L641 188.9L640 188.9L639 189.7L638 189.2L637 189.8L636 189.9L635 189.9L634 189.8L633 189.8L632 189.7L631 190.0L630 190.0L629 189.3L628 189.6L627 189.2L626 188.9L625 188.9L624 188.9L623 188.9L622 188.9L621 190.9L620 190.6L619 191.7L618 191.5L617 191.2L616 191.3L615 190.8L614 190.2L613 190.1L612 188.9L611 188.9L610 188.9L609 188.9L608 188.9L607 188.9L606 188.9L605 188.9L604 188.9L603 188.9L602 188.9L601 188.9L600 188.9L599 188.9L598 188.9L597 188.9L596 188.9L595 188.9Z" fill="#8c1646" stroke="#000" stroke-width=".8"/><path d="M595 188.5H1424" stroke="#000" stroke-width="1.4"/><path d="M566 218.9L567 219.7L568 220.1L569 220.0L570 219.1L571 219.9L572 220.5L573 220.7L574 220.0L575 219.1L576 219.7L577 219.5L578 219.7L579 219.5L580 219.7L581 220.5L582 219.8L583 220.1L584 219.7L585 219.6L586 219.6L587 220.6L588 220.1L589 220.1L590 219.7L591 219.4L592 219.5L593 220.3L594 219.7L595 219.2L596 219.2L597 219.8L598 220.2L599 219.9L600 218.8L601 219.7L602 219.1L603 219.8L604 220.3L605 219.9L606 221.0L607 220.7L608 221.0L609 220.4L610 219.7L611 219.4L612 219.1L613 219.6L614 219.6L615 219.5L616 219.4L617 219.3L618 219.2L619 219.7L620 219.3L621 218.8L622 219.6L623 219.4L624 220.9L625 221.0L626 221.0L627 221.0L628 218.8L629 218.9L630 219.2L631 219.1L632 219.0L633 220.0L634 221.0L635 220.8L636 220.7L637 220.8L638 218.9L639 218.9L640 218.7L641 218.4L642 218.0L643 218.2L644 218.3L644 225.2L643 226.0L642 225.9L641 226.4L640 226.1L639 224.8L638 224.6L637 222.7L636 222.3L635 222.6L634 222.2L633 223.9L632 223.9L631 224.1L630 225.2L629 225.5L628 225.1L627 222.3L626 222.8L625 222.5L624 222.0L623 225.1L622 225.4L621 224.8L620 224.3L619 224.6L618 224.6L617 224.8L616 224.8L615 224.2L614 223.7L613 223.9L612 224.7L611 225.3L610 224.5L609 223.2L608 222.6L607 222.1L606 222.5L605 223.8L604 224.5L603 223.9L602 223.9L601 223.6L600 225.1L599 224.8L598 223.2L597 224.7L596 224.5L595 224.6L594 224.2L593 223.7L592 223.4L591 223.6L590 223.8L589 224.1L588 223.7L587 223.5L586 224.1L585 223.1L584 223.3L583 223.3L582 223.0L581 223.2L580 224.0L579 224.1L578 225.0L577 224.1L576 224.4L575 223.9L574 224.1L573 223.5L572 223.3L571 223.9L570 224.4L569 224.0L568 224.3L567 224.1L566 225.2Z" fill="#8a1a70" stroke="#000" stroke-width="1"/><path d="M864 262.0L865 261.7L866 261.8L867 261.4L868 260.8L869 261.2L870 261.4L871 261.5L872 261.0L873 261.0L874 261.9L875 261.3L876 261.6L877 261.4L878 260.9L879 261.5L880 261.8L881 261.5L882 262.6L883 262.3L884 262.7L885 262.2L886 260.7L887 260.3L888 260.9L889 261.0L890 260.6L891 260.4L892 260.6L893 261.2L894 260.9L895 261.2L896 261.1L897 260.7L898 261.6L899 260.8L900 260.5L901 260.8L902 261.6L903 262.1L904 261.4L905 262.4L906 262.0L907 261.1L908 261.9L909 262.2L910 261.4L911 261.7L912 262.5L913 262.4L914 263.0L915 262.4L916 262.1L917 262.1L918 261.9L919 262.6L920 262.8L921 261.8L922 261.8L923 262.0L924 262.0L925 262.1L926 261.3L927 260.8L928 261.3L928 266.7L927 266.6L926 266.1L925 266.6L924 266.0L923 266.1L922 266.7L921 265.8L920 264.4L919 264.0L918 266.1L917 265.7L916 265.4L915 264.7L914 264.4L913 265.6L912 264.7L911 266.1L910 266.2L909 266.1L908 266.1L907 266.7L906 266.4L905 265.4L904 266.5L903 266.7L902 266.9L901 267.1L900 266.7L899 267.1L898 267.1L897 266.6L896 267.1L895 266.1L894 266.3L893 267.2L892 267.9L891 268.3L890 267.9L889 267.8L888 266.9L887 267.4L886 267.0L885 266.0L884 265.4L883 264.7L882 265.6L881 266.0L880 266.0L879 266.4L878 266.9L877 267.3L876 266.3L875 266.6L874 265.7L873 267.2L872 267.0L871 267.2L870 266.9L869 266.9L868 267.8L867 266.6L866 265.7L865 266.3L864 265.9Z" fill="#7e1c92" stroke="#000" stroke-width="1"/><path d="M913.5 255.5l2.5 4 3.500-7 3.500 7 3.500-4.500" fill="none" stroke="#0c0c10" stroke-width="1.500" stroke-linejoin="round"/><path d="M1001 261.5L1002 261.2L1003 260.5L1004 261.1L1005 260.9L1006 260.3L1007 261.1L1008 260.5L1009 261.5L1010 260.9L1011 261.0L1012 261.0L1013 260.6L1014 261.6L1015 261.7L1016 260.9L1017 261.4L1018 261.6L1019 262.5L1020 262.6L1021 261.6L1022 262.1L1023 262.6L1024 263.0L1025 260.8L1026 260.9L1027 260.3L1028 261.3L1029 261.1L1030 260.6L1031 261.2L1032 261.3L1033 262.4L1034 262.3L1035 262.1L1036 261.4L1037 260.7L1038 261.2L1039 261.0L1040 260.3L1041 260.7L1042 261.1L1043 262.2L1044 261.7L1045 263.0L1046 262.6L1047 261.8L1048 261.0L1049 261.3L1050 261.3L1051 260.9L1052 260.3L1053 260.7L1054 261.1L1055 261.1L1056 260.0L1057 260.7L1058 262.7L1059 262.9L1060 263.0L1061 263.0L1062 262.8L1063 260.3L1064 260.8L1065 261.0L1066 261.5L1067 261.7L1068 262.0L1069 261.2L1070 261.2L1071 261.4L1072 260.7L1073 261.0L1074 263.0L1075 263.0L1076 262.8L1077 262.9L1078 261.7L1079 261.2L1080 261.7L1081 261.3L1082 261.5L1083 260.9L1084 260.9L1085 261.1L1086 261.7L1087 262.2L1088 262.6L1089 262.9L1090 261.1L1091 262.1L1092 262.0L1093 261.2L1094 260.3L1095 260.4L1096 261.1L1097 261.9L1098 261.2L1099 262.7L1100 263.0L1101 262.8L1102 263.0L1103 263.0L1104 262.9L1105 262.7L1106 262.6L1107 261.8L1108 261.3L1109 262.1L1110 262.0L1111 261.0L1112 261.9L1113 261.2L1114 261.4L1115 262.1L1116 261.7L1117 261.0L1118 261.3L1119 260.8L1120 262.0L1121 261.7L1122 260.7L1123 261.6L1124 261.2L1125 261.1L1126 260.6L1127 260.8L1128 260.8L1129 260.0L1130 263.0L1131 263.0L1132 262.9L1133 260.4L1134 260.7L1135 260.6L1136 260.3L1137 260.3L1138 260.6L1139 260.6L1140 261.2L1141 261.0L1142 261.8L1143 261.2L1144 263.0L1145 263.0L1146 262.6L1147 263.0L1148 263.0L1149 261.7L1150 263.0L1151 262.8L1152 262.9L1153 263.0L1154 261.4L1155 261.8L1156 261.8L1157 261.1L1158 261.0L1159 261.1L1160 260.7L1161 260.9L1162 261.6L1163 260.8L1164 260.8L1165 261.3L1166 261.2L1167 260.9L1168 261.6L1169 262.0L1170 260.9L1171 261.8L1172 262.0L1173 262.0L1174 262.1L1175 262.6L1176 262.4L1177 263.0L1178 262.8L1179 262.6L1180 262.0L1181 261.8L1182 261.9L1183 262.0L1184 261.8L1185 261.9L1186 261.5L1187 261.6L1188 261.9L1189 262.6L1190 262.2L1191 262.2L1192 262.1L1193 261.5L1194 261.3L1195 261.3L1196 260.9L1197 261.0L1198 260.8L1199 262.0L1200 261.7L1201 262.0L1202 262.1L1203 262.6L1204 262.6L1205 261.6L1206 261.4L1207 261.5L1208 261.3L1209 261.0L1210 261.2L1211 260.8L1212 262.6L1213 262.8L1214 263.0L1215 262.9L1216 263.0L1217 260.8L1218 261.0L1219 261.3L1220 261.3L1221 261.5L1222 261.7L1223 262.4L1224 262.0L1225 261.7L1226 261.2L1227 261.4L1228 260.9L1229 263.0L1230 263.0L1231 262.9L1232 263.0L1233 261.5L1233 267.1L1232 264.7L1231 264.5L1230 264.5L1229 264.7L1228 267.0L1227 267.3L1226 266.3L1225 266.0L1224 265.8L1223 265.9L1222 266.7L1221 266.4L1220 266.0L1219 266.6L1218 267.6L1217 267.5L1216 264.3L1215 264.0L1214 264.5L1213 264.0L1212 264.0L1211 266.5L1210 267.8L1209 267.9L1208 267.4L1207 266.1L1206 265.9L1205 266.1L1204 266.0L1203 264.6L1202 265.3L1201 265.0L1200 266.0L1199 265.7L1198 266.8L1197 267.3L1196 267.2L1195 265.7L1194 266.4L1193 265.2L1192 265.4L1191 264.8L1190 265.2L1189 264.7L1188 264.7L1187 266.2L1186 266.0L1185 266.3L1184 265.9L1183 266.2L1182 265.8L1181 266.1L1180 264.5L1179 265.4L1178 265.1L1177 264.9L1176 264.8L1175 265.3L1174 264.6L1173 265.8L1172 265.2L1171 266.2L1170 267.3L1169 265.7L1168 266.8L1167 266.2L1166 266.5L1165 266.6L1164 267.5L1163 266.9L1162 267.0L1161 267.0L1160 266.8L1159 267.2L1158 266.1L1157 266.2L1156 265.6L1155 266.9L1154 266.8L1153 264.0L1152 264.0L1151 264.5L1150 264.3L1149 267.1L1148 264.5L1147 264.0L1146 264.0L1145 264.8L1144 264.0L1143 265.8L1142 266.7L1141 267.2L1140 266.7L1139 267.5L1138 268.2L1137 268.3L1136 267.2L1135 268.1L1134 268.0L1133 267.4L1132 264.1L1131 264.0L1130 264.4L1129 267.6L1128 267.8L1127 267.9L1126 267.4L1125 266.8L1124 266.2L1123 265.9L1122 266.5L1121 266.6L1120 265.5L1119 266.5L1118 267.3L1117 266.9L1116 266.1L1115 266.2L1114 266.6L1113 267.5L1112 266.4L1111 266.2L1110 265.4L1109 266.0L1108 266.5L1107 264.7L1106 264.9L1105 265.3L1104 265.5L1103 264.0L1102 264.0L1101 264.3L1100 264.0L1099 264.0L1098 266.2L1097 266.8L1096 267.5L1095 267.3L1094 267.8L1093 266.7L1092 266.8L1091 266.5L1090 267.0L1089 264.7L1088 264.0L1087 265.3L1086 265.5L1085 266.6L1084 267.1L1083 266.0L1082 266.1L1081 267.0L1080 266.4L1079 266.8L1078 267.0L1077 264.8L1076 264.1L1075 264.5L1074 264.0L1073 266.5L1072 266.9L1071 266.9L1070 266.6L1069 266.6L1068 266.0L1067 265.9L1066 266.5L1065 266.5L1064 267.7L1063 267.8L1062 264.0L1061 264.0L1060 264.0L1059 264.3L1058 264.4L1057 268.6L1056 267.3L1055 266.7L1054 266.4L1053 267.3L1052 268.1L1051 267.7L1050 267.4L1049 266.8L1048 267.4L1047 266.4L1046 264.2L1045 264.0L1044 265.5L1043 266.3L1042 266.3L1041 266.9L1040 267.5L1039 267.6L1038 266.4L1037 266.7L1036 266.3L1035 265.6L1034 265.3L1033 265.4L1032 266.5L1031 267.1L1030 267.0L1029 267.0L1028 267.3L1027 267.5L1026 268.3L1025 266.6L1024 264.7L1023 264.5L1022 266.2L1021 266.1L1020 264.5L1019 265.2L1018 265.6L1017 266.2L1016 266.8L1015 266.8L1014 266.6L1013 266.4L1012 267.3L1011 267.6L1010 266.2L1009 267.4L1008 267.0L1007 267.5L1006 268.1L1005 267.4L1004 266.7L1003 267.9L1002 266.8L1001 267.1Z" fill="#7e1c92" stroke="#000" stroke-width="1"/><path d="M1218.5 255.5l2.5 4 3.500-7 3.500 7 3.500-4.500" fill="none" stroke="#0c0c10" stroke-width="1.500" stroke-linejoin="round"/><path d="M728 303.8L729 304.5L730 303.4L731 304.0L732 303.8L733 303.1L734 303.9L735 305.0L736 305.0L737 304.9L738 303.5L739 302.9L740 303.2L741 302.8L742 303.8L743 303.7L744 303.8L745 305.0L746 305.0L747 303.3L748 303.9L749 303.5L750 303.7L751 304.6L752 305.0L753 305.0L754 305.0L755 305.0L756 302.8L757 303.1L758 303.4L759 303.7L760 303.7L761 304.4L762 303.9L763 303.1L764 303.4L765 302.7L766 302.6L767 303.3L768 302.4L769 303.4L770 304.1L771 303.7L772 304.8L773 304.3L774 304.0L775 304.0L776 303.1L777 303.1L778 303.5L779 303.3L780 303.0L781 303.0L782 303.4L783 303.6L784 304.3L785 303.8L786 303.2L787 303.5L788 302.8L789 302.4L790 302.6L791 303.4L792 303.6L793 303.0L794 303.5L795 304.4L796 304.2L797 304.1L798 303.8L799 303.9L800 304.1L801 304.0L802 304.6L803 303.9L804 304.1L805 304.6L806 304.4L807 304.8L808 305.0L809 305.0L810 303.6L811 304.0L812 304.1L813 304.2L814 303.1L815 302.9L816 303.3L817 303.2L818 304.6L819 305.0L820 305.0L821 304.6L822 302.7L823 303.7L824 303.3L825 303.3L826 304.9L827 304.8L828 305.0L829 305.0L830 305.0L831 302.9L832 303.7L833 303.6L834 303.4L835 305.0L836 305.0L837 305.0L838 304.6L839 305.0L840 304.4L841 304.0L842 304.1L843 304.4L844 304.5L845 304.8L846 303.8L847 305.0L848 305.0L849 304.6L850 303.7L851 304.7L852 304.9L853 304.9L854 304.9L855 304.6L856 303.6L857 303.0L858 303.8L859 303.3L860 302.7L861 302.5L862 302.3L863 302.4L864 302.4L865 302.2L865 310.5L864 309.3L863 309.3L862 309.9L861 309.9L860 308.4L859 308.7L858 308.4L857 308.6L856 308.1L855 306.7L854 306.8L853 306.0L852 306.0L851 306.3L850 307.7L849 306.0L848 306.3L847 306.7L846 308.3L845 307.2L844 306.9L843 307.9L842 307.9L841 307.4L840 307.1L839 306.0L838 306.4L837 306.0L836 306.1L835 306.0L834 308.1L833 308.2L832 309.0L831 309.5L830 306.4L829 306.0L828 306.2L827 306.2L826 306.0L825 308.5L824 308.3L823 309.0L822 309.5L821 306.0L820 306.2L819 306.0L818 306.0L817 309.0L816 308.5L815 309.1L814 308.1L813 307.5L812 307.7L811 307.9L810 308.2L809 306.6L808 306.5L807 306.0L806 306.4L805 306.5L804 307.5L803 307.2L802 307.0L801 308.0L800 307.7L799 308.3L798 308.6L797 307.6L796 306.7L795 307.9L794 307.6L793 308.8L792 308.8L791 308.8L790 308.7L789 309.0L788 309.1L787 307.7L786 308.7L785 308.0L784 307.4L783 308.3L782 308.6L781 308.1L780 308.3L779 309.0L778 308.8L777 308.7L776 307.9L775 308.1L774 307.4L773 308.3L772 307.5L771 307.1L770 308.5L769 308.5L768 309.5L767 308.5L766 308.4L765 309.1L764 308.9L763 307.9L762 307.9L761 307.0L760 308.2L759 309.0L758 308.6L757 309.8L756 309.0L755 306.0L754 306.0L753 306.0L752 306.0L751 306.0L750 308.6L749 308.7L748 308.0L747 308.4L746 306.0L745 306.0L744 308.9L743 308.6L742 308.1L741 308.2L740 309.9L739 309.6L738 308.8L737 306.0L736 306.0L735 306.4L734 307.7L733 307.7L732 307.8L731 307.5L730 308.1L729 307.4L728 306.9Z" fill="#6420a8" stroke="#000" stroke-width="1"/><path d="M850.5 297.5l2.5 4 3.500-7 3.500 7 3.500-4.500" fill="none" stroke="#0c0c10" stroke-width="1.500" stroke-linejoin="round"/><path d="M935 304.3L936 304.2L937 304.5L938 304.5L939 304.7L940 304.6L941 303.8L942 304.0L943 303.4L944 303.9L945 303.5L946 303.5L947 302.1L948 305.0L949 305.0L950 304.7L951 304.6L952 305.0L953 303.6L954 303.9L955 304.0L956 303.1L957 304.1L958 303.4L959 302.9L959 309.3L958 308.9L957 308.7L956 308.6L955 307.8L954 307.5L953 308.6L952 306.0L951 306.4L950 306.4L949 306.0L948 306.0L947 309.6L946 308.8L945 309.0L944 308.0L943 307.7L942 307.4L941 308.8L940 306.9L939 307.6L938 307.1L937 307.3L936 307.0L935 307.3Z" fill="#6420a8" stroke="#000" stroke-width="1"/><path d="M970 303.7L971 304.1L972 303.6L973 303.0L974 302.5L975 302.9L976 303.5L977 303.2L978 303.3L979 303.7L980 303.5L981 303.9L982 304.5L983 304.0L984 303.7L985 303.5L986 304.5L987 304.4L988 304.1L989 303.8L990 305.0L991 305.0L992 305.0L993 304.9L994 305.0L995 302.3L996 304.6L997 305.0L998 304.8L999 302.6L999 310.4L998 306.4L997 306.0L996 306.0L995 309.0L994 306.1L993 306.2L992 306.0L991 306.0L990 306.0L989 307.8L988 307.6L987 307.8L986 307.5L985 307.3L984 307.9L983 308.4L982 307.1L981 307.7L980 308.4L979 309.1L978 308.2L977 307.8L976 308.3L975 310.0L974 309.1L973 309.1L972 308.5L971 308.2L970 308.7Z" fill="#6420a8" stroke="#000" stroke-width="1"/><path d="M1244 303.3L1245 303.5L1246 303.3L1247 303.6L1248 304.3L1249 303.8L1250 304.1L1251 303.7L1252 303.2L1253 303.3L1254 303.1L1255 303.5L1256 303.9L1257 303.7L1258 304.0L1259 304.7L1260 303.9L1261 303.7L1262 303.4L1263 303.8L1264 303.7L1265 302.9L1266 303.3L1267 302.5L1268 303.4L1269 303.0L1270 302.9L1271 303.2L1272 303.6L1273 303.3L1273 308.4L1272 308.4L1271 308.6L1270 308.9L1269 309.6L1268 309.0L1267 309.0L1266 309.6L1265 308.4L1264 308.5L1263 308.4L1262 307.6L1261 308.3L1260 306.9L1259 307.8L1258 307.5L1257 308.0L1256 307.9L1255 307.7L1254 308.8L1253 308.1L1252 308.8L1251 308.1L1250 307.0L1249 307.6L1248 307.6L1247 308.1L1246 308.5L1245 308.6L1244 309.0Z" fill="#6420a8" stroke="#000" stroke-width="1"/><path d="M1120.5 381.5l2.5 4 3.500-7 3.500 7 3.500-4.500" fill="none" stroke="#0c0c10" stroke-width="1.500" stroke-linejoin="round"/><path d="M1120.5 423.5l2.5 4 3.500-7 3.500 7 3.500-4.500" fill="none" stroke="#0c0c10" stroke-width="1.500" stroke-linejoin="round"/><path d="M1120.5 465.5l2.5 4 3.500-7 3.500 7 3.500-4.500" fill="none" stroke="#0c0c10" stroke-width="1.500" stroke-linejoin="round"/></g><rect x="560" y="113" width="1" height="865" fill="#f4f4f4"/><rect x="561" y="113" width="2" height="865" fill="#050505"/><rect x="563" y="113" width="1" height="865" fill="#f4f4f4"/><g shape-rendering="geometricPrecision"><path d="M564 113h7.500l-7.500 9z" fill="#fff"/><path d="M1419.500 113h9.500v9.500z" fill="#fff"/></g></svg><div class="t ev" style="left:596.5px;top:163px;width:830.5px;color:#fff">פלייבק דעת תורה</div><div class="t ev" style="left:568.5px;top:205px;width:77.5px;color:#14141c">24_1 שירה</div><div class="t ev" style="left:866.5px;top:247px;width:63.5px;color:#14141c">10_1 רה</div><div class="t ev" style="left:1003.5px;top:247px;width:231.5px;color:#14141c">14_1 שירה</div><div class="t ev" style="left:730.5px;top:289px;width:136.5px;color:#14141c">05_1 שירה</div><div class="t ev" style="left:1246.5px;top:289px;width:28.5px;color:#14141c">20_1 ה</div><div class="t ev" style="left:1002.5px;top:331px;width:134.5px;color:#14141c">1 שירה (D)_07</div><div class="t ev" style="left:1002.5px;top:373px;width:134.5px;color:#14141c">1 שירה (D)_06</div><div class="t ev" style="left:1002.5px;top:415px;width:134.5px;color:#14141c">1 שירה (D)_05</div><div class="t ev" style="left:1002.5px;top:457px;width:134.5px;color:#14141c">1 שירה (D)_03</div><div class="t ev" style="left:717.5px;top:499px;width:109.5px;color:#14141c">1 שירה (D)_19</div><div class="t ev" style="left:834.5px;top:499px;width:35.5px;color:#14141c">1 שירה</div><div class="t ev" style="left:1039.5px;top:499px;width:38.5px;color:#14141c">1 שירה</div><div class="t ev" style="left:1137.5px;top:499px;width:102.5px;color:#14141c">1 שירה (D)_04</div><div class="t ev" style="left:717.5px;top:541px;width:108.5px;color:#14141c">1 שירה (D)_18</div><div class="t ev" style="left:834.5px;top:541px;width:35.5px;color:#14141c">1 שירה</div><div class="t ev" style="left:1038.5px;top:541px;width:39.5px;color:#14141c">1 שירה</div><div class="t ev" style="left:1134.5px;top:541px;width:105.5px;color:#14141c">1 שירה (D)_61</div><div class="t ev" style="left:717.5px;top:583px;width:109.5px;color:#14141c">1 שירה (D)_17</div><div class="t ev" style="left:835.5px;top:583px;width:34.5px;color:#14141c">1 שירה</div><div class="t ev" style="left:1038.5px;top:583px;width:38.5px;color:#14141c">1 שירה</div><div class="t ev" style="left:1135.5px;top:583px;width:107.5px;color:#14141c">1 שירה (D)_59</div><div class="t ev" style="left:717.5px;top:625px;width:109.5px;color:#14141c">1 שירה (D)_16</div><div class="t ev" style="left:834.5px;top:625px;width:35.5px;color:#14141c">1 שירה</div><div class="t ev" style="left:1037.5px;top:625px;width:38.5px;color:#14141c">1 שירה</div><div class="t ev" style="left:1135.5px;top:625px;width:109.5px;color:#14141c">1 שירה (D)_58</div><div class="t ev" style="left:863.5px;top:667px;width:140.5px;color:#14141c">1 שירה (D)_36</div><div class="t ev" style="left:1073.5px;top:667px;width:70.5px;color:#14141c">1 שירה (D)_56</div><div class="t ev" style="left:864.5px;top:709px;width:138.5px;color:#14141c">1 שירה (D)_33</div><div class="t ev" style="left:1073.5px;top:709px;width:69.5px;color:#14141c">1 שירה (D)_55</div><div class="t ev" style="left:863.5px;top:751px;width:140.5px;color:#14141c">1 שירה (D)_32</div><div class="t ev" style="left:1074.5px;top:751px;width:67.5px;color:#14141c">1 שירה (D)_54</div><div class="t ev" style="left:863.5px;top:793px;width:140.5px;color:#14141c">1 שירה (D)_28</div><div class="t ev" style="left:1074.5px;top:793px;width:67.5px;color:#14141c">1 שירה (D)_53</div><div class="a" style="left:564px;top:113px;width:865px;height:25px;overflow:hidden"><div class="t" style="left:3px;top:12px;font-size:11px;color:#16161a">0</div><div class="t" style="left:125px;top:12px;font-size:11px;color:#16161a">10</div><div class="t" style="left:246px;top:12px;font-size:11px;color:#16161a">20</div><div class="t" style="left:368px;top:12px;font-size:11px;color:#16161a">30</div><div class="t" style="left:489px;top:12px;font-size:11px;color:#16161a">40</div><div class="t" style="left:611px;top:12px;font-size:11px;color:#16161a">50</div><div class="t" style="left:732px;top:12px;font-size:11px;color:#16161a">1:00</div><div class="t" style="left:854px;top:12px;font-size:11px;color:#16161a">1:10</div><div class="t" style="left:975px;top:12px;font-size:11px;color:#16161a">1:20</div></div><div class="a" style="left:1429px;top:113px;width:211px;height:25px;overflow:hidden"><div class="t" style="left:-862px;top:12px;font-size:11px;color:#fff">0</div><div class="t" style="left:-740px;top:12px;font-size:11px;color:#fff">10</div><div class="t" style="left:-619px;top:12px;font-size:11px;color:#fff">20</div><div class="t" style="left:-497px;top:12px;font-size:11px;color:#fff">30</div><div class="t" style="left:-376px;top:12px;font-size:11px;color:#fff">40</div><div class="t" style="left:-254px;top:12px;font-size:11px;color:#fff">50</div><div class="t" style="left:-133px;top:12px;font-size:11px;color:#fff">1:00</div><div class="t" style="left:-11px;top:12px;font-size:11px;color:#fff">1:10</div><div class="t" style="left:110px;top:12px;font-size:11px;color:#fff">1:20</div></div><svg style="left:0px;top:0px" width="1920" height="1042" viewBox="0 0 1920 1042" ><rect x="1642" y="119" width="12" height="13" rx="1.500" fill="#8c8e92"/><path d="M1644.500 123.500h7l-3.500 5z" fill="#1c1d21"/><path d="M1643 149.500l7.500-6.500" stroke="#9a9da0" stroke-width="1.300"/><path d="M1645.500 159v42M1645.500 230v639" stroke="#9a9da0" stroke-width="1"/><circle cx="1645.500" cy="205" r="3" fill="#b4b6b9"/><path d="M1641.500 889h8l-4 5z" fill="#9a9da0"/><path d="M1643 904.500h5" stroke="#9a9da0" stroke-width="1"/><path d="M1645.500 908v57" stroke="#9a9da0" stroke-width="1"/><circle cx="1645.500" cy="918" r="3" fill="#b4b6b9"/><path d="M1642.500 971.500h6M1645.500 968.500v6" stroke="#9a9da0" stroke-width="1"/><path d="M572 985.500h945" stroke="#6c6f73" stroke-width="1"/><rect x="572" y="983.500" width="139" height="4" rx="2" fill="#c9cacc"/><path d="M1537.500 983h8l-4 5z" fill="#9a9da0"/><path d="M1555 985.500h5" stroke="#9a9da0" stroke-width="1"/><path d="M1566 985.500h46" stroke="#9a9da0" stroke-width="1"/><circle cx="1581" cy="985.500" r="3" fill="#b4b6b9"/><path d="M1621 985.500h6M1624 982.500v6" stroke="#9a9da0" stroke-width="1"/></svg><div class="t" style="left:1683px;top:113px;font-size:12.5px;color:#e4e4e4;font-weight:bold;letter-spacing:-0.64px;">VSTi</div><div class="t" style="left:1743px;top:113px;font-size:12.5px;color:#e4e4e4;font-weight:bold;letter-spacing:-0.08px;">Media</div><div class="t" style="left:1814px;top:113px;font-size:12.5px;color:#e4e4e4;font-weight:bold;letter-spacing:-1.28px;">CR</div><div class="t" style="left:1865px;top:113px;font-size:12.5px;color:#fff;font-weight:bold;letter-spacing:0.23px;">Meter</div><div class="grp" style="left:1674px;top:139px;width:233px;height:23px"></div><svg style="left:1681px;top:145.5px" width="8" height="10" viewBox="0 0 8 10" ><path d="M0 0l8 5-8 5z" fill="#fff"/></svg><div class="t" style="left:1699px;top:145.5px;font-size:12.5px;color:#ececec;letter-spacing:-0.20px;">Master</div><div class="a" style="left:1674px;top:179px;width:229px;height:18px;background:#000"></div><div class="t" style="left:1702px;top:183px;font-size:10.5px;color:#fff;font-weight:bold;letter-spacing:-0.34px;">Digital Scale</div><div class="t" style="left:1825px;top:183px;font-size:10.5px;color:#5f7088;letter-spacing:-0.42px;">-18 dBFS</div><div class="a" style="left:1674px;top:201px;width:113px;height:19px;background:#1a1c1f;border:1px solid #4b4e52;border-radius:4px"></div><div class="a" style="left:1676px;top:203px;width:109px;height:14px;background:linear-gradient(#b2b4b8,#94969a);border-radius:2px"></div><div class="a" style="left:1789px;top:201px;width:113px;height:19px;background:#1a1c1f;border:1px solid #4b4e52;border-radius:4px"></div><div class="a" style="left:1791px;top:203px;width:109px;height:14px;background:linear-gradient(#b2b4b8,#94969a);border-radius:2px"></div><svg style="left:1727px;top:205px" width="12" height="12" viewBox="0 0 12 12" ><path d="M4.21 1.92L4.26 0.66L6.74 0.66L6.79 1.92L7.95 2.60L9.07 2.00L10.32 4.16L9.24 4.83L9.24 6.17L10.32 6.84L9.07 9.00L7.95 8.40L6.79 9.08L6.74 10.34L4.26 10.34L4.21 9.08L3.05 8.40L1.93 9.00L0.68 6.84L1.76 6.17L1.76 4.83L0.68 4.16L1.93 2.00L3.05 2.60Z" fill="#000" stroke="#000" stroke-width=".6" stroke-linejoin="round"/><circle cx="5.5" cy="5.5" r="1.70" fill="#a3a5a9"/></svg><svg style="left:1839px;top:206px" width="14" height="10" viewBox="0 0 14 10" ><path d="M1 0.500v8" stroke="#000" stroke-width="1.500"/><path d="M7 0.500v8l-4.500-4z M12 0.500v8l-4.500-4z" fill="#000"/></svg><div class="a" style="left:1734px;top:242px;width:114px;height:645px;background:#2a2d30;border:1px solid #77797c"></div><div class="a" style="left:1737px;top:245px;width:108px;height:639px;background:#000"></div><div class="a" style="left:1737px;top:282px;width:52px;height:1px;background:#6c6f73"></div><div class="a" style="left:1791px;top:282px;width:54px;height:1px;background:#6c6f73"></div><div class="t" style="left:1698px;top:237px;font-size:13.5px;color:#c6c6c6;font-weight:bold;width:30px;text-align:center">0</div><div class="t" style="left:1852px;top:237px;font-size:13.5px;color:#c6c6c6;font-weight:bold;width:30px;text-align:center">0</div><div class="t" style="left:1698px;top:315px;font-size:13.5px;color:#c6c6c6;font-weight:bold;width:30px;text-align:center">5</div><div class="t" style="left:1852px;top:315px;font-size:13.5px;color:#c6c6c6;font-weight:bold;width:30px;text-align:center">5</div><div class="t" style="left:1698px;top:394px;font-size:13.5px;color:#c6c6c6;font-weight:bold;width:30px;text-align:center">10</div><div class="t" style="left:1852px;top:394px;font-size:13.5px;color:#c6c6c6;font-weight:bold;width:30px;text-align:center">10</div><div class="t" style="left:1698px;top:472px;font-size:13.5px;color:#c6c6c6;font-weight:bold;width:30px;text-align:center">15</div><div class="t" style="left:1852px;top:472px;font-size:13.5px;color:#c6c6c6;font-weight:bold;width:30px;text-align:center">15</div><div class="t" style="left:1698px;top:550px;font-size:13.5px;color:#c6c6c6;font-weight:bold;width:30px;text-align:center">20</div><div class="t" style="left:1852px;top:550px;font-size:13.5px;color:#c6c6c6;font-weight:bold;width:30px;text-align:center">20</div><div class="t" style="left:1698px;top:616px;font-size:13.5px;color:#c6c6c6;font-weight:bold;width:30px;text-align:center">25</div><div class="t" style="left:1852px;top:616px;font-size:13.5px;color:#c6c6c6;font-weight:bold;width:30px;text-align:center">25</div><div class="t" style="left:1698px;top:674px;font-size:13.5px;color:#c6c6c6;font-weight:bold;width:30px;text-align:center">30</div><div class="t" style="left:1852px;top:674px;font-size:13.5px;color:#c6c6c6;font-weight:bold;width:30px;text-align:center">30</div><div class="t" style="left:1698px;top:725px;font-size:13.5px;color:#c6c6c6;font-weight:bold;width:30px;text-align:center">35</div><div class="t" style="left:1852px;top:725px;font-size:13.5px;color:#c6c6c6;font-weight:bold;width:30px;text-align:center">35</div><div class="t" style="left:1698px;top:769px;font-size:13.5px;color:#c6c6c6;font-weight:bold;width:30px;text-align:center">40</div><div class="t" style="left:1852px;top:769px;font-size:13.5px;color:#c6c6c6;font-weight:bold;width:30px;text-align:center">40</div><div class="t" style="left:1698px;top:832px;font-size:13.5px;color:#c6c6c6;font-weight:bold;width:30px;text-align:center">50</div><div class="t" style="left:1852px;top:832px;font-size:13.5px;color:#c6c6c6;font-weight:bold;width:30px;text-align:center">50</div><div class="t" style="left:1698px;top:857px;font-size:13.5px;color:#c6c6c6;font-weight:bold;width:30px;text-align:center">60</div><div class="t" style="left:1852px;top:857px;font-size:13.5px;color:#c6c6c6;font-weight:bold;width:30px;text-align:center">60</div><svg style="left:0px;top:0px" width="1920" height="1042" viewBox="0 0 1920 1042" shape-rendering="crispEdges"><path d="M1724 245.5h8M1849 245.5h8" stroke="#c8c8c8" stroke-width="1"/><path d="M1724 323.5h8M1849 323.5h8" stroke="#c8c8c8" stroke-width="1"/><path d="M1724 402.5h8M1849 402.5h8" stroke="#c8c8c8" stroke-width="1"/><path d="M1724 480.5h8M1849 480.5h8" stroke="#c8c8c8" stroke-width="1"/><path d="M1724 558.5h8M1849 558.5h8" stroke="#c8c8c8" stroke-width="1"/><path d="M1724 624.5h8M1849 624.5h8" stroke="#c8c8c8" stroke-width="1"/><path d="M1724 682.5h8M1849 682.5h8" stroke="#c8c8c8" stroke-width="1"/><path d="M1724 733.5h8M1849 733.5h8" stroke="#c8c8c8" stroke-width="1"/><path d="M1724 777.5h8M1849 777.5h8" stroke="#c8c8c8" stroke-width="1"/><path d="M1724 840.5h8M1849 840.5h8" stroke="#c8c8c8" stroke-width="1"/><path d="M1724 865.5h8M1849 865.5h8" stroke="#c8c8c8" stroke-width="1"/><path d="M1728 261.5h4M1849 261.5h4" stroke="#c8c8c8" stroke-width="1"/><path d="M1728 276.5h4M1849 276.5h4" stroke="#c8c8c8" stroke-width="1"/><path d="M1728 292.5h4M1849 292.5h4" stroke="#c8c8c8" stroke-width="1"/><path d="M1728 307.5h4M1849 307.5h4" stroke="#c8c8c8" stroke-width="1"/><path d="M1728 339.5h4M1849 339.5h4" stroke="#c8c8c8" stroke-width="1"/><path d="M1728 354.5h4M1849 354.5h4" stroke="#c8c8c8" stroke-width="1"/><path d="M1728 370.5h4M1849 370.5h4" stroke="#c8c8c8" stroke-width="1"/><path d="M1728 386.5h4M1849 386.5h4" stroke="#c8c8c8" stroke-width="1"/><path d="M1728 418.5h4M1849 418.5h4" stroke="#c8c8c8" stroke-width="1"/><path d="M1728 433.5h4M1849 433.5h4" stroke="#c8c8c8" stroke-width="1"/><path d="M1728 449.5h4M1849 449.5h4" stroke="#c8c8c8" stroke-width="1"/><path d="M1728 465.5h4M1849 465.5h4" stroke="#c8c8c8" stroke-width="1"/><path d="M1728 496.5h4M1849 496.5h4" stroke="#c8c8c8" stroke-width="1"/><path d="M1728 511.5h4M1849 511.5h4" stroke="#c8c8c8" stroke-width="1"/><path d="M1728 527.5h4M1849 527.5h4" stroke="#c8c8c8" stroke-width="1"/><path d="M1728 543.5h4M1849 543.5h4" stroke="#c8c8c8" stroke-width="1"/><path d="M1728 812.5h4M1849 812.5h4" stroke="#c8c8c8" stroke-width="1"/></svg><div class="a" style="left:1674px;top:909px;width:233px;height:50px;background:#121315;border:1px solid #3a3e42;border-radius:4px"></div><div class="t" style="left:1722.5px;top:921.5px;font-size:11px;color:#fff;font-weight:bold;letter-spacing:0.16px;">RMS Max</div><div class="t" style="left:1807.5px;top:921.5px;font-size:11px;color:#fff;font-weight:bold;letter-spacing:0.04px;">Peak Max</div><div class="t" style="left:1735px;top:939.5px;font-size:11px;color:#fff;font-weight:bold;letter-spacing:0.09px;">-17.1</div><div class="t" style="left:1823px;top:939.5px;font-size:11px;color:#fff;font-weight:bold;letter-spacing:0.14px;">-2.4</div><div class="t" style="left:1685px;top:980.5px;font-size:12.5px;color:#fff;font-weight:bold;letter-spacing:-0.05px;">Master</div><div class="t" style="left:1765px;top:980.5px;font-size:12.5px;color:#e4e4e4;font-weight:bold;letter-spacing:-0.75px;">Loudness</div><div class="a" style="left:0px;top:1000px;width:1920px;height:39px;background:#24282b"></div><div class="a" style="left:0px;top:1039px;width:1920px;height:1px;background:#33363a"></div><div class="a" style="left:0px;top:1040px;width:1920px;height:2px;background:#444648"></div><div class="a" style="left:1522px;top:1039px;width:344px;height:1px;background:#55575a"></div><div class="a" style="left:1522px;top:1040px;width:344px;height:2px;background:#7e7f81"></div><div class="grp" style="left:6px;top:1007px;width:25px;height:25px;background:#5a5c60;"></div><svg style="left:6px;top:1007px" width="25" height="25" viewBox="0 0 25 25" ><circle cx="12.500" cy="12.500" r="4.500" fill="#fff"/><path d="M12.500 9.800v3h2.600" stroke="#5a5c60" stroke-width="1.300" fill="none"/><path d="M7.200 7a7.500 7.500 0 0 0 0 11M17.800 7a7.500 7.500 0 0 1 0 11" fill="none" stroke="#fff" stroke-width="1.600"/></svg><div class="grp" style="left:36px;top:1007px;width:44px;height:25px;background:#17181c;"></div><svg style="left:36px;top:1007px" width="44" height="25" viewBox="0 0 44 25" ><circle cx="13" cy="12" r="5.300" fill="#fff"/><path d="M27.500 8.500h9l-4.500 7z" fill="#fff"/></svg><svg style="left:81.5px;top:1012px" width="4" height="16" viewBox="0 0 4 16" ><rect x="0" y="2.500" width="2.700" height="2.300" fill="#b8babd"/><rect x="0" y="6.400" width="2.700" height="2.300" fill="#b8babd"/><rect x="0" y="10.300" width="2.700" height="2.300" fill="#b8babd"/></svg><div class="grp" style="left:91px;top:1007px;width:44px;height:25px;background:#17181c;"></div><svg style="left:91px;top:1007px" width="44" height="25" viewBox="0 0 44 25" ><path d="M3.500 12.500h2l1.200-2.200 1.400 5 1.700-9 1.700 13 1.700-14.500 1.700 12.500 1.500-7 1.400 4 1.200-1.800h2" fill="none" stroke="#fff" stroke-width="1.300" stroke-linejoin="round"/><path d="M27.500 8.500h9l-4.500 7z" fill="#fff"/></svg><svg style="left:136.5px;top:1012px" width="4" height="16" viewBox="0 0 4 16" ><rect x="0" y="2.500" width="2.700" height="2.300" fill="#b8babd"/><rect x="0" y="6.400" width="2.700" height="2.300" fill="#b8babd"/><rect x="0" y="10.300" width="2.700" height="2.300" fill="#b8babd"/></svg><div class="grp" style="left:146px;top:1007px;width:44px;height:25px;background:#17181c;"></div><svg style="left:146px;top:1007px" width="44" height="25" viewBox="0 0 44 25" ><circle cx="13" cy="12.500" r="7" fill="#fff"/><circle cx="8.800" cy="12.500" r="1.100" fill="#17181c"/><circle cx="10.200" cy="9.300" r="1.100" fill="#17181c"/><circle cx="13" cy="8" r="1.100" fill="#17181c"/><circle cx="15.800" cy="9.300" r="1.100" fill="#17181c"/><circle cx="17.200" cy="12.500" r="1.100" fill="#17181c"/><path d="M27.500 8.500h9l-4.500 7z" fill="#fff"/></svg><svg style="left:191.5px;top:1012px" width="4" height="16" viewBox="0 0 4 16" ><rect x="0" y="2.500" width="2.700" height="2.300" fill="#b8babd"/><rect x="0" y="6.400" width="2.700" height="2.300" fill="#b8babd"/><rect x="0" y="10.300" width="2.700" height="2.300" fill="#b8babd"/></svg><div class="grp" style="left:201px;top:1007px;width:38px;height:25px;background:#5a5c60;"></div><div class="t" style="left:211px;top:1012.5px;font-size:14px;color:#fff;letter-spacing:-0.8px">AQ</div><div class="grp" style="left:530px;top:1007px;width:150px;height:25px;background:#5a5c60;"><div class="cell" style="left:24px;width:126px;background:#17181c;border-left:1px solid #85878b"></div></div><svg style="left:530px;top:1007px" width="25" height="25" viewBox="0 0 25 25" ><path d="M8.600 6.500h8.600L8.600 15.200z" fill="#fff"/><path d="M9.300 6.500v11.700" stroke="#fff" stroke-width="1.400"/><path d="M8.500 25l4-4.300 4 4.300z" fill="#24282b"/></svg><div class="t" style="left:559px;top:1012px;font-size:15px;color:#fff;width:115px;text-align:right;letter-spacing:.2px">1.&nbsp;&nbsp;1.&nbsp;&nbsp;1.&nbsp;&nbsp;&nbsp;&nbsp;0</div><div class="grp" style="left:686px;top:1007px;width:150px;height:25px;background:#5a5c60;"><div class="cell" style="left:24px;width:126px;background:#17181c;border-left:1px solid #85878b"></div></div><svg style="left:686px;top:1007px" width="25" height="25" viewBox="0 0 25 25" ><path d="M8 6.500h8.600v8.700z" fill="#fff"/><path d="M15.900 6.500v11.700" stroke="#fff" stroke-width="1.400"/><path d="M8.500 25l4-4.300 4 4.300z" fill="#24282b"/></svg><div class="t" style="left:715px;top:1012px;font-size:15px;color:#fff;width:115px;text-align:right;letter-spacing:.2px">36.&nbsp;&nbsp;3.&nbsp;&nbsp;3.&nbsp;&nbsp;39</div><div class="grp" style="left:841px;top:1007px;width:75px;height:25px;background:#5a5c60;"><div class="cell w" style="left:0px;width:25px;background:#f2f2f2"></div></div><svg style="left:841px;top:1007px" width="75" height="25" viewBox="0 0 75 25" ><rect x="8" y="11" width="10" height="8" rx="1" fill="#000"/><path d="M10 11V8.500a3 3 0 0 1 6 0V11" fill="none" stroke="#000" stroke-width="1.800"/><path d="M33 7h9l-4.500 6.500z" fill="#fff"/><circle cx="37.500" cy="16.500" r="1.600" fill="#fff"/><path d="M33.500 25l4-4.300 4 4.300z" fill="#24282b"/><path d="M58 18h9l-4.500-6.500z" fill="#fff"/><circle cx="62.500" cy="8.500" r="1.600" fill="#fff"/><path d="M58.500 25l4-4.300 4 4.300z" fill="#24282b"/></svg><svg style="left:918px;top:1012px" width="4" height="16" viewBox="0 0 4 16" ><rect x="0" y="2.500" width="2.700" height="2.300" fill="#b8babd"/><rect x="0" y="6.400" width="2.700" height="2.300" fill="#b8babd"/><rect x="0" y="10.300" width="2.700" height="2.300" fill="#b8babd"/></svg><div class="a" style="left:927px;top:1004px;width:200px;height:32px;background:#3c3f43;border:2px solid #a4a7ab;border-radius:5px;overflow:hidden"><div class="cell" style="left:48px;width:50px;background:#e3e9f3"></div></div><svg style="left:927px;top:1004px" width="200" height="32" viewBox="0 0 200 32" ><path d="M18.800 20H28.300A4.600 4.600 0 0 0 28.300 10.800H26.600L18.800 19.600" fill="none" stroke="#fff" stroke-width="1.700" stroke-linejoin="round" stroke-linecap="round"/><rect x="71.300" y="11" width="9.800" height="9.600" fill="none" stroke="#000" stroke-width="2.100"/><path d="M120.500 9.500v12l10.500-6z" fill="none" stroke="#fff" stroke-width="1.700" stroke-linejoin="round"/><circle cx="175.500" cy="15.500" r="5.600" fill="none" stroke="#fff" stroke-width="1.700"/></svg><svg style="left:1129px;top:1012px" width="4" height="16" viewBox="0 0 4 16" ><rect x="0" y="2.500" width="2.700" height="2.300" fill="#b8babd"/><rect x="0" y="6.400" width="2.700" height="2.300" fill="#b8babd"/><rect x="0" y="10.300" width="2.700" height="2.300" fill="#b8babd"/></svg><div class="grp" style="left:1138px;top:1007px;width:38px;height:25px;background:#5a5c60;"></div><svg style="left:1138px;top:1007px" width="38" height="25" viewBox="0 0 38 25" ><circle cx="15.800" cy="12" r="3.200" fill="#85878b"/><path d="M18.500 5.200a7.200 7.200 0 0 1 0 13.600 8.500 8.500 0 0 0 2-6.800 8.500 8.500 0 0 0-2-6.800z" fill="none" stroke="#85878b" stroke-width="2.200" stroke-linejoin="round"/></svg><div class="grp" style="left:1181px;top:1007px;width:150px;height:25px;background:#5a5c60;"><div class="cell" style="left:24px;width:126px;background:#17181c;border-left:1px solid #85878b"></div></div><svg style="left:1181px;top:1007px" width="25" height="25" viewBox="0 0 25 25" ><ellipse cx="12.300" cy="17" rx="3.300" ry="2.500" fill="#fff" transform="rotate(-20 12.300 17)"/><path d="M15.200 16.500V5" stroke="#fff" stroke-width="1.500"/></svg><div class="t" style="left:1210px;top:1012px;font-size:15px;color:#fff;width:115px;text-align:right;letter-spacing:.2px">1.&nbsp;&nbsp;1.&nbsp;&nbsp;1.&nbsp;&nbsp;&nbsp;&nbsp;0</div><svg style="left:1333px;top:1012px" width="4" height="16" viewBox="0 0 4 16" ><rect x="0" y="2.500" width="2.700" height="2.300" fill="#b8babd"/><rect x="0" y="6.400" width="2.700" height="2.300" fill="#b8babd"/><rect x="0" y="10.300" width="2.700" height="2.300" fill="#b8babd"/></svg><div class="grp" style="left:1342px;top:1007px;width:107px;height:25px;background:#5a5c60;"><div class="cell" style="left:24px;width:83px;background:#17181c;border-left:1px solid #85878b"></div></div><svg style="left:1343px;top:1007px" width="25" height="25" viewBox="0 0 25 25" ><ellipse cx="8.500" cy="16" rx="2.800" ry="2.200" fill="#fff"/><path d="M11 15.500V6" stroke="#fff" stroke-width="1.400"/><path d="M16.500 6v13M14 8.500l2.500-3 2.500 3M14 16.500l2.500 3 2.500-3" fill="none" stroke="#fff" stroke-width="1.300"/></svg><div class="t" style="left:1380px;top:1012.5px;font-size:13.5px;color:#fff;letter-spacing:-0.68px;">120.000</div><svg style="left:1432px;top:1011px" width="9" height="17" viewBox="0 0 9 17" ><path d="M0 6.500h8.500l-4.250-6z M0 10h8.500l-4.250 6z" fill="#fff"/></svg><svg style="left:1451.5px;top:1012px" width="4" height="16" viewBox="0 0 4 16" ><rect x="0" y="2.500" width="2.700" height="2.300" fill="#b8babd"/><rect x="0" y="6.400" width="2.700" height="2.300" fill="#b8babd"/><rect x="0" y="10.300" width="2.700" height="2.300" fill="#b8babd"/></svg><div class="grp" style="left:1736px;top:1007px;width:50px;height:25px;background:#5a5c60;"></div><svg style="left:1736px;top:1007px" width="50" height="25" viewBox="0 0 50 25" ><path d="M8.500 18.500l3.500-12h2l2 12z" fill="#fff"/><path d="M11.500 15L18 6" stroke="#fff" stroke-width="1.300"/><circle cx="18" cy="6.500" r="1.200" fill="#fff"/></svg><svg style="left:1765.5px;top:1011.5px" width="16" height="16" viewBox="0 0 16 16" ><path d="M4.10 9.80L12.46 5.73A5.00 5.00 0 1 0 12.78 9.46" fill="none" stroke="#fff" stroke-width="1.9" stroke-linejoin="round"/></svg><svg style="left:1787.5px;top:1012px" width="4" height="16" viewBox="0 0 4 16" ><rect x="0" y="2.500" width="2.700" height="2.300" fill="#b8babd"/><rect x="0" y="6.400" width="2.700" height="2.300" fill="#b8babd"/><rect x="0" y="10.300" width="2.700" height="2.300" fill="#b8babd"/></svg><div class="a" style="left:1800px;top:1005px;width:75px;height:31px;background:#000;border-radius:4px"></div><div class="a" style="left:1821px;top:1008px;width:1px;height:25px;background:#55585c"></div><div class="a" style="left:1831px;top:1032px;width:7px;height:1px;background:#22bce6"></div><div class="a" style="left:1839px;top:1032px;width:7px;height:1px;background:#22bce6"></div><svg style="left:1879.5px;top:1012px" width="4" height="16" viewBox="0 0 4 16" ><rect x="0" y="2.500" width="2.700" height="2.300" fill="#b8babd"/><rect x="0" y="6.400" width="2.700" height="2.300" fill="#b8babd"/><rect x="0" y="10.300" width="2.700" height="2.300" fill="#b8babd"/></svg><div class="grp" style="left:1889px;top:1007px;width:25px;height:25px;background:#5a5c60;"></div><svg style="left:1889px;top:1007px" width="25" height="25" viewBox="0 0 25 25" ><path d="M10.98 7.28L11.07 5.85L13.93 5.85L14.02 7.28L15.12 7.73L16.19 6.79L18.21 8.81L17.27 9.88L17.72 10.98L19.15 11.07L19.15 13.93L17.72 14.02L17.27 15.12L18.21 16.19L16.19 18.21L15.12 17.27L14.02 17.72L13.93 19.15L11.07 19.15L10.98 17.72L9.88 17.27L8.81 18.21L6.79 16.19L7.73 15.12L7.28 14.02L5.85 13.93L5.85 11.07L7.28 10.98L7.73 9.88L6.79 8.81L8.81 6.79L9.88 7.73Z" fill="#fff" stroke="#fff" stroke-width=".6" stroke-linejoin="round"/><circle cx="12.5" cy="12.5" r="2.86" fill="#5a5c60"/></svg></body></html>
